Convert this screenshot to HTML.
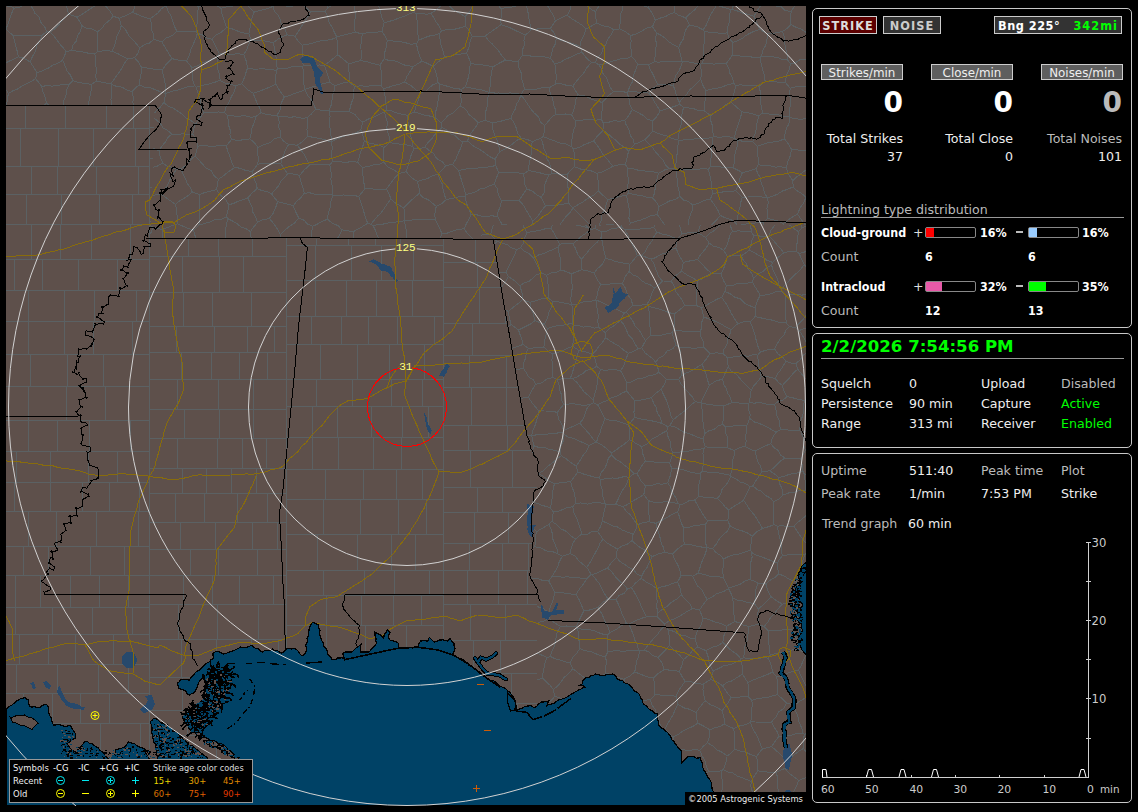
<!DOCTYPE html>
<html><head><meta charset="utf-8"><title>Lightning</title>
<style>
html,body{margin:0;padding:0;background:#000;}
body{width:1138px;height:812px;position:relative;overflow:hidden;font-family:"DejaVu Sans","Liberation Sans",sans-serif;font-size:12px;}
.panel{position:absolute;border:1px solid #c8c8c8;border-radius:5px;box-sizing:content-box}
.t{position:absolute;white-space:nowrap;line-height:15px;font-size:12.6px;margin-top:0px}
.r{text-align:right}
.b{font-family:"DejaVu Sans Condensed","DejaVu Sans",sans-serif;font-weight:bold}
.t.b{font-size:12.4px}
.btn{position:absolute;border:1px solid #ccc;text-align:center;white-space:nowrap;font-size:11.9px;line-height:16px}
.btn.b{font-size:12.6px;line-height:17px;letter-spacing:1.05px}
.big{position:absolute;font-weight:bold;font-size:28px;line-height:34px;font-family:"DejaVu Sans",sans-serif;margin-top:2px}
.hr{position:absolute;height:1px;background:#999}
.bar{position:absolute;width:49px;height:9px;border:1px solid #888;border-radius:2px;background:#000}
.bar i{display:block;height:9px}
.dash{position:absolute;width:7px;height:2px;background:#bbb}
.date{position:absolute;color:#0f0;font-weight:bold;font-size:16.6px;line-height:22px;white-space:nowrap;font-family:"DejaVu Sans",sans-serif}
#map{position:absolute;left:6px;top:6px}
#legend{position:absolute;left:9px;top:759px;width:242px;height:42px;background:#000;border:1px solid #999}
.lt{position:absolute;white-space:nowrap;font-size:9.4px;line-height:12px;font-family:"DejaVu Sans Condensed","DejaVu Sans",sans-serif}
#copy{position:absolute;left:685px;top:792px;width:121px;height:14px;background:#000;color:#eee;font-size:9.3px;line-height:14px;text-align:center;white-space:nowrap;font-family:"DejaVu Sans Condensed","DejaVu Sans",sans-serif}
</style></head><body>
<svg id="map" width="800" height="800" viewBox="6 6 800 800" shape-rendering="crispEdges">
<rect x="6" y="6" width="800" height="800" fill="#5e504b"/>
<path d="M731.1 329.6 L737.8 323.7 M731.1 329.6 L725.2 326.6 L720.8 323.8 L715.2 321.3 L710.2 319.4 L703.9 317.0 M737.8 323.7 L735.3 320.0 L731.7 314.1 L730.1 310.7 L727.4 305.7 L724.3 301.1 L721.7 297.3 M721.7 297.3 L716.4 299.5 L711.6 302.2 L706.0 305.4 L701.3 307.8 M703.9 317.0 L701.3 307.8 M806.0 251.2 L804.5 252.0 L799.2 253.6 M799.2 253.6 L801.9 259.8 L804.1 264.6 M804.1 264.6 L806.0 266.4 M703.9 317.0 L702.0 321.5 L701.9 327.1 L700.2 331.9 M701.3 307.8 L696.5 305.5 M696.5 305.5 L690.0 305.1 L684.8 305.6 M684.8 305.6 L678.7 310.6 L674.2 314.1 M674.2 314.1 L674.3 319.5 L674.4 325.9 L673.2 330.5 M673.2 330.5 L678.1 330.3 L683.4 331.3 L689.6 331.4 L695.3 331.7 L700.2 331.9 M697.7 259.5 L702.4 264.6 L706.7 269.1 L711.6 273.6 M697.7 259.5 L690.9 260.7 L683.3 262.4 M683.3 262.4 L681.7 271.2 M681.7 271.2 L687.3 275.1 L692.0 277.5 L697.5 280.7 M697.5 280.7 L702.2 278.9 L706.5 275.5 L711.6 273.6 M696.5 305.5 L696.5 299.5 L696.4 293.9 L697.3 287.3 L697.5 280.7 M684.8 305.6 L681.9 299.8 L679.1 295.9 L675.9 291.7 L674.0 285.9 L671.1 281.1 M671.1 281.1 L675.5 275.7 L681.7 271.2 M621.3 226.8 L621.8 225.0 M621.3 226.8 L624.8 230.0 M624.8 230.0 L630.9 229.2 L636.4 229.7 L641.6 228.7 L647.5 228.7 L653.8 227.5 M654.7 225.0 L653.8 227.5 M698.0 232.6 L699.4 227.6 L700.4 225.0 M698.0 232.6 L692.9 232.5 L686.7 233.0 L681.8 234.0 M679.6 225.0 L680.4 228.3 L681.8 234.0 M551.0 228.0 L544.6 229.0 L538.8 230.8 L532.7 231.2 L527.2 232.9 M551.0 228.0 L554.5 233.9 L557.4 239.2 L559.5 244.1 M559.5 244.1 L558.6 246.7 M527.2 232.9 L524.4 237.9 L523.3 243.3 L520.4 247.7 M520.4 247.7 L524.4 251.1 L529.4 253.7 L533.6 258.0 M558.6 246.7 L553.2 249.4 L548.9 251.1 L543.8 253.5 L538.4 255.0 L533.6 258.0 M605.5 258.5 L604.8 253.7 L603.2 248.5 L602.8 243.1 L601.1 237.5 M605.5 258.5 L602.3 264.2 L597.2 269.0 L594.3 273.1 M601.1 237.5 L597.1 242.3 L593.6 245.4 L589.4 249.7 L585.7 254.4 L581.4 259.1 M594.3 273.1 L587.7 271.0 L581.5 269.6 M581.5 269.6 L582.0 264.6 L581.4 259.1 M630.0 264.1 L633.3 260.2 L637.3 255.5 M630.0 264.1 L624.5 263.5 L620.4 262.3 L615.5 261.6 L610.7 259.5 L605.5 258.5 M621.3 226.8 L616.5 228.1 L611.0 228.9 L606.9 231.1 L601.4 231.8 M624.8 230.0 L628.2 235.5 L629.8 240.0 L632.7 245.6 L635.6 250.8 L637.3 255.5 M601.4 231.8 L601.1 237.5 M573.0 244.0 L575.6 248.6 L577.8 254.6 L581.4 259.1 M573.0 244.0 L577.3 240.1 L581.0 236.6 L587.0 232.5 L590.8 229.2 M601.4 231.8 L596.0 228.8 M596.0 228.8 L590.8 229.2 M596.0 228.8 L595.3 225.0 M575.8 225.0 L577.5 225.3 L582.7 226.4 L588.9 228.3 M552.6 225.0 L551.0 228.0 M559.5 244.1 L566.6 243.7 L573.0 244.0 M588.9 228.3 L590.8 229.2 M490.8 234.3 L492.2 227.7 L493.7 225.0 M490.8 234.3 L484.3 234.8 L480.7 235.1 M806.0 450.5 L805.3 450.4 M801.2 432.2 L806.0 431.3 M801.2 432.2 L803.1 437.5 L803.7 444.7 L805.3 450.4 M731.1 329.6 L729.7 334.7 L727.4 338.7 L726.9 344.9 L723.9 349.4 L723.2 353.7 M737.8 323.7 L743.4 322.0 L750.2 321.7 M757.7 355.1 L752.7 354.7 L748.0 356.3 L741.9 355.4 L737.2 356.8 L731.2 357.1 L726.9 357.0 M757.7 355.1 L760.4 351.9 M760.4 351.9 L758.0 346.6 L756.4 341.1 L755.3 336.4 L754.3 332.5 L752.3 326.8 L750.2 321.7 M723.2 353.7 L726.9 357.0 M806.0 399.4 L804.7 400.2 M801.2 432.2 L799.7 430.3 M799.7 430.3 L800.2 424.6 L800.9 420.3 L802.7 415.7 L803.8 410.8 L803.5 404.5 L804.7 400.2 M806.0 379.1 L805.4 378.3 L802.2 374.7 L797.7 369.3 M795.9 363.5 L797.7 369.3 M795.9 363.5 L800.2 359.7 L803.2 355.1 L806.0 353.4 M806.0 491.2 L805.1 490.2 M806.0 474.4 L804.6 474.7 M804.6 474.7 L805.0 479.9 L805.3 485.2 L805.1 490.2 M705.5 237.5 L709.1 233.7 L714.5 230.5 L718.4 226.4 L719.6 225.0 M705.5 237.5 L698.0 232.6 M806.0 226.1 L801.8 228.0 M801.4 225.0 L801.8 228.0 M799.2 253.6 L796.7 251.6 M796.7 251.6 L796.9 245.0 L797.4 238.5 L798.6 231.8 M801.8 228.0 L798.6 231.8 M799.0 330.6 L802.1 334.8 L804.6 339.2 L806.0 341.6 M799.0 330.6 L804.2 328.6 L806.0 328.3 M806.0 543.1 L803.6 540.4 L800.6 536.2 L797.4 531.7 L793.8 526.3 M806.0 515.6 L803.3 518.0 L797.6 522.5 L793.8 526.3 M782.4 555.6 L781.1 549.0 L781.0 543.7 L779.6 537.2 L778.3 531.9 L777.4 526.2 M782.4 555.6 L788.4 554.8 L794.5 554.7 L799.3 554.7 L804.9 554.4 M777.4 526.2 L782.5 525.4 L787.5 527.0 L793.8 526.3 M804.9 554.4 L806.0 553.6 M674.2 314.1 L669.4 312.7 L663.2 310.4 L659.4 309.1 L653.3 307.7 L648.6 306.1 M673.2 330.5 L672.0 332.9 M672.0 332.9 L665.8 334.0 L661.7 335.2 L655.5 335.4 L650.5 335.8 M650.5 335.8 L650.9 330.6 L649.6 324.8 L649.4 318.1 L649.1 311.5 L648.6 306.1 M654.5 288.1 L651.8 293.6 L650.0 299.2 L646.9 304.5 M654.5 288.1 L658.1 285.4 L662.3 281.0 M671.1 281.1 L662.3 281.0 M648.6 306.1 L646.9 304.5 M630.0 264.1 L629.0 271.5 M629.0 271.5 L625.0 277.0 L622.5 283.7 M594.3 273.1 L597.3 279.9 L600.9 284.9 M600.9 284.9 L606.2 284.4 L612.3 283.8 L617.6 283.2 L622.5 283.7 M629.0 271.5 L633.4 275.1 L637.7 276.6 L641.3 280.3 L645.6 283.3 L650.1 284.6 L654.5 288.1 M646.9 304.5 L640.3 305.2 L632.8 305.1 M622.5 283.7 L625.4 288.2 L627.4 294.4 L631.0 299.0 L632.8 305.1 M490.8 234.3 L496.9 241.5 M494.0 245.2 L496.9 241.5 M522.9 225.0 L524.0 227.5 L527.2 232.9 M520.4 247.7 L516.7 249.5 M496.9 241.5 L502.2 243.0 L507.6 244.8 L511.4 247.9 L516.7 249.5 M656.9 232.1 L662.7 234.1 L667.6 235.1 L673.0 237.3 L677.4 238.8 M656.9 232.1 L654.0 236.6 L651.5 241.7 L647.9 246.3 L645.3 251.7 L641.7 255.5 M651.0 259.1 L655.4 257.7 L660.5 254.5 L666.3 252.9 L670.5 249.8 L675.8 247.9 M651.0 259.1 L641.7 255.5 M675.8 247.9 L677.4 238.8 M653.8 227.5 L656.9 232.1 M681.8 234.0 L677.4 238.8 M637.3 255.5 L641.7 255.5 M662.3 281.0 L658.6 276.3 L656.4 270.8 L654.1 263.9 L651.0 259.1 M683.3 262.4 L680.2 257.3 L677.7 252.0 L675.8 247.9 M705.5 237.5 L709.2 243.1 M709.2 243.1 L705.8 248.6 L700.9 254.1 L697.7 259.5 M588.9 228.3 L585.3 225.0 L585.3 225.0 M760.1 295.1 L757.2 301.4 L755.2 308.1 M760.1 295.1 L757.4 290.5 L755.2 287.1 L752.3 281.9 M755.2 308.1 L750.3 305.9 L744.7 303.3 L740.8 299.1 L734.2 296.9 L729.6 293.4 L725.0 291.6 M752.3 281.9 L746.5 283.3 L741.9 283.7 L736.7 283.5 L732.4 285.7 L726.3 285.7 M725.0 291.6 L726.3 285.7 M721.7 297.3 L725.0 291.6 M750.2 321.7 L755.1 316.6 M755.1 316.6 L755.2 308.1 M711.6 273.6 L721.0 273.9 M721.0 273.9 L723.5 280.6 L726.3 285.7 M785.5 295.7 L785.9 301.0 L785.1 307.5 L785.1 312.0 L785.8 318.0 L786.3 323.0 M785.5 295.7 L790.6 294.5 L796.0 294.0 L801.7 295.2 L806.0 294.2 M806.0 314.9 L805.9 315.0 L802.7 319.9 L799.4 323.1 L795.4 327.5 M795.4 327.5 L789.4 326.6 M789.4 326.6 L786.3 323.0 M755.1 316.6 L761.1 317.9 L764.7 318.8 L770.3 319.6 L776.1 321.5 L781.5 322.8 L786.3 323.0 M781.5 291.2 L785.5 295.7 M781.5 291.2 L776.3 291.5 L771.0 293.8 L765.2 295.0 L760.1 295.1 M781.7 289.2 L784.7 285.3 L788.7 281.1 L792.5 276.9 L796.1 273.6 L801.2 268.7 L804.1 264.6 M781.7 289.2 L781.5 291.2 M799.0 330.6 L795.4 327.5 M774.7 348.9 L777.2 343.8 L780.0 339.1 L784.2 334.8 L785.7 330.6 L789.4 326.6 M774.7 348.9 L777.6 353.6 L782.7 357.2 L785.9 361.3 M785.9 361.3 L791.8 363.2 L795.9 363.5 M760.4 351.9 L767.7 349.8 L774.7 348.9 M769.7 470.9 L774.0 467.7 L777.6 464.1 L780.8 460.7 L785.1 458.1 M769.7 470.9 L774.3 473.8 L778.6 477.5 M778.6 477.5 L783.0 476.7 L789.1 474.4 L794.1 473.5 L798.0 472.9 L803.0 471.3 M785.1 458.1 L791.1 459.0 L796.2 458.9 L800.8 459.0 M800.8 459.0 L802.2 464.3 L803.0 471.3 M804.6 474.7 L803.0 471.3 M805.1 490.2 L799.6 490.6 L794.7 492.2 L788.6 493.0 L782.8 495.0 M782.8 495.0 L782.0 488.6 L779.2 483.0 L778.6 477.5 M805.3 450.4 L800.8 459.0 M709.2 243.1 L713.3 246.1 L719.0 247.4 L723.6 250.4 M730.1 225.0 L732.3 231.2 M732.3 231.2 L729.6 235.7 L728.5 241.0 L726.7 246.1 L723.6 250.4 M721.0 273.9 L723.7 268.5 L725.8 262.3 L727.5 256.4 M723.6 250.4 L727.5 256.4 M782.8 495.0 L779.2 498.8 L773.9 501.8 M761.8 471.4 L758.9 476.4 L755.9 480.8 L752.9 485.9 M761.8 471.4 L769.7 470.9 M752.9 485.9 L757.4 489.7 L761.6 491.4 L765.3 495.3 L770.6 498.2 L773.9 501.8 M777.4 526.2 L773.9 524.6 M773.9 501.8 L773.5 506.7 L773.1 512.9 L773.8 519.0 L773.9 524.6 M700.2 331.9 L701.0 336.8 L703.5 342.4 L703.8 347.2 M723.2 353.7 L716.8 352.9 L710.0 353.3 M703.8 347.2 L710.0 353.3 M662.2 423.5 L657.3 422.1 L652.0 420.9 L645.5 419.7 L641.0 419.1 L634.7 417.4 M662.2 423.5 L660.3 417.5 L657.3 412.8 L656.2 407.6 L653.4 402.6 L651.6 397.5 M634.7 417.4 L633.9 412.5 L634.5 407.2 L634.8 400.9 M651.6 397.5 L646.7 398.8 L640.6 400.1 L634.8 400.9 M669.8 425.6 L667.9 426.8 M669.8 425.6 L673.3 419.8 M667.9 426.8 L662.2 423.5 M673.3 419.8 L670.6 415.6 L669.6 409.7 L667.8 404.6 L666.0 399.4 L663.1 393.7 L661.4 389.2 M661.4 389.2 L656.1 393.1 L651.6 397.5 M516.7 249.5 L515.2 253.6 L512.5 259.4 L510.8 262.8 L508.1 267.6 L506.0 272.5 M498.4 272.2 L500.3 272.0 L506.0 272.5 M669.5 463.0 L671.6 457.3 L672.7 452.9 M669.5 463.0 L663.7 462.8 L657.3 462.8 L652.3 461.7 L645.5 460.9 M672.7 452.9 L670.7 447.0 L670.3 441.8 L668.0 436.6 L666.7 431.0 M666.7 431.0 L661.4 433.5 L656.3 437.0 L651.3 439.5 L647.1 444.2 L641.5 446.6 M645.5 460.9 L642.9 454.2 L641.5 446.6 M704.2 448.3 L699.3 449.5 L694.2 449.6 L688.1 451.2 L683.6 451.3 L677.9 452.4 L672.7 452.9 M704.2 448.3 L703.0 453.3 L703.4 459.9 L703.2 464.6 L702.2 471.1 M671.9 468.5 L678.1 468.6 L682.9 469.5 L688.4 471.6 L695.1 473.0 L700.4 473.2 M671.9 468.5 L669.5 463.0 M702.2 471.1 L700.4 473.2 M705.1 446.6 L703.0 439.0 M705.1 446.6 L704.2 448.3 M703.0 439.0 L699.0 437.8 L693.0 435.2 L688.2 433.5 L683.6 432.1 L679.9 429.9 L675.4 427.1 L669.8 425.6 M667.9 426.8 L666.7 431.0 M628.6 424.6 L634.7 417.4 M628.6 424.6 L629.8 432.2 L629.6 439.6 M629.6 439.6 L636.2 443.5 L641.5 446.6 M701.0 402.9 L701.7 407.2 L703.0 413.3 L702.3 418.2 L703.3 424.1 L703.8 427.6 L704.7 433.6 M701.0 402.9 L707.5 404.3 L711.5 404.7 L717.0 405.8 L723.2 406.0 M704.7 433.6 L709.1 430.7 L713.9 429.5 L718.5 425.8 L722.8 424.2 M722.8 424.2 L723.2 417.9 L723.8 412.8 L723.2 406.0 M782.4 555.6 L777.1 563.0 M804.9 554.4 L803.0 560.1 L802.0 566.0 M801.9 566.2 L800.4 570.0 L799.7 571.5 M798.0 576.0 L797.6 577.1 L796.1 581.7 M777.1 563.0 L777.7 568.0 L778.7 573.9 M796.1 581.7 L789.8 579.7 L784.6 576.3 L778.7 573.9 M547.8 705.1 L547.5 703.8 M537.0 704.5 L538.5 704.3 M562.0 699.0 L559.3 697.7 L554.7 696.3 M554.7 696.3 L551.3 700.4 L547.9 702.9 M732.3 231.2 L739.0 230.9 L744.2 231.4 L751.4 232.0 M751.4 232.0 L750.8 226.6 L751.0 225.0 M798.6 231.8 L794.9 229.3 L790.7 225.7 L789.6 225.0 M781.7 289.2 L778.8 284.6 L777.5 279.3 L775.7 275.2 L773.0 270.1 L771.6 265.0 M752.3 281.9 L753.5 278.1 M771.6 265.0 L767.2 267.6 L762.6 271.7 L758.0 274.3 L753.5 278.1 M727.5 256.4 L734.4 255.7 L741.6 255.7 M753.5 278.1 L751.5 273.1 L748.0 268.7 L746.5 263.8 L743.2 259.9 L741.6 255.7 M527.8 434.9 L531.6 435.7 M531.6 435.7 L532.8 440.5 L533.7 445.7 M532.0 452.9 L533.7 445.7 M672.0 332.9 L673.9 338.8 L675.9 344.9 M703.8 347.2 L697.1 348.0 L691.4 348.0 L686.0 347.5 L679.8 347.7 M675.9 344.9 L679.8 347.7 M702.1 364.2 L696.5 367.7 L691.7 370.9 L687.0 372.6 L681.3 375.8 M702.1 364.2 L704.4 370.1 L706.2 374.5 L707.4 379.6 L709.3 385.3 M709.3 385.3 L706.8 390.4 L704.0 396.3 L700.6 402.6 M678.6 379.4 L681.3 375.8 M678.6 379.4 L681.1 383.9 L684.7 388.4 L689.3 393.5 L692.4 397.1 L695.2 401.6 M700.6 402.6 L695.2 401.6 M710.0 353.3 L706.8 358.4 L702.1 364.2 M679.8 347.7 L680.2 352.9 L681.1 359.2 L681.4 363.8 L680.9 369.4 L681.3 375.8 M675.9 344.9 L672.7 348.8 L667.2 351.0 L663.8 355.5 L659.0 358.0 L655.7 362.0 M655.7 362.0 L657.7 366.9 L658.8 372.3 M658.8 372.3 L662.3 375.3 L666.3 379.4 M666.3 379.4 L672.2 379.3 L678.6 379.4 M673.3 419.8 L677.2 416.5 L682.1 412.8 L686.6 409.4 L690.0 405.9 L695.2 401.6 M661.4 389.2 L664.4 384.2 L666.3 379.4 M701.0 402.9 L700.6 402.6 M704.7 433.6 L703.0 439.0 M634.8 400.9 L630.3 395.2 L626.6 391.0 M658.8 372.3 L654.1 374.9 L648.6 375.8 L642.2 378.4 L638.1 378.5 L631.7 381.8 L627.0 382.9 M627.0 382.9 L626.6 391.0 M628.6 424.6 L622.3 422.9 L616.0 420.8 L610.6 420.8 L604.9 418.5 M626.6 391.0 L622.2 393.1 L616.7 396.2 L611.5 397.6 L607.7 400.3 L602.8 402.0 L597.6 404.7 M604.9 418.5 L602.4 413.8 L599.9 408.9 L597.6 404.7 M620.2 320.3 L623.6 324.4 L626.2 329.5 L628.4 334.7 L632.8 339.4 L634.9 343.6 L638.0 348.6 M620.2 320.3 L624.4 312.8 M624.4 312.8 L626.3 311.7 M626.3 311.7 L629.1 316.0 L633.2 321.7 L635.4 326.5 L639.3 330.2 L642.8 336.3 L645.5 340.8 M645.5 340.8 L641.7 347.9 M641.7 347.9 L638.0 348.6 M599.0 327.6 L597.6 321.7 L598.5 316.4 L597.4 311.1 L596.5 304.6 L595.8 300.0 M599.0 327.6 L605.4 332.8 M595.8 300.0 L601.2 302.0 L605.6 304.4 L609.8 306.1 L614.0 308.2 L618.9 310.6 L624.4 312.8 M605.4 332.8 L610.0 328.2 L615.4 324.7 L620.2 320.3 M600.9 284.9 L598.3 289.0 L597.6 294.4 L595.7 299.8 M632.8 305.1 L626.3 311.7 M650.5 335.8 L645.5 340.8 M655.7 362.0 L651.2 357.4 L645.5 353.4 L641.7 347.9 M539.0 473.6 L538.1 473.5 M539.0 473.6 L543.8 476.7 L548.6 480.8 L554.5 483.6 M554.5 483.6 L553.1 489.2 L552.4 496.0 L551.6 502.5 L550.2 507.8 M550.2 507.8 L545.2 506.2 L540.1 504.6 L534.9 502.5 L532.4 501.9 M561.3 455.7 L560.2 452.0 M561.3 455.7 L557.3 458.8 L552.4 462.9 L547.7 466.5 L544.0 470.1 L539.0 473.6 M560.2 452.0 L554.2 450.1 L549.4 449.7 L544.5 447.5 L539.5 447.7 L533.7 445.7 M538.8 410.9 L534.6 406.0 L531.7 402.5 L528.5 397.1 M538.8 410.9 L538.2 415.2 L536.6 420.8 L534.9 425.8 L532.6 430.6 L531.6 435.7 M520.7 398.5 L522.3 398.1 L528.5 397.1 M671.9 468.5 L670.2 475.9 L667.8 482.7 M645.5 460.9 L642.5 464.7 L640.1 468.9 L637.0 473.5 M637.0 473.5 L640.6 480.3 L645.4 485.8 M667.8 482.7 L661.8 484.3 L656.8 483.6 L651.2 485.6 L645.4 485.8 M750.3 486.6 L747.7 492.0 L745.8 495.7 L743.6 500.2 M750.3 486.6 L744.9 483.3 L740.6 482.2 L735.8 478.9 L730.9 476.3 M730.9 476.3 L728.3 481.4 L725.9 485.2 L722.2 488.8 L720.7 494.3 L717.3 498.5 M743.6 500.2 L738.6 503.7 L734.1 506.2 L728.6 510.1 M728.6 510.1 L724.9 506.7 L721.8 502.6 L717.3 498.5 M752.9 485.9 L750.3 486.6 M773.9 524.6 L768.7 526.7 L762.5 528.4 M762.5 528.4 L759.9 524.1 L757.0 518.8 L753.8 514.3 L750.1 510.1 L746.7 504.8 L743.6 500.2 M730.3 475.3 L730.9 476.3 M730.3 475.3 L724.5 474.1 L719.4 473.0 L713.6 472.2 L707.3 472.1 L702.2 471.1 M698.5 496.3 L699.0 489.9 L698.8 485.2 L700.2 479.3 L700.4 473.2 M698.5 496.3 L704.5 497.2 L710.8 497.6 L717.3 498.5 M762.5 528.4 L757.0 531.7 L752.2 536.2 M752.2 536.2 L747.5 532.9 L741.2 530.5 L736.5 529.3 L730.2 525.9 M728.6 510.1 L729.0 514.9 L727.7 520.6 M727.7 520.6 L730.2 525.9 M758.1 583.0 L765.8 583.9 M758.1 583.0 L750.0 579.4 M777.1 563.0 L772.1 561.1 L767.6 559.2 L761.7 556.9 L756.6 555.2 L751.7 552.6 M778.7 573.9 L775.1 577.3 L769.6 580.5 L765.8 583.9 M750.0 579.4 L750.9 574.8 L750.7 569.0 L750.4 563.9 L752.1 557.2 L751.7 552.6 M752.2 536.2 L751.1 543.1 L750.4 550.1 M750.4 550.1 L751.7 552.6 M705.1 446.6 L710.4 447.6 L715.7 447.9 L722.2 447.2 L727.9 447.9 M722.8 424.2 L725.4 426.8 M725.4 426.8 L725.2 432.0 L727.3 436.9 L727.2 443.4 L727.9 447.9 M730.3 475.3 L731.9 471.0 L732.4 466.0 L732.0 461.3 L734.1 456.0 L734.2 450.5 M727.9 447.9 L734.2 450.5 M723.2 406.0 L731.6 402.9 M709.3 385.3 L715.4 381.3 L722.7 379.0 M731.6 402.9 L730.5 397.6 L727.3 392.6 L726.5 388.9 L723.7 384.3 L722.7 379.0 M726.9 357.0 L728.3 366.7 M722.7 379.0 L725.0 373.6 L728.3 366.7 M657.8 612.8 L656.8 607.3 L657.1 600.7 L656.3 594.2 L656.9 588.7 M657.8 612.8 L663.3 608.6 L667.6 606.0 L671.5 602.2 L676.7 599.1 L681.3 594.6 M656.9 588.7 L661.4 586.7 L667.3 585.7 L671.9 583.6 L677.6 582.0 M681.3 594.6 L680.0 587.8 L677.6 582.0 M679.3 671.5 L673.5 670.2 L669.3 670.1 L664.3 669.5 M679.3 671.5 L682.2 664.8 L683.4 659.7 M683.4 659.7 L679.9 655.4 L675.9 652.0 L673.1 648.9 L669.5 645.2 M664.3 669.5 L661.9 662.9 L658.0 657.2 M669.5 645.2 L665.9 649.6 L662.0 653.7 L658.0 657.2 M657.8 612.8 L657.0 616.4 M657.0 616.4 L660.4 619.7 L664.6 624.0 M681.3 594.6 L684.3 598.4 L689.5 603.3 L692.3 608.5 M692.3 608.5 L687.6 611.2 L682.6 614.4 L678.0 617.0 L674.2 619.0 L669.4 620.7 L664.6 624.0 M644.2 650.3 L649.1 651.8 L652.5 655.7 L658.0 657.2 M644.2 650.3 L647.7 645.4 L650.7 642.0 L654.2 637.8 L658.0 633.8 L661.3 629.0 L665.0 625.8 M669.5 645.2 L669.2 638.0 L668.7 630.4 M668.7 630.4 L665.0 625.8 M657.0 616.4 L651.7 617.0 L646.6 616.7 M638.4 650.0 L637.5 644.9 L634.8 640.0 L633.5 635.2 L630.9 628.7 L629.1 624.3 M638.4 650.0 L639.5 651.0 M644.2 650.3 L639.5 651.0 M646.6 616.7 L640.6 618.6 L634.2 621.2 L629.1 624.3 M665.0 625.8 L664.6 624.0 M548.7 580.9 L551.3 585.8 L554.8 592.2 M548.7 580.9 L552.1 576.4 M552.1 576.4 L556.3 576.3 L562.4 577.3 L567.9 576.7 L571.6 577.8 L577.4 577.4 L581.4 578.2 L587.3 578.4 M587.3 578.4 L583.6 583.6 L579.5 589.0 L576.1 594.2 M576.1 594.2 L570.9 594.0 L564.8 593.2 L560.7 592.1 L554.8 592.2 M548.7 580.9 L544.0 580.9 L537.8 578.7 L534.0 578.4 L531.0 577.9 M537.0 605.9 L538.6 607.1 L544.5 609.4 L548.9 613.2 M554.8 592.2 L553.7 597.7 L552.1 602.5 L549.7 608.5 L548.9 613.2 M537.0 623.6 L539.3 622.1 L544.8 620.8 L549.2 618.2 M549.2 618.2 L548.9 613.2 M532.3 548.3 L534.6 546.6 M534.6 546.6 L535.9 541.0 L535.1 537.4 L536.7 531.6 M532.7 528.2 L536.7 531.6 M562.3 556.3 L559.2 561.9 L557.6 567.1 L555.1 571.3 L552.1 576.4 M562.3 556.3 L557.8 553.7 M557.8 553.7 L551.2 551.1 L546.5 551.0 L541.0 548.1 L534.6 546.6 M557.8 553.7 L557.0 549.3 L555.1 544.5 L552.9 539.2 L552.5 534.1 L551.1 529.5 L549.0 524.2 M549.0 524.2 L542.4 528.2 L536.7 531.6 M549.0 524.2 L551.9 521.3 M551.9 521.3 L553.4 511.9 M553.4 511.9 L550.2 507.8 M798.5 670.0 L793.9 671.0 L787.5 673.2 L783.1 676.0 L776.7 676.9 M798.5 670.0 L800.6 675.0 L803.5 680.7 L806.0 685.7 M776.7 676.9 L777.5 682.5 L777.3 688.9 L777.5 694.7 M777.5 694.7 L782.5 698.9 L786.5 703.2 M786.5 703.2 L794.5 705.2 M794.5 705.2 L800.2 700.8 L806.0 697.6 M805.3 654.0 L798.6 648.9 M806.0 655.4 L803.2 660.3 L801.4 665.2 L798.5 670.0 M770.1 655.2 L776.5 653.3 L782.2 652.4 L787.0 652.3 L792.6 649.7 L798.6 648.9 M770.1 655.2 L768.4 658.2 M768.4 658.2 L771.3 665.5 L772.6 672.0 M772.6 672.0 L776.7 676.9 M771.4 722.1 L767.0 722.6 L761.5 722.1 L755.3 722.0 L750.9 721.6 M771.4 722.1 L775.8 717.2 L778.3 712.1 L783.5 708.6 L786.5 703.2 M751.8 700.5 L756.6 698.7 L762.5 698.0 L766.9 697.7 L771.8 696.1 L777.5 694.7 M751.8 700.5 L752.4 705.0 L751.5 710.3 L751.4 715.6 L750.9 721.6 M754.1 603.3 L758.3 609.0 M754.1 603.3 L755.4 598.4 L755.2 592.9 L756.2 588.5 L758.1 583.0 M765.8 583.9 L768.0 590.9 L771.0 596.7 M758.3 609.0 L762.8 605.2 L767.3 601.0 L771.0 596.7 M751.8 700.5 L748.3 697.0 M772.6 672.0 L767.0 674.8 L762.0 676.5 L757.6 678.2 L753.6 679.9 L747.9 682.6 M748.3 697.0 L748.7 690.5 L747.9 682.6 M733.7 728.5 L734.5 734.5 L734.7 738.1 L734.1 743.3 L734.7 749.2 M733.7 728.5 L728.5 726.2 L724.0 724.1 M734.7 749.2 L730.8 753.4 L727.2 756.1 M707.6 742.7 L713.3 746.4 L717.4 750.1 L721.5 751.9 L727.2 756.1 M707.6 742.7 L709.5 736.4 L710.0 730.0 M724.0 724.1 L720.0 726.4 L714.8 727.8 L710.0 730.0 M678.0 704.6 L684.4 708.0 L690.1 709.4 L696.0 712.5 M678.0 704.6 L675.2 709.3 L673.3 714.3 L670.2 719.4 L666.7 725.4 L664.8 729.6 M664.8 729.6 L669.1 733.6 L672.8 736.8 M672.8 736.8 L677.5 734.9 L682.8 731.2 L687.1 729.0 L693.2 726.2 L697.9 723.2 M697.9 723.2 L696.3 717.7 L696.0 712.5 M710.6 679.5 L716.6 681.8 L722.6 685.8 M710.6 679.5 L703.3 684.1 M703.3 684.1 L703.0 689.7 L703.8 695.5 L705.1 700.7 M705.1 700.7 L710.3 704.6 L716.2 707.1 L722.3 710.6 M722.6 685.8 L726.6 692.1 L731.1 697.6 M731.1 697.6 L728.3 702.6 L724.9 707.0 L722.3 710.6 M740.8 659.8 L734.8 662.6 L730.4 664.6 L723.8 665.7 L718.5 668.6 L713.3 670.9 M740.8 659.8 L742.5 666.6 L742.6 674.3 M713.3 670.9 L710.6 679.5 M742.6 674.3 L737.9 677.0 L731.9 680.9 L727.1 682.2 L722.6 685.8 M676.1 696.4 L678.5 690.5 L682.3 685.4 L685.1 681.3 M676.1 696.4 L678.0 704.6 M685.1 681.3 L691.6 681.7 L696.9 683.8 L703.3 684.1 M696.0 712.5 L699.9 707.1 L705.1 700.7 M724.0 724.1 L724.0 717.9 L722.3 710.6 M710.0 730.0 L703.6 726.0 L697.9 723.2 M748.3 697.0 L743.2 696.4 L736.6 697.6 L731.1 697.6 M747.9 682.6 L742.6 674.3 M750.3 722.4 L750.9 721.6 M750.3 722.4 L745.4 724.6 L739.2 726.1 L733.7 728.5 M554.7 696.3 L553.3 689.6 M537.0 679.8 L538.2 679.6 L542.6 677.9 M553.3 689.6 L550.5 685.7 L546.7 682.1 L542.6 677.9 M753.9 235.9 L759.5 236.0 L763.2 236.7 L769.0 236.1 M753.9 235.9 L751.7 240.8 L750.8 245.6 L749.2 250.3 M749.2 250.3 L753.4 252.2 L758.5 255.2 L763.9 257.8 L767.0 260.4 L772.4 262.3 M769.0 236.1 L773.0 240.1 L777.2 244.9 L780.1 248.2 L783.8 252.8 M783.8 252.8 L777.4 258.0 L772.4 262.3 M751.4 232.0 L753.9 235.9 M775.0 225.0 L770.9 230.4 L769.0 236.1 M741.6 255.7 L749.2 250.3 M771.6 265.0 L772.4 262.3 M796.7 251.6 L790.2 251.4 L783.8 252.8 M629.6 439.6 L624.9 443.7 L620.0 446.9 L616.1 450.0 L611.4 452.9 M604.9 418.5 L603.1 423.9 L601.5 427.4 L600.2 432.9 L598.1 436.9 L596.5 442.1 M611.4 452.9 L606.6 448.7 L602.0 445.0 L596.5 442.1 M656.9 588.7 L652.2 585.3 L646.8 582.5 L641.4 578.4 M646.6 616.7 L643.9 612.0 L641.7 607.6 L639.9 602.9 L637.2 597.5 L634.1 591.7 L631.4 587.5 M631.4 587.5 L636.2 582.4 L641.4 578.4 M652.2 556.6 L647.7 553.3 L643.9 549.4 L639.8 547.3 L636.2 544.4 L632.0 540.6 M652.2 556.6 L649.7 561.4 L647.1 567.4 L644.1 571.4 L641.5 576.5 M632.0 540.6 L627.8 543.9 L622.1 546.0 L617.2 549.1 M617.2 549.1 L616.4 557.5 M641.5 576.5 L636.7 573.7 L633.8 570.0 L629.5 567.8 L624.3 564.3 L620.0 561.5 L616.4 557.5 M605.6 337.6 L610.8 341.5 L613.9 343.3 L619.1 346.2 L624.1 350.4 L628.5 353.2 M605.6 337.6 L602.4 342.4 L599.0 346.1 L596.0 350.5 L592.2 354.1 M592.2 354.1 L595.3 359.3 L596.8 366.2 M628.5 353.2 L626.0 358.6 L623.8 365.5 L620.6 370.8 M620.6 370.8 L616.0 369.7 L609.8 369.6 L606.3 370.5 L600.4 369.5 M596.8 366.2 L600.4 369.5 M605.4 332.8 L605.6 337.6 M638.0 348.6 L633.8 351.3 L628.5 353.2 M570.4 378.1 L572.3 373.1 L573.8 367.8 L575.9 361.4 L576.8 356.2 L579.0 350.6 M570.4 378.1 L572.7 378.7 M579.0 350.6 L585.6 351.9 L592.2 354.1 M572.7 378.7 L576.9 376.9 L583.1 373.4 L586.3 370.4 L592.3 368.9 L596.8 366.2 M627.0 382.9 L624.3 377.3 L620.6 370.8 M597.6 404.7 L593.5 402.8 M593.5 402.8 L593.0 400.1 M593.0 400.1 L594.4 395.3 L596.1 390.0 L597.0 384.7 L597.4 379.3 L598.4 375.4 L600.4 369.5 M572.7 378.7 L577.3 382.9 L581.4 388.1 L584.0 391.9 L588.7 395.8 L593.0 400.1 M557.4 379.8 L563.2 378.5 L570.4 378.1 M557.4 379.8 L559.1 385.2 L559.2 389.5 L561.2 394.0 L561.6 399.8 L563.8 404.3 M593.5 402.8 L589.7 404.7 M589.7 404.7 L584.6 405.3 L578.7 404.8 L574.1 403.9 L568.8 404.0 L563.8 404.3 M538.8 410.9 L544.5 411.0 L551.8 411.1 L557.4 412.5 M553.1 377.4 L557.4 379.8 M553.1 377.4 L546.8 379.0 L542.0 382.8 L535.6 384.4 M535.6 384.4 L531.7 390.5 L528.5 397.1 M557.4 412.5 L560.5 408.1 L563.8 404.3 M558.6 246.7 L559.0 253.3 L560.4 258.8 L560.1 264.6 L561.0 270.0 M581.5 269.6 L575.5 272.4 L571.1 273.7 M571.1 273.7 L565.5 271.3 L561.0 270.0 M506.0 272.5 L508.3 276.5 M508.3 276.5 L505.8 281.1 L503.0 285.3 L501.1 289.0 M643.8 494.7 L648.7 500.8 M643.8 494.7 L637.8 498.3 L633.4 500.6 L627.6 504.5 L622.9 506.6 M622.9 506.6 L625.9 510.7 L630.6 515.2 L633.8 519.5 L637.1 525.0 M637.1 525.0 L643.1 522.5 L649.1 521.7 M649.1 521.7 L649.3 516.4 L648.4 510.7 L648.2 506.9 L648.7 500.8 M667.8 482.7 L670.4 487.0 L672.3 492.4 L675.7 497.6 L678.1 503.3 M645.4 485.8 L643.8 494.7 M648.7 500.8 L653.7 502.2 L660.6 502.3 L665.5 501.6 L672.4 502.8 L678.1 503.3 M755.2 451.2 L750.8 449.6 L745.0 446.3 M755.2 451.2 L759.5 448.6 L764.7 446.3 L770.8 443.6 M745.0 446.3 L746.2 440.9 L745.5 436.0 L746.6 431.5 L746.8 425.7 M770.8 443.6 L772.6 437.4 L776.1 432.2 M776.1 432.2 L770.6 429.0 L766.0 426.5 L759.9 423.7 L754.7 422.1 L749.8 418.5 M749.8 418.5 L746.8 425.7 M761.8 471.4 L760.6 466.3 L757.6 461.4 L756.3 456.8 L755.2 451.2 M734.2 450.5 L740.1 447.5 L745.0 446.3 M785.1 458.1 L780.7 455.1 L778.0 450.3 L773.8 447.5 L770.8 443.6 M725.4 426.8 L731.0 426.2 L735.5 425.7 L741.8 425.3 L746.8 425.7 M799.7 430.3 L793.3 430.4 L787.7 430.0 L781.0 429.3 M781.0 429.3 L776.1 432.2 M731.6 402.9 L736.4 402.7 L742.7 403.4 L748.5 403.3 M748.5 403.3 L748.2 408.5 L750.2 414.3 L749.8 418.5 M751.2 390.0 L750.2 396.1 L749.4 402.4 M751.2 390.0 L754.0 385.6 L758.2 381.0 L761.1 376.9 M749.4 402.4 L754.1 403.2 L759.9 402.4 L765.2 403.9 L770.0 404.7 L774.5 404.7 M761.1 376.9 L768.6 377.0 L775.2 378.4 M775.2 378.4 L778.1 382.0 L782.4 385.5 M774.5 404.7 L778.2 401.2 L783.1 399.9 L787.2 396.7 M787.2 396.7 L784.3 391.9 L782.4 385.5 M728.3 366.7 L731.5 371.4 L736.4 374.1 L739.8 378.4 L743.4 382.7 L747.8 386.6 L751.2 390.0 M748.5 403.3 L749.4 402.4 M757.7 355.1 L758.2 361.2 L758.6 365.7 L760.4 371.4 L761.1 376.9 M781.0 429.3 L779.0 424.8 L779.0 419.7 L776.5 415.1 L776.2 410.3 L774.5 404.7 M785.9 361.3 L783.3 365.6 L780.5 370.2 L777.6 373.5 L775.2 378.4 M797.7 369.3 L793.8 372.6 L789.5 377.9 L785.4 382.0 L782.4 385.5 M804.7 400.2 L799.2 399.8 L793.4 398.0 L787.2 396.7 M762.4 806.0 L762.6 803.7 M777.6 806.0 L776.4 804.0 M776.4 804.0 L769.3 804.1 L762.6 803.7 M738.1 804.1 L742.9 801.3 L747.0 798.7 L752.4 797.2 M738.1 804.1 L737.6 806.0 M762.6 803.7 L757.7 800.5 L752.4 797.2 M730.2 525.9 L727.3 531.1 L722.7 535.4 L718.9 539.5 L716.9 543.4 L712.7 548.4 M750.4 550.1 L744.7 552.0 L739.4 553.9 L733.6 554.7 L728.1 556.7 L723.6 559.0 M723.6 559.0 L720.0 555.0 L716.0 552.6 L712.7 548.4 M597.6 531.4 L603.1 539.2 M597.6 531.4 L591.8 531.6 L587.8 534.0 L581.8 534.0 M603.1 539.2 L600.0 543.3 L597.7 548.7 L594.6 554.1 L592.4 558.4 L589.9 562.6 L586.8 567.4 M581.8 534.0 L575.5 539.0 M575.5 539.0 L573.0 543.1 L571.1 548.7 L570.1 553.6 M570.1 553.6 L575.1 556.1 L578.6 560.6 L582.6 564.1 L586.8 567.4 M632.0 540.6 L633.2 534.3 M617.2 549.1 L611.8 545.8 L606.9 542.9 L603.1 539.2 M602.4 521.0 L607.1 523.2 L612.5 525.8 L617.9 527.1 L622.3 530.0 L628.1 532.3 L633.2 534.3 M602.4 521.0 L600.5 526.8 L597.6 531.4 M572.7 506.7 L566.3 507.9 L559.5 510.9 L553.4 511.9 M572.7 506.7 L573.8 512.8 L576.4 517.5 L578.2 522.9 L580.2 528.3 L581.8 534.0 M551.9 521.3 L556.2 524.3 L561.0 528.9 L566.0 531.2 L571.1 536.0 L575.5 539.0 M562.3 556.3 L570.1 553.6 M587.3 578.4 L591.2 574.4 M591.2 574.4 L586.8 567.4 M537.0 653.3 L540.9 654.7 L547.0 657.6 M547.0 657.6 L545.0 662.9 L544.1 667.8 L543.0 673.4 L542.6 677.9 M638.4 650.0 L633.9 650.1 L628.9 650.4 L624.0 651.6 L617.6 650.7 L613.4 650.9 L607.8 651.9 M626.4 623.6 L629.1 624.3 M626.4 623.6 L621.0 626.0 L615.4 629.9 L609.8 632.5 M607.8 651.9 L607.0 645.9 L607.4 641.0 L607.9 634.7 M609.8 632.5 L607.9 634.7 M576.1 594.2 L579.0 599.4 L581.4 604.7 L583.7 611.1 M549.2 618.2 L554.0 622.6 L560.4 626.3 M583.7 611.1 L581.3 616.0 L578.4 621.7 L576.4 626.8 M560.4 626.3 L566.5 626.0 L570.4 626.8 L576.4 626.8 M547.0 657.6 L550.3 656.4 M560.4 626.3 L557.9 630.8 L556.2 635.6 L555.8 640.8 L554.4 646.0 L551.7 651.8 L550.3 656.4 M609.8 632.5 L607.9 626.8 L605.1 621.8 L603.2 616.8 L601.2 612.7 L598.0 607.3 M607.9 634.7 L602.4 634.0 L596.9 632.1 L593.4 630.3 L587.8 629.7 L582.1 629.4 L577.2 627.7 M598.0 607.3 L591.2 609.7 L583.7 611.1 M576.4 626.8 L577.2 627.7 M605.4 656.6 L600.7 655.8 L594.9 653.3 L590.4 651.2 L584.2 650.8 L579.9 648.4 M605.4 656.6 L606.5 661.7 L605.4 668.1 L606.0 673.1 M602.7 675.4 L606.0 673.1 M585.4 678.3 L582.2 676.0 L576.9 671.9 L572.7 668.7 M579.9 648.4 L576.9 652.9 L572.7 657.6 L570.1 663.0 M572.7 668.7 L570.1 663.0 M607.8 651.9 L605.4 656.6 M577.2 627.7 L578.5 632.8 L578.7 638.9 L579.4 642.6 L579.9 648.4 M583.4 687.7 L584.2 686.5 M553.3 689.6 L557.8 685.9 L561.2 681.8 L564.1 677.3 L568.7 673.7 L572.7 668.7 M550.3 656.4 L554.5 658.5 L560.2 660.0 L564.5 661.7 L570.1 663.0 M642.1 700.3 L645.0 700.2 L650.3 699.7 M625.0 683.0 L623.9 679.3 M653.2 678.1 L646.9 676.8 L640.5 674.2 L634.7 671.9 M653.2 678.1 L654.6 683.0 L654.4 689.1 L655.0 694.9 M634.7 671.9 L629.2 676.5 L623.9 679.3 M655.0 694.9 L650.3 699.7 M662.5 728.4 L660.2 724.9 L658.8 718.6 L657.3 715.4 L657.3 715.3 M656.6 713.5 L655.3 709.6 L651.6 704.6 L650.3 699.7 M606.0 673.1 L609.5 674.2 M616.3 676.8 L618.0 677.5 L623.9 679.3 M639.5 651.0 L638.4 657.1 L636.7 661.1 L635.7 667.3 L634.7 671.9 M664.3 669.5 L658.0 673.6 L653.2 678.1 M676.1 696.4 L670.7 695.3 L665.1 695.9 L660.4 695.0 L655.0 694.9 M685.1 681.3 L682.1 676.6 L679.3 671.5 M663.9 729.4 L664.8 729.6 M796.1 581.7 L798.6 585.4 M793.4 603.6 L794.6 609.5 L796.8 613.5 L799.0 619.5 M793.4 603.6 L788.3 603.3 L782.4 604.1 M782.4 604.1 L778.4 608.4 L774.7 613.1 L770.8 617.2 L767.9 622.0 L764.1 626.6 M799.0 619.5 L795.3 624.7 L793.1 629.5 M793.1 629.5 L788.3 629.9 L782.8 629.9 L777.6 630.7 L772.8 630.5 L767.8 630.3 M767.8 630.3 L764.1 626.6 M800.0 619.6 L799.0 619.5 M798.0 594.5 L796.2 597.1 L793.4 603.6 M771.0 596.7 L777.1 601.2 L782.4 604.1 M758.2 624.4 L758.7 618.7 L757.8 614.5 L758.3 609.0 M758.2 624.4 L764.1 626.6 M798.6 648.9 L796.8 643.7 L796.5 640.1 L795.1 634.8 L793.1 629.5 M770.1 655.2 L769.7 649.7 L769.0 644.9 L768.9 639.7 L769.0 635.1 L767.8 630.3 M754.1 603.3 L748.7 602.8 L743.7 601.1 L737.2 600.2 L732.7 598.1 M732.7 598.1 L733.2 603.1 L733.7 610.7 L734.1 615.8 L734.9 621.5 M758.2 624.4 L749.2 626.4 M749.2 626.4 L744.3 625.6 L740.2 623.1 L734.9 621.5 M768.4 658.2 L762.8 657.6 L757.9 658.9 L752.9 658.6 L748.8 658.3 L743.1 657.9 M749.2 626.4 L748.1 632.2 L747.9 637.2 L746.5 642.8 L744.3 647.2 L744.6 652.6 L743.1 657.9 M740.8 659.8 L741.1 659.1 M743.1 657.9 L741.1 659.1 M697.8 646.9 L695.1 639.1 M697.8 646.9 L706.1 650.7 M706.1 650.7 L711.7 647.5 L717.8 645.7 L722.8 642.5 M695.1 639.1 L696.4 633.5 L699.0 628.5 L701.6 624.0 L703.1 618.2 M703.1 618.2 L709.5 619.6 L714.3 621.9 L721.2 623.5 L726.5 626.2 M726.5 626.2 L726.0 630.9 L723.5 636.8 L722.8 642.5 M683.4 659.7 L689.0 655.1 L692.4 650.6 L697.8 646.9 M668.7 630.4 L674.3 631.3 L678.6 634.7 L684.8 635.5 L690.3 638.0 L695.1 639.1 M713.3 670.9 L710.7 666.4 L708.9 661.5 L708.0 656.5 L706.1 650.7 M741.1 659.1 L737.4 654.7 L731.2 650.3 L727.6 647.2 L722.8 642.5 M692.3 608.5 L699.5 610.0 M699.5 610.0 L703.1 618.2 M734.9 621.5 L726.5 626.2 M738.1 804.1 L733.9 801.3 L727.3 799.6 L723.0 797.4 M723.4 769.5 L721.0 770.9 M723.4 769.5 L728.1 772.0 L732.5 772.8 L737.6 776.3 L742.5 777.7 L746.0 779.3 L751.1 781.3 M751.1 781.3 L750.9 786.7 L752.6 792.5 L752.4 797.2 M721.0 770.9 L721.2 775.9 L722.6 781.9 L722.3 787.1 L721.8 792.6 L723.0 797.4 M723.0 797.4 L716.9 798.1 L714.8 798.9 M637.0 473.5 L633.9 473.6 M611.4 452.9 L611.5 454.8 M633.9 473.6 L629.4 469.1 L625.8 466.3 L620.7 462.1 L615.4 459.0 L611.5 454.8 M589.1 445.4 L596.0 442.1 M589.1 445.4 L583.3 442.8 L579.7 441.2 L573.8 438.3 L568.6 437.3 L564.1 434.5 M596.0 442.1 L592.4 438.1 L590.3 435.1 L585.9 430.1 L582.3 426.2 L579.8 423.0 M579.8 423.0 L573.7 426.1 L569.2 428.0 L563.6 430.5 M564.1 434.5 L563.3 432.1 M563.3 432.1 L563.6 430.5 M561.3 455.7 L566.3 458.9 L570.3 462.3 L576.1 466.1 M560.2 452.0 L560.8 446.1 L563.2 441.0 L564.1 434.5 M576.1 466.1 L579.7 461.1 L582.6 456.0 L586.6 451.3 L589.1 445.4 M596.5 442.1 L596.0 442.1 M589.7 404.7 L586.6 409.1 L585.2 413.5 L583.2 419.0 L579.8 423.0 M557.4 412.5 L558.7 419.2 L561.5 423.6 L563.6 430.5 M531.6 435.7 L537.2 434.7 L542.8 434.3 L548.1 434.0 L552.8 433.8 L558.8 432.8 L563.3 432.1 M592.1 574.6 L596.5 573.3 L601.9 570.4 L607.5 568.2 M592.1 574.6 L595.3 578.6 L599.3 583.6 L602.2 589.6 L605.0 594.6 L607.9 598.9 M607.5 568.2 L611.7 571.6 L615.3 576.6 L619.6 581.1 L624.3 585.2 L627.5 588.9 M627.5 588.9 L624.1 593.4 L619.2 595.2 L616.0 599.6 M607.9 598.9 L616.0 599.6 M591.2 574.4 L592.1 574.6 M616.4 557.5 L611.6 562.3 L607.5 568.2 M598.0 607.3 L602.9 602.2 L607.9 598.9 M631.4 587.5 L627.5 588.9 M641.5 576.5 L641.4 578.4 M626.4 623.6 L624.4 618.4 L621.8 613.8 L620.4 609.3 L618.3 603.9 L616.0 599.6 M508.3 276.5 L514.3 280.6 L519.8 285.5 M504.5 309.7 L508.7 311.5 M508.7 311.5 L513.7 306.7 L517.8 303.9 L522.5 299.5 M519.8 285.5 L522.0 292.8 L522.5 299.5 M533.6 258.0 L535.9 263.0 L538.6 267.8 L541.8 273.2 M519.8 285.5 L524.5 282.8 L529.3 281.3 L532.4 278.4 L536.5 274.8 L541.8 273.2 M561.0 270.0 L556.9 272.1 L551.2 272.8 L546.8 275.3 M541.8 273.2 L546.8 275.3 M535.6 384.4 L533.1 379.6 L528.8 377.1 L526.3 372.5 L523.2 368.2 M523.2 368.2 L516.8 369.7 L515.2 369.7 M553.1 377.4 L552.5 372.4 L552.5 366.2 L551.9 360.2 L552.6 354.0 M579.0 350.6 L572.9 346.3 M552.6 354.0 L557.2 352.6 L562.8 350.7 L567.7 348.1 L572.9 346.3 M528.2 348.3 L526.5 352.5 L525.2 359.0 L523.6 363.5 L523.2 368.2 M528.2 348.3 L533.1 348.0 L538.1 347.4 L543.9 347.0 M552.6 354.0 L548.1 351.4 L543.9 347.0 M599.0 327.6 L594.5 328.1 L588.4 326.1 L583.7 327.1 L579.4 325.8 L573.7 325.6 M572.9 346.3 L573.1 340.8 L573.8 335.3 L573.0 330.9 L573.7 325.6 M652.2 556.6 L657.4 554.2 L664.4 552.4 M637.1 525.0 L635.7 530.1 L633.2 534.3 M649.1 521.7 L655.8 523.3 M655.8 523.3 L656.9 528.0 L658.5 532.5 L660.4 538.7 L661.3 543.6 L663.6 547.4 L664.4 552.4 M677.6 582.0 L681.0 575.7 M681.0 575.7 L679.7 569.5 L677.5 564.2 L674.3 559.2 L672.6 553.8 M672.6 553.8 L664.4 552.4 M750.3 722.4 L752.1 727.4 L755.9 733.9 L757.9 738.0 L760.3 743.9 L762.3 749.0 M734.7 749.2 L740.0 751.1 L745.8 752.2 L750.3 754.4 L756.6 756.4 M762.3 749.0 L756.6 756.4 M723.4 769.5 L726.1 762.0 L727.2 756.1 M751.1 781.3 L754.8 775.4 L757.5 770.9 M756.6 756.4 L757.9 763.9 L757.5 770.9 M707.1 599.6 L704.3 594.4 L701.9 589.7 L697.6 586.0 L694.7 580.3 L692.6 576.1 M707.1 599.6 L712.5 596.8 L717.0 593.5 L723.5 591.6 L728.5 588.6 M723.4 577.8 L718.2 576.6 L713.1 576.8 L708.3 575.9 L704.0 574.4 L698.1 573.2 M723.4 577.8 L726.4 583.5 L728.6 588.1 M692.6 576.1 L698.1 573.2 M728.5 588.6 L728.6 588.1 M681.0 575.7 L686.6 575.3 L692.6 576.1 M699.5 610.0 L703.2 604.4 L707.1 599.6 M732.7 598.1 L730.8 592.9 L728.5 588.6 M723.6 559.0 L723.1 565.6 L722.8 572.1 L723.4 577.8 M707.1 547.8 L712.7 548.4 M707.1 547.8 L705.5 553.3 L703.6 557.8 L701.1 563.6 L699.7 568.6 L698.1 573.2 M750.0 579.4 L744.9 581.0 L739.9 584.4 L733.4 586.7 L728.6 588.1 M798.5 780.5 L796.6 786.1 L793.4 792.4 M798.5 780.5 L794.7 777.3 L788.9 773.1 L785.0 768.3 M785.0 768.3 L776.3 772.2 M776.3 772.2 L777.5 777.7 L777.1 784.2 L777.9 788.6 L779.4 794.2 L779.6 800.7 M779.6 800.7 L783.6 798.2 L789.5 795.9 L793.4 792.4 M806.0 801.3 L801.7 798.1 L797.0 794.8 L793.4 792.4 M806.0 777.5 L798.5 780.5 M776.4 804.0 L779.6 800.7 M757.5 770.9 L764.3 771.3 L769.7 772.7 L776.3 772.2 M705.9 773.4 L708.5 771.5 M708.5 771.5 L706.1 765.7 L705.0 760.8 L702.3 756.4 L699.7 750.2 M699.7 750.2 L694.2 749.6 L689.0 750.5 L682.9 749.7 L680.5 749.7 M721.0 770.9 L714.2 771.9 L708.5 771.5 M707.6 742.7 L704.0 745.6 L699.7 750.2 M672.8 736.8 L674.7 742.8 M622.9 506.6 L615.6 504.3 M633.9 473.6 L629.4 477.1 M629.4 477.1 L627.5 481.6 L625.4 486.2 L622.7 489.9 L619.7 495.8 L617.9 499.8 L615.6 504.3 M602.4 521.0 L603.1 516.4 L604.5 510.0 L606.2 504.7 M606.2 504.7 L615.6 504.3 M523.0 344.4 L518.7 346.1 L512.6 348.2 L511.4 348.5 M523.0 344.4 L522.0 339.7 L520.2 335.0 L518.5 330.0 M518.5 330.0 L511.1 324.3 M511.1 324.3 L507.7 327.4 M528.2 348.3 L523.0 344.4 M508.7 311.5 L509.1 317.3 L511.1 324.3 M543.9 347.0 L544.8 340.0 L546.1 335.0 L547.2 328.5 M573.7 325.6 L572.1 323.0 M572.1 323.0 L567.1 324.4 L562.2 325.4 L557.7 325.6 L552.8 326.6 L547.2 328.5 M595.7 299.8 L589.9 301.6 L584.0 301.5 L577.7 304.0 L571.9 304.9 M572.1 323.0 L572.7 317.3 L572.5 310.6 L571.9 304.9 M571.1 273.7 L571.4 278.9 L572.1 284.3 L572.1 289.1 L571.2 293.9 L570.8 300.1 L571.4 304.4 M571.9 304.9 L571.4 304.4 M707.1 547.8 L706.4 547.4 M672.6 553.8 L676.3 550.0 L680.4 546.9 L684.1 544.1 M706.4 547.4 L700.1 546.9 L695.1 545.8 L689.3 544.2 L684.1 544.1 M786.2 759.8 L780.8 754.7 L776.4 750.8 L771.6 746.6 M786.2 759.8 L790.6 757.4 L795.0 754.1 L798.7 751.3 L803.6 748.4 M803.6 748.4 L803.6 741.6 L804.2 734.3 M778.8 736.6 L775.3 740.9 L771.6 746.6 M778.8 736.6 L784.9 735.9 L789.9 735.6 L796.1 733.7 L802.8 733.1 M802.8 733.1 L804.2 734.3 M762.3 749.0 L771.6 746.6 M785.0 768.3 L786.2 759.8 M806.0 752.0 L803.6 748.4 M806.0 733.9 L804.2 734.3 M771.4 722.1 L774.5 727.6 L777.2 731.9 L778.8 736.6 M794.5 705.2 L795.7 711.0 L797.9 716.4 L798.8 721.6 L801.7 727.9 L802.8 733.1 M599.3 477.9 L600.3 479.6 M599.3 477.9 L593.8 477.0 L588.9 475.5 L583.2 473.9 L577.7 471.8 M600.3 479.6 L600.7 485.2 L603.0 491.8 L602.9 496.6 L604.9 503.4 M604.9 503.4 L598.5 502.8 L593.9 502.6 L587.9 504.1 L581.0 503.0 L575.9 503.1 M575.9 503.1 L575.1 497.4 L573.9 491.5 L571.6 486.5 L570.8 481.3 M570.8 481.3 L575.1 475.9 L577.7 471.8 M611.5 454.8 L608.3 458.5 L607.0 463.3 L604.9 468.2 L601.3 472.5 L599.3 477.9 M629.4 477.1 L623.3 476.8 L616.9 478.4 L612.4 477.9 L606.1 478.7 L600.3 479.6 M576.1 466.1 L577.7 471.8 M606.2 504.7 L604.9 503.4 M572.7 506.7 L575.9 503.1 M554.5 483.6 L559.5 482.9 L565.1 482.4 L570.8 481.3 M548.2 297.9 L541.9 298.6 L535.3 300.9 L530.0 302.4 M548.2 297.9 L553.0 301.5 M553.0 301.5 L551.4 306.8 L549.1 312.0 L547.2 318.8 L544.3 324.3 M530.0 302.4 L530.8 308.6 L533.3 313.9 L535.0 320.6 M535.0 320.6 L544.3 324.3 M522.5 299.5 L530.0 302.4 M546.8 275.3 L547.7 281.0 L548.4 286.7 L548.6 292.2 L548.2 297.9 M571.4 304.4 L565.0 303.2 L558.3 301.9 L553.0 301.5 M547.2 328.5 L544.3 324.3 M518.5 330.0 L523.8 327.4 L530.1 324.2 L535.0 320.6 M677.7 511.8 L679.7 517.5 L680.8 521.8 L683.6 527.8 M677.7 511.8 L679.9 505.1 M683.6 527.8 L689.0 527.3 L693.8 525.7 L700.2 525.0 L705.3 524.7 M679.9 505.1 L684.6 503.4 L688.9 500.8 L694.7 500.0 M694.7 500.0 L697.3 504.8 L700.5 510.3 L704.1 516.1 L707.5 520.8 M707.5 520.8 L705.3 524.7 M655.8 523.3 L662.0 520.3 L667.4 517.3 L672.9 514.1 L677.7 511.8 M684.1 544.1 L683.9 539.6 L683.6 533.6 L683.6 527.8 M678.1 503.3 L679.9 505.1 M706.4 547.4 L705.7 542.2 L705.9 536.9 L705.5 530.8 L705.3 524.7 M698.5 496.3 L694.7 500.0 M727.7 520.6 L722.9 520.9 L717.8 520.6 L711.9 520.3 L707.5 520.8" fill="none" stroke="#5b6163" stroke-width="1" />
<path d="M354.4 6.0 L355.1 11.2 L355.1 16.2 L354.9 21.4 L354.2 27.2 L355.2 32.3 M325.1 11.3 L327.7 16.3 L329.0 22.3 L332.3 27.5 L334.1 31.7 L336.8 37.1 M325.1 11.3 L327.5 8.0 M355.2 32.3 L348.4 34.0 L343.0 35.2 L336.8 37.1 M327.5 8.0 L331.2 6.0 M794.5 6.0 L791.2 11.8 M791.2 11.8 L785.0 10.3 L780.9 6.6 L776.4 6.0 M754.0 16.3 L757.3 10.6 L760.4 6.0 L760.4 6.0 M754.0 16.3 L747.9 14.1 L742.8 13.2 L737.2 10.9 L731.7 9.4 M733.2 6.0 L731.7 9.4 M791.0 24.6 L790.4 17.7 L791.2 11.8 M791.0 24.6 L795.6 27.1 L801.2 29.2 L806.0 32.4 M674.2 6.0 L674.2 6.4 L674.4 12.7 M674.4 12.7 L679.4 15.6 L685.6 17.7 M698.0 6.0 L694.7 9.7 L689.6 14.0 L685.6 17.7 M406.7 238.7 L406.4 237.2 L406.3 231.4 L405.6 226.2 L404.3 220.9 M404.3 220.9 L399.1 221.4 L393.4 222.7 L389.2 222.7 L382.7 224.2 L378.8 224.4 L373.1 225.7 M378.9 238.7 L376.7 234.4 L375.7 231.0 L373.1 225.7 M791.0 24.6 L787.3 28.4 L782.6 31.3 M787.8 60.1 L787.3 55.1 L785.4 47.8 L784.8 43.0 L784.0 36.4 L782.6 31.3 M787.8 60.1 L790.5 63.9 M790.5 63.9 L795.5 62.8 L799.6 59.9 L804.9 59.5 L806.0 58.9 M326.9 6.0 L327.5 8.0 M336.7 37.4 L332.6 39.0 L327.4 40.2 L322.1 40.6 L317.0 41.6 L311.8 43.3 L306.7 44.5 L302.0 45.2 M325.1 11.3 L317.2 11.5 L310.6 11.8 M302.0 45.2 L298.2 41.4 L295.0 36.1 M295.0 36.1 L298.2 32.0 L301.2 26.9 L304.4 22.0 L307.8 16.9 L310.6 11.8 M310.6 11.8 L304.5 6.0 M293.3 6.0 L289.5 6.4 L286.0 6.0 M384.2 22.7 L381.7 17.0 L380.0 10.3 L378.7 6.0 M384.2 22.7 L388.7 21.6 L395.1 19.6 L399.4 17.7 L405.3 15.9 L410.3 13.4 L414.6 12.5 M413.5 6.0 L413.6 7.5 L414.6 12.5 M500.9 8.8 L506.8 7.3 L510.6 7.4 L516.2 6.0 M500.9 8.8 L498.8 6.0 M91.4 84.4 L91.2 89.6 L90.0 96.5 L88.6 102.3 L88.0 105.0 M91.4 84.4 L85.1 83.5 L78.4 82.5 L73.0 80.5 M73.0 80.5 L68.8 84.6 M63.9 105.0 L63.9 100.2 L65.9 96.0 L66.9 89.5 L68.8 84.6 M759.8 29.4 L767.9 34.0 M759.8 29.4 L755.2 30.8 L750.2 33.1 L745.8 35.6 L742.2 38.5 L737.7 40.9 L732.7 42.5 M767.9 34.0 L766.9 39.3 L765.6 45.7 L762.9 50.0 L761.6 55.9 M731.9 55.8 L732.6 49.5 L732.7 42.5 M731.9 55.8 L737.5 55.6 L743.9 56.5 L749.2 56.4 L754.8 57.9 L760.1 57.5 M760.1 57.5 L761.6 55.9 M754.0 16.3 L756.9 22.9 L759.8 29.4 M782.6 31.3 L775.0 33.1 L767.9 34.0 M787.8 60.1 L781.9 59.6 L777.8 57.6 L772.9 56.9 L766.4 56.8 L761.6 55.9 M765.1 81.7 L771.0 81.5 L774.5 81.5 L779.8 82.7 L785.3 82.4 M765.1 81.7 L764.7 75.9 L762.5 69.3 L761.0 62.8 L760.1 57.5 M785.3 82.4 L786.4 75.4 L789.0 69.7 L790.5 63.9 M731.1 9.7 L727.1 8.2 L721.3 6.7 L719.4 6.0 M731.1 9.7 L729.4 14.6 L729.5 21.3 L727.4 27.9 L727.3 32.9 M716.2 6.0 L713.6 9.9 L710.6 14.8 L708.5 19.6 L706.3 25.0 L703.1 29.9 M727.3 32.9 L721.5 33.4 L715.9 32.8 L710.3 32.4 L704.6 31.5 M704.6 31.5 L703.1 29.9 M731.7 9.4 L731.1 9.7 M732.7 42.5 L729.1 38.2 L727.3 32.9 M685.6 17.7 L689.4 24.9 M689.4 24.9 L696.7 26.5 L703.1 29.9 M731.9 55.8 L726.2 63.6 M726.2 63.6 L720.5 63.2 L714.2 64.2 L709.2 63.0 L702.6 63.2 M702.6 63.2 L703.8 57.9 L703.6 53.3 L703.5 48.0 L704.4 41.8 L704.2 37.5 L704.6 31.5 M390.9 199.1 L387.2 204.0 L384.6 207.9 L381.5 212.3 L377.2 216.5 L373.7 220.8 L370.9 224.2 M390.9 199.1 L389.3 194.4 L386.5 188.9 M386.5 188.9 L381.0 189.6 L376.4 189.8 L370.8 188.3 L364.8 189.0 M367.6 223.2 L370.9 224.2 M367.6 223.2 L365.4 216.9 L363.9 212.2 L362.8 207.8 L360.6 201.6 L358.7 196.4 M358.7 196.4 L364.8 189.0 M284.3 97.0 L281.2 103.0 L280.2 109.6 L277.1 115.2 M284.3 97.0 L281.0 92.4 L278.1 88.1 L275.8 84.3 M277.1 115.2 L272.4 115.2 L265.9 114.3 L260.8 112.7 M275.8 84.3 L270.1 87.0 L264.3 89.3 L258.0 91.7 L253.0 93.2 M260.8 112.7 L259.6 107.7 L256.9 102.7 L255.4 98.9 L253.0 93.2 M247.5 68.0 L245.6 73.8 L244.3 77.8 L241.8 83.6 M247.5 68.0 L253.6 69.2 L258.7 69.0 L264.7 68.9 L271.0 69.9 L276.4 70.1 M275.8 84.3 L275.8 76.4 L276.4 70.1 M253.0 93.2 L246.9 89.1 L241.8 83.6 M288.6 144.6 L283.7 141.2 L280.3 137.1 M288.6 144.6 L285.8 149.4 L284.0 153.7 L281.9 159.5 L280.7 163.7 M280.3 137.1 L274.2 138.8 L270.1 142.6 L264.1 144.6 L258.1 147.5 M258.1 147.5 L257.5 153.6 L258.6 159.1 L257.5 164.3 M280.7 163.7 L274.2 163.9 L268.8 163.6 L263.2 163.3 L257.5 164.3 M311.5 238.5 L311.7 237.0 L311.6 232.2 L312.7 226.3 M280.2 238.4 L280.6 234.7 M312.7 226.3 L307.7 224.1 L304.0 220.2 L298.8 218.0 M280.6 234.7 L285.3 229.7 L288.8 226.9 L294.6 223.0 L298.8 218.0 M150.1 18.9 L151.7 24.4 L151.7 29.9 L153.6 34.9 L153.9 39.3 M150.1 18.9 L145.0 17.4 L139.0 15.1 L132.7 12.3 M153.9 39.3 L149.4 43.1 L144.6 44.4 L139.7 48.2 M132.7 12.3 L126.8 15.3 L119.2 18.2 M119.2 18.2 L121.2 25.6 M139.7 48.2 L136.8 44.2 L132.8 39.8 L128.5 35.2 L125.4 29.4 L121.2 25.6 M113.3 16.3 L119.2 18.2 M113.3 16.3 L110.0 19.9 L104.5 24.5 L102.0 28.3 L97.5 31.9 M97.5 31.9 L97.7 38.5 L97.2 44.1 L97.6 51.4 M97.6 51.4 L105.1 50.7 L112.1 51.1 M112.1 51.1 L114.4 46.1 L115.6 41.5 L116.7 36.5 L119.6 31.2 L121.2 25.6 M139.7 48.2 L138.0 53.1 L134.6 57.8 M112.1 51.1 L116.8 53.2 L122.3 56.0 L127.6 59.0 M127.6 59.0 L134.6 57.8 M96.6 80.9 L104.5 82.8 L110.9 83.7 M96.6 80.9 L95.7 75.8 L96.7 70.8 L95.5 63.8 L95.5 60.1 L94.9 53.9 M94.9 53.9 L97.6 51.4 M127.6 59.0 L123.8 64.1 L121.4 69.0 L118.2 73.6 L114.6 78.6 L110.9 83.7 M96.6 80.9 L91.4 84.4 M111.7 105.0 L111.0 99.9 L111.2 94.6 L111.5 90.2 L111.5 84.3 M110.9 83.7 L111.5 84.3 M805.6 225.0 L804.9 224.2 L800.9 218.9 L797.6 214.3 M797.6 214.3 L793.1 216.5 L787.5 220.4 L783.4 223.6 M783.4 223.6 L784.2 225.0 M353.1 231.8 L353.1 237.3 L353.3 238.6 M353.1 231.8 L346.9 230.5 L342.0 229.9 M342.0 229.9 L340.1 233.7 L337.5 238.5 M373.1 225.7 L370.9 224.2 M367.6 223.2 L362.0 226.9 L358.7 228.5 L353.1 231.8 M358.7 196.4 L352.7 195.3 L348.6 196.0 L343.5 194.9 L337.4 195.7 L332.7 195.2 M332.7 195.2 L330.8 201.9 L330.2 206.9 L328.3 213.5 L327.5 219.0 M327.5 219.0 L332.1 223.2 L338.0 225.6 L342.0 229.9 M327.5 219.0 L321.7 221.8 L316.9 224.3 L312.7 226.3 M273.2 42.7 L277.8 39.3 L282.1 36.7 L286.9 34.9 M273.2 42.7 L267.6 41.6 L261.8 40.4 L256.3 40.5 L250.8 39.6 M286.9 34.9 L285.4 29.6 L281.4 25.5 L280.6 19.9 L278.4 15.5 L274.5 11.8 L272.9 6.5 M250.8 39.6 L248.9 33.7 M248.9 33.7 L249.9 28.7 L250.8 23.6 L252.0 18.0 L254.2 12.0 M254.2 12.0 L260.8 10.3 L266.3 8.9 L272.9 6.5 M277.4 69.1 L276.4 63.7 L276.6 59.4 L275.5 54.0 L274.3 47.7 L273.2 42.7 M277.4 69.1 L276.4 70.1 M243.8 54.4 L246.2 61.0 L247.5 68.0 M243.8 54.4 L246.7 50.1 L248.5 45.0 L250.8 39.6 M295.0 36.1 L286.9 34.9 M273.3 6.0 L272.9 6.5 M233.1 6.0 L232.8 6.1 L227.1 6.8 L220.9 8.2 M247.7 6.0 L248.8 7.1 L254.2 12.0 M226.6 27.5 L231.6 28.6 L237.0 30.8 L242.9 32.9 L248.9 33.7 M226.6 27.5 L224.8 22.7 L223.5 18.2 L221.5 12.7 L220.9 8.2 M162.3 70.0 L163.3 75.5 L164.8 80.9 L165.6 88.4 L165.8 93.6 M162.3 70.0 L156.6 69.8 L152.1 68.8 L145.5 67.8 L141.0 66.9 M141.0 66.9 L141.0 73.8 L140.0 78.8 L139.5 85.0 M139.5 85.0 L144.9 87.5 L149.8 87.7 L155.2 89.6 L160.8 92.0 L165.7 93.7 M134.6 57.8 L138.4 62.0 L141.0 66.9 M131.8 91.6 L135.8 87.6 L139.5 85.0 M131.8 91.6 L127.5 90.4 L122.2 87.1 L116.5 86.4 L111.5 84.3 M416.4 43.9 L417.8 49.9 L419.6 56.0 L422.2 61.1 M416.4 43.9 L418.7 40.0 M418.7 40.0 L423.9 38.2 L428.4 36.2 L433.9 35.2 L439.2 33.8 M422.2 61.1 L428.4 63.9 L433.1 66.5 M433.1 66.5 L439.0 61.4 L444.6 57.1 M444.6 57.1 L442.9 50.5 L441.0 44.7 L440.2 40.4 L439.2 33.8 M440.5 6.0 L440.0 6.5 L435.1 10.5 L431.2 13.3 M449.4 6.0 L452.1 8.8 L456.7 11.6 L460.6 13.7 L465.0 16.6 M431.2 13.3 L433.9 18.1 L436.0 21.8 L439.4 26.2 L441.4 31.1 M441.4 31.1 L446.6 29.6 L453.1 29.6 L459.5 28.0 L465.4 26.4 M465.0 16.6 L465.4 26.4 M414.6 12.5 L416.0 13.6 M416.0 13.6 L420.4 13.4 L426.8 14.3 L431.2 13.3 M472.9 6.0 L472.2 7.2 L468.8 12.9 L465.0 16.6 M418.7 40.0 L417.9 34.7 L417.5 28.7 L417.3 23.8 L416.9 18.5 L416.0 13.6 M439.2 33.8 L441.4 31.1 M444.6 57.1 L450.3 56.5 L455.8 54.2 L461.3 54.0 L466.6 52.8 M466.6 52.8 L469.2 46.9 L470.1 41.2 L472.3 36.3 M472.3 36.3 L469.2 30.6 L465.4 26.4 M501.1 24.6 L500.7 19.5 L501.8 13.8 L500.9 8.8 M501.1 24.6 L496.6 28.0 L491.2 31.7 L485.1 36.0 M485.1 36.0 L479.4 36.5 L472.3 36.3 M603.0 130.4 L597.7 135.6 L593.6 141.0 M603.0 130.4 L607.4 133.2 L611.9 137.4 L615.4 140.0 L619.7 144.1 L625.2 148.0 L628.6 151.0 M593.6 141.0 L597.3 145.3 L600.4 150.1 L602.5 154.1 L605.9 157.7 L609.4 162.0 L613.0 166.2 M628.6 151.0 L627.1 157.3 L625.4 164.8 M625.4 164.8 L618.4 164.9 L613.0 166.2 M634.4 144.4 L628.6 151.0 M634.4 144.4 L633.0 139.3 L630.2 135.5 L629.5 130.8 L626.1 124.7 L624.8 120.6 M624.8 120.6 L619.7 121.2 L614.0 120.8 L609.2 122.1 L603.1 122.6 M603.1 122.6 L603.0 130.4 M573.3 148.9 L579.2 147.4 L583.6 145.0 L588.8 142.9 L593.6 141.0 M573.3 148.9 L574.5 153.9 L574.0 161.1 L574.3 166.6 M596.9 173.4 L591.5 171.0 L585.8 169.8 L579.7 168.9 L574.3 166.6 M596.9 173.4 L602.9 171.7 L607.8 169.1 L613.0 166.2 M601.3 119.2 L603.1 122.6 M601.3 119.2 L596.1 120.2 L591.0 119.3 L586.1 119.5 L581.4 120.2 L575.4 120.9 M573.3 148.9 L571.3 146.4 M571.3 146.4 L571.7 141.6 L572.3 136.4 L573.5 130.6 L575.3 126.2 L575.4 120.9 M578.2 94.9 L575.7 90.9 L572.9 86.1 M578.2 94.9 L575.7 100.0 L574.9 105.6 L573.8 110.0 L571.7 115.1 M572.9 86.1 L566.8 85.4 L561.9 83.9 L555.9 83.8 M549.6 87.6 L550.2 93.7 L552.8 98.8 L553.3 104.1 L555.2 109.1 L555.7 114.4 M549.6 87.6 L555.9 83.8 M555.7 114.4 L560.8 114.3 L565.5 114.0 L571.7 115.1 M602.1 102.4 L596.9 101.1 L589.8 98.6 L584.5 95.9 L578.2 94.9 M602.1 102.4 L602.6 107.2 L601.5 114.1 L601.3 119.2 M575.4 120.9 L571.7 115.1 M35.7 78.7 L41.7 86.4 M35.7 78.7 L31.6 81.3 L27.3 83.3 L21.6 86.2 L17.3 89.1 L12.9 90.7 L8.5 93.4 M41.7 86.4 L43.1 91.9 L45.1 97.3 L46.5 103.4 M46.5 103.4 L43.8 105.0 M8.5 93.4 L7.4 98.4 L6.7 105.0 M36.8 72.6 L35.7 78.7 M36.8 72.6 L42.3 70.8 L47.8 68.4 L53.0 65.0 L57.5 63.4 L62.6 60.4 M62.6 60.4 L64.7 64.8 L67.1 71.2 L70.1 74.7 L73.0 80.5 M68.8 84.6 L63.1 84.4 L57.1 85.6 L52.5 86.1 L46.7 85.7 L41.7 86.4 M30.0 61.9 L24.3 58.5 L18.3 56.8 M30.0 61.9 L33.2 66.4 L36.8 72.6 M6.0 89.7 L8.5 93.4 M6.0 62.7 L13.2 59.3 L18.3 56.8 M49.0 105.0 L46.5 103.4 M198.8 225.0 L193.4 230.3 M198.8 225.0 L199.7 220.7 L199.8 215.6 L199.4 210.6 L199.3 205.1 L199.4 199.4 L199.2 194.6 M193.4 230.3 L187.5 228.2 L182.9 226.2 L177.6 223.9 M199.2 194.6 L192.2 192.0 M192.2 192.0 L188.4 195.4 L184.4 198.2 L179.5 200.9 L175.4 204.3 M175.4 204.3 L176.6 210.3 L177.2 216.9 L177.6 223.9 M726.2 63.6 L728.9 68.3 L729.8 73.0 L732.7 78.6 L734.2 83.5 M734.2 83.5 L728.2 84.5 L723.2 86.6 L717.4 88.3 L710.8 89.2 L705.7 90.7 M705.7 90.7 L702.7 84.9 L700.7 79.5 M702.6 63.2 L700.4 64.1 M700.4 64.1 L701.0 68.6 L701.3 73.9 L700.7 79.5 M634.4 144.4 L640.1 142.0 L645.0 139.4 M624.8 120.6 L629.3 114.7 L632.1 109.6 M645.0 139.4 L649.2 135.3 L652.9 130.8 M652.9 130.8 L652.8 121.0 M652.8 121.0 L647.2 119.0 L642.9 115.3 L637.4 112.2 L632.1 109.6 M591.2 225.0 L589.6 224.6 M589.6 224.6 L586.1 221.0 L581.4 216.5 L577.7 213.0 L573.1 208.0 M573.1 208.0 L570.3 212.2 L565.9 216.6 L562.6 221.0 L559.8 225.0 M568.8 203.5 L568.3 197.0 L569.0 191.6 L567.5 185.4 L568.1 179.6 L567.5 173.9 M568.8 203.5 L563.5 204.1 L557.9 205.1 L551.0 205.1 L545.4 205.9 M541.3 197.5 L545.4 205.9 M541.3 197.5 L544.1 192.6 L544.3 185.4 L546.5 180.3 L549.1 174.4 M567.5 173.9 L561.8 174.6 L557.2 173.8 L552.4 173.7 M552.4 173.7 L549.1 174.4 M596.9 173.4 L597.9 178.9 L598.4 185.2 L598.4 190.9 M574.3 166.6 L567.5 173.9 M598.4 190.9 L594.8 194.4 L589.6 197.2 L586.0 199.6 L581.9 202.6 L578.0 204.7 L573.0 207.8 M573.0 207.8 L568.8 203.5 M532.8 221.0 L537.8 216.2 L542.0 210.2 L545.4 205.9 M532.8 221.0 L531.8 225.0 M532.8 221.0 L529.6 215.8 L526.3 210.3 L523.4 205.2 L519.1 200.3 M519.1 200.3 L522.5 195.2 L526.7 188.9 M526.7 188.9 L532.3 191.1 L536.0 194.2 L541.3 197.5 M528.8 170.5 L534.5 171.8 L539.1 172.6 L544.1 174.1 L549.1 174.4 M528.8 170.5 L523.9 173.9 M523.9 173.9 L524.1 179.4 L525.0 184.7 L526.7 188.9 M598.4 190.9 L603.6 195.9 L607.8 199.4 M607.8 199.4 L606.0 205.1 L604.8 209.9 L601.8 214.3 L601.3 220.3 L599.3 225.0 M462.8 142.1 L460.6 148.3 L458.3 153.1 L456.1 158.7 L452.6 164.4 M462.8 142.1 L458.6 139.3 L455.1 135.6 L450.4 133.6 L446.4 129.8 L441.9 127.3 M452.6 164.4 L445.7 165.6 M445.7 165.6 L442.3 161.8 L436.6 158.5 L433.6 153.5 L428.7 150.1 L424.9 146.9 M441.9 127.3 L439.1 130.6 L434.7 134.7 L431.7 138.9 L427.8 142.8 L424.9 146.9 M390.9 199.1 L394.7 202.4 L400.2 205.9 L403.8 208.0 M403.8 208.0 L404.8 214.6 L404.4 220.7 M458.5 170.4 L459.8 174.8 L461.5 179.9 L463.1 185.3 L464.2 189.1 L466.0 194.8 M458.5 170.4 L463.5 169.6 L468.7 168.4 L473.8 168.7 L480.5 167.5 L485.2 167.3 L490.5 166.7 L495.6 165.5 M466.0 194.8 L470.6 193.3 L474.8 192.1 L480.0 189.1 L484.4 188.1 L489.0 186.1 L494.3 184.2 M494.3 184.2 L496.6 177.6 L498.6 172.0 M495.6 165.5 L498.6 172.0 M467.5 140.8 L471.5 144.7 L476.4 147.7 L481.3 150.5 L485.8 153.7 L490.5 157.0 L495.0 159.2 M467.5 140.8 L462.8 142.1 M495.0 159.2 L495.6 165.5 M452.6 164.4 L458.5 170.4 M501.2 200.4 L498.3 194.9 L497.4 188.9 L494.3 184.2 M501.2 200.4 L506.8 200.3 L514.1 200.7 L519.1 200.3 M523.9 173.9 L519.1 173.0 L513.6 172.3 L508.2 172.1 L503.8 172.4 L498.6 172.0 M277.4 69.1 L282.7 68.4 L287.4 68.1 L291.9 66.7 L298.0 66.8 L302.5 66.6 M284.3 97.0 L290.1 95.4 L294.0 93.5 L300.8 91.6 L305.1 89.5 M305.1 89.4 L303.8 84.1 L303.8 77.4 L303.9 72.8 L302.5 66.6 M302.0 45.2 L302.4 49.5 L302.0 56.2 L302.2 59.7 L303.3 65.4 M303.3 65.4 L302.5 66.6 M420.1 93.1 L425.4 91.3 L428.9 88.2 L432.8 84.9 L438.1 82.6 M420.1 93.1 L418.5 99.9 L416.1 105.9 L414.4 112.1 M435.7 118.1 L430.5 116.2 L424.4 115.1 L419.3 113.5 L414.4 112.1 M435.7 118.1 L435.7 111.6 L437.2 106.3 L438.2 100.3 L439.0 95.5 L439.3 90.0 L439.9 83.9 M439.9 83.9 L438.1 82.6 M422.2 61.1 L418.1 63.4 L413.1 66.7 M433.1 66.5 L435.4 71.0 L437.0 76.9 L438.1 82.6 M413.1 66.7 L410.5 70.9 L407.2 75.9 L404.8 81.9 M404.8 81.9 L410.5 85.3 L415.1 89.1 L420.1 93.1 M255.7 116.7 L250.7 117.3 L244.1 115.3 L238.6 116.6 L232.8 115.8 L227.0 115.0 M255.7 116.7 L254.8 121.4 L252.2 127.4 L251.2 132.9 L249.8 138.9 M227.0 115.0 L228.2 119.8 L228.4 124.6 L230.3 130.3 L229.9 135.1 L231.6 139.6 M249.8 138.9 L243.1 139.9 L237.3 140.3 L231.6 139.6 M277.1 115.2 L278.0 116.4 M278.0 116.4 L279.1 121.6 L278.9 127.4 L280.5 131.6 L280.3 137.1 M258.1 147.5 L254.4 142.7 L249.8 138.9 M260.8 112.7 L255.7 116.7 M203.9 112.7 L209.5 112.9 L213.7 112.1 L218.6 112.0 L224.5 112.5 M203.9 112.7 L201.5 107.4 L200.8 102.4 L199.6 97.5 L197.8 92.4 L196.3 87.2 M224.5 112.5 L226.1 106.6 L229.0 102.2 L231.5 96.5 L234.0 92.2 L236.0 86.0 M196.3 87.2 L202.3 85.4 L207.4 84.4 L213.8 82.6 L220.1 80.4 M236.0 86.0 L230.4 84.2 L225.1 83.1 L220.1 80.4 M241.8 83.6 L236.0 86.0 M227.0 115.0 L224.5 112.5 M226.3 145.7 L231.6 139.6 M226.3 145.7 L227.6 150.8 L230.1 156.9 L231.7 162.7 L234.3 167.7 M257.5 164.3 L252.4 171.4 M234.3 167.7 L239.8 168.1 L246.2 170.7 L252.4 171.4 M329.7 165.0 L330.9 170.3 L331.3 174.8 L330.9 179.1 L331.9 184.7 L332.9 189.1 L332.6 195.0 M329.7 165.0 L324.4 164.9 L319.8 164.5 L314.8 164.2 L309.5 165.0 M332.6 195.0 L327.7 194.1 L321.6 194.4 L314.9 194.3 L309.8 192.8 L304.2 193.2 M304.2 193.2 L302.9 187.2 L300.7 181.4 L299.6 175.4 M309.5 165.0 L304.0 170.2 L299.6 175.4 M293.3 205.8 L295.4 211.3 L298.8 218.0 M293.3 205.8 L296.6 201.3 L300.8 197.9 L304.2 193.2 M288.6 144.6 L297.3 145.2 M297.3 145.2 L300.9 149.8 L304.0 154.3 L307.0 160.3 L309.5 165.0 M280.7 163.7 L284.4 168.9 L287.5 173.9 M287.5 173.9 L293.0 174.0 L299.6 175.4 M287.5 173.9 L284.6 177.4 L280.9 181.0 L278.5 185.8 L274.5 190.7 L271.5 193.9 M252.4 171.4 L253.7 177.6 L256.2 183.5 L257.2 188.5 M271.5 193.9 L267.2 191.6 L261.5 190.5 L257.2 188.5 M293.3 205.8 L288.9 204.5 L283.0 202.9 L277.6 201.7 M271.5 193.9 L277.6 201.7 M280.6 234.7 L277.4 229.2 L273.9 223.8 L269.3 218.5 M277.6 201.7 L275.7 207.4 L272.9 213.8 L269.3 218.5 M194.6 85.9 L196.3 87.2 M194.6 85.9 L188.4 86.6 L183.6 88.2 L177.4 90.1 L171.1 91.4 L165.8 93.6 M165.7 93.7 L163.9 102.5 M203.9 112.7 L199.6 118.6 L195.4 124.2 M163.9 102.5 L168.4 106.3 L173.0 108.1 L177.8 111.1 L182.4 114.5 L185.9 117.8 L191.0 120.6 L195.4 124.2 M131.8 91.6 L133.3 97.0 L132.9 102.2 L133.2 105.0 M163.9 102.5 L159.5 108.0 L155.7 111.3 L154.7 112.9 M704.3 110.9 L710.8 115.6 M704.3 110.9 L704.5 105.5 L705.1 100.7 L705.4 95.6 L705.7 90.7 M734.2 83.5 L735.5 85.4 M710.8 115.6 L716.1 111.6 L720.7 108.8 L725.8 104.9 L730.8 102.1 M735.5 85.4 L734.7 91.0 L733.0 96.4 L730.8 102.1 M765.1 81.7 L759.0 86.2 M735.5 85.4 L740.6 84.8 L747.6 86.0 L753.5 85.1 L759.0 86.2 M710.8 115.6 L710.8 120.8 L712.7 126.7 L712.4 130.9 L713.8 136.3 M713.8 136.3 L718.1 137.3 L724.2 136.8 L729.7 136.9 L733.9 138.3 M733.9 138.3 L735.5 133.0 L736.8 128.4 L739.1 122.1 L740.5 117.7 L741.9 111.9 M730.8 102.1 L736.2 106.7 L741.9 111.9 M737.8 140.0 L743.0 141.4 L747.2 141.6 L752.9 142.0 M737.8 140.0 L733.9 138.3 M741.9 111.9 L746.9 112.4 L753.8 114.2 L758.9 115.8 M752.9 142.0 L753.7 136.5 L755.9 131.8 L756.3 126.0 L757.6 120.2 L758.9 115.8 M759.0 86.2 L760.2 91.2 L760.4 96.8 L760.2 102.6 L761.7 107.1 L762.3 113.2 M762.3 113.2 L758.9 115.8 M791.6 149.5 L790.3 155.8 L788.1 161.0 L786.2 167.5 M791.6 149.5 L797.9 150.0 L803.3 150.5 L806.0 150.1 M806.0 170.0 L804.6 171.0 L800.3 174.3 L796.0 177.5 L792.9 180.8 M792.9 180.8 L788.7 174.5 L786.2 167.5 M758.4 164.5 L758.1 158.4 L757.7 153.1 L757.2 146.3 M758.4 164.5 L763.3 165.9 L769.3 165.7 L775.4 167.1 L780.8 166.8 L786.2 167.5 M757.2 146.3 L762.2 144.7 L768.5 142.6 L774.1 141.8 L778.7 141.1 L784.5 138.9 M784.5 138.9 L788.0 143.4 L791.6 149.5 M806.0 118.9 L800.7 119.1 L794.8 118.9 L789.6 117.4 M790.2 88.2 L795.8 86.8 L803.4 86.5 L806.0 86.5 M790.2 88.2 L789.6 93.5 L790.4 99.8 L790.2 105.7 L789.2 112.0 L789.2 116.9 M789.2 116.9 L789.6 117.4 M784.5 138.9 L785.1 133.3 L786.9 127.4 L789.0 123.6 L789.6 117.4 M785.3 82.4 L790.2 88.2 M762.3 113.2 L767.7 113.8 L772.5 114.8 L777.8 114.8 L784.6 116.5 L789.2 116.9 M752.9 142.0 L757.2 146.3 M793.1 186.9 L797.2 190.9 L801.0 193.0 L806.0 197.2 M793.1 186.9 L792.9 180.8 M806.0 197.2 L803.6 203.0 L800.0 207.8 L797.6 214.3 M220.9 8.2 L217.0 6.0 M150.1 18.9 L154.3 15.8 L157.9 13.0 L161.2 8.9 L165.5 6.0 M134.4 6.0 L134.5 7.7 L132.7 12.3 M243.8 54.4 L236.9 53.7 L231.6 54.5 L226.1 54.5 L219.3 53.4 M220.1 80.4 L219.8 74.9 L217.8 69.3 L217.6 63.3 L216.9 57.2 M219.3 53.4 L216.9 57.2 M226.6 27.5 L221.1 32.3 L216.0 35.1 L211.8 39.2 M219.3 53.4 L217.1 49.0 L214.3 43.2 L211.8 39.2 M194.6 85.9 L192.8 80.6 L192.6 73.8 L191.7 67.5 M216.9 57.2 L211.8 59.3 L206.6 61.6 L202.6 62.6 L197.0 66.1 L191.7 67.5 M485.1 36.0 L488.5 40.4 L492.2 43.9 L495.6 47.4 L498.8 51.2 L502.4 56.4 L505.5 60.0 M505.5 60.0 L499.9 62.8 L492.9 67.0 M466.6 52.8 L468.6 57.3 L470.6 62.8 M470.6 62.8 L475.5 64.5 L481.7 64.8 L488.0 65.8 L492.9 67.0 M518.0 61.6 L518.8 67.4 L521.1 72.7 L521.6 79.1 L523.4 83.9 L524.4 89.3 M518.0 61.6 L511.8 61.0 L505.5 60.0 M524.4 89.3 L521.0 94.2 M521.0 94.2 L515.2 93.7 L509.8 92.8 L504.4 93.9 L499.0 93.0 L495.3 93.1 L489.2 92.4 M492.9 67.0 L491.5 71.3 L490.9 76.7 L490.7 82.4 L490.0 87.3 L489.2 92.4 M113.3 16.3 L110.1 11.4 L105.9 6.2 M97.5 31.9 L91.9 29.0 L86.8 28.5 L82.1 25.7 M94.9 53.9 L89.7 53.5 L83.4 52.1 L77.1 51.1 L71.6 50.4 M82.1 25.7 L80.3 31.2 L77.4 36.2 L76.6 40.6 L72.8 45.5 L71.6 50.4 M105.9 6.2 L105.0 6.0 M95.0 6.0 L92.7 7.2 L87.7 10.6 L82.5 14.0 L77.0 17.2 M82.1 25.7 L77.0 17.2 M62.6 60.4 L66.1 51.8 M66.1 51.8 L71.6 50.4 M18.3 56.8 L17.2 51.0 L15.4 45.5 L14.8 41.4 L13.0 35.5 M13.0 35.5 L6.0 29.0 M30.0 61.9 L32.7 56.1 L35.2 51.8 L36.9 45.5 L40.1 39.8 L42.2 35.0 M13.0 35.5 L18.7 35.7 L24.8 35.9 L31.1 35.5 L35.7 35.1 L42.2 35.0 M704.3 110.9 L698.5 110.5 L693.5 108.6 L689.3 108.0 L683.5 107.4 M683.5 107.4 L682.3 112.8 L681.1 117.5 L681.1 124.5 L679.8 129.0 L678.7 134.8 L677.9 140.0 M713.8 136.3 L713.0 137.3 M677.9 140.0 L678.6 140.9 M713.0 137.3 L706.4 138.6 L701.3 138.2 L696.6 138.6 L689.2 139.6 L685.1 139.6 L678.6 140.9 M683.5 107.4 L679.5 104.1 M677.9 140.0 L673.2 138.9 L667.2 136.2 L663.7 135.1 L657.3 133.2 L652.9 130.8 M652.8 121.0 L656.7 116.8 L660.1 111.0 M660.1 111.0 L664.9 109.3 L669.7 107.7 L674.6 106.5 L679.5 104.1 M700.7 79.5 L696.3 84.0 L693.1 87.0 L689.4 90.1 L686.7 94.2 L682.8 98.1 L679.3 102.2 M679.5 104.1 L679.3 102.2 M643.8 6.0 L648.0 7.2 M648.4 6.0 L648.0 7.2 M674.4 12.7 L669.9 14.0 L665.6 16.5 L659.9 18.2 L655.3 20.2 M655.3 20.2 L652.5 13.4 L648.0 7.2 M506.5 225.0 L501.9 224.1 M501.9 224.1 L501.4 225.0 M501.2 200.4 L500.9 204.9 L498.0 211.9 L497.5 216.4 M497.5 216.4 L501.9 224.1 M497.5 216.4 L491.4 215.8 L487.6 216.6 L481.8 216.1 L475.5 214.5 L470.9 215.0 M466.0 194.8 L465.0 196.7 M465.0 196.7 L466.4 202.9 L469.0 209.3 L470.9 215.0 M472.9 238.9 L471.4 237.2 L467.2 233.4 L464.2 228.9 M470.9 215.0 L468.2 220.3 L465.9 224.8 L464.2 228.9 M439.7 238.8 L441.9 233.7 M464.2 228.9 L458.7 229.2 L452.7 231.2 L446.6 233.3 L441.9 233.7 M404.4 220.7 L410.0 220.3 L414.7 219.5 L419.0 219.9 L424.3 219.2 L429.8 219.1 L435.1 219.7 M441.9 233.7 L439.7 228.2 L437.4 223.6 L435.1 219.7 M627.8 168.0 L627.7 174.8 L628.7 181.0 L627.4 186.5 L628.4 192.8 M627.8 168.0 L625.4 164.8 M607.8 199.4 L614.0 198.3 L619.7 196.2 L626.7 195.5 M628.4 192.8 L626.7 195.5 M767.7 197.9 L768.2 203.1 L766.9 208.1 L767.8 213.7 L767.8 218.3 M767.7 197.9 L767.0 197.3 M767.0 197.3 L760.3 196.9 L754.7 196.8 L747.6 197.0 L742.3 197.4 M763.9 222.0 L767.8 218.3 M763.9 222.0 L759.1 222.3 L753.1 223.4 L748.6 223.6 L743.3 224.5 L740.9 225.0 M742.3 197.4 L740.7 202.5 L740.1 206.9 L738.4 212.2 L737.4 218.6 L735.7 223.2 M737.1 225.0 L735.7 223.2 M793.1 186.9 L787.7 189.3 L782.5 191.0 L777.2 194.3 L773.4 196.0 L767.7 197.9 M783.4 223.6 L778.2 221.2 L773.6 219.9 L767.8 218.3 M758.4 164.5 L756.0 168.6 M756.0 168.6 L757.4 172.7 L760.2 177.6 L761.3 183.7 L763.0 186.8 L764.4 192.6 L767.0 197.3 M763.8 225.0 L763.9 222.0 M711.3 225.0 L711.5 224.9 L716.4 220.3 L720.3 215.4 M720.3 215.4 L725.0 217.7 L731.3 219.8 L735.7 223.2 M737.8 140.0 L737.2 146.1 L735.7 150.9 L734.6 156.3 L734.2 162.9 L733.0 167.8 M756.0 168.6 L748.4 171.3 L742.4 172.7 M733.0 167.8 L738.4 170.4 L742.4 172.7 M713.0 137.3 L712.2 143.7 L711.3 148.6 L712.0 154.1 L710.3 161.5 L710.3 166.6 M733.0 167.8 L727.5 167.4 L721.4 167.2 L716.2 166.0 L710.3 166.6 M742.3 197.4 L735.8 190.8 M742.4 172.7 L739.9 178.1 L738.6 184.3 L735.8 190.8 M404.8 81.9 L399.5 84.3 L393.8 85.5 L389.6 87.0 L383.7 88.8 M383.7 88.8 L384.7 94.2 L385.6 99.3 L386.0 104.3 L386.3 110.0 M414.4 112.1 L407.2 115.3 M407.2 115.3 L401.9 114.3 L396.1 112.7 L390.8 110.7 L386.3 110.0 M438.3 173.8 L439.8 179.8 L442.3 183.9 L443.2 190.0 L444.4 195.1 L446.3 199.5 M438.3 173.8 L432.2 176.0 L427.5 178.5 L422.7 179.8 L417.5 181.5 M417.5 181.5 L419.0 187.5 L419.3 193.5 M419.3 193.5 L422.9 197.4 L428.2 199.7 L431.5 202.3 L436.2 206.4 M446.3 199.5 L442.1 203.3 L436.2 206.4 M445.7 165.6 L442.5 169.7 L438.3 173.8 M465.0 196.7 L458.6 196.8 L451.9 198.5 L446.3 199.5 M403.8 208.0 L407.5 203.8 L410.7 200.9 L415.7 196.4 L419.3 193.5 M435.1 219.7 L434.9 214.0 L436.2 206.4 M305.1 89.4 L309.6 87.8 L315.3 86.1 L319.5 84.8 L324.6 83.1 L330.3 82.6 M303.3 65.4 L308.0 65.5 L313.8 65.3 L319.3 65.0 L324.4 65.2 M330.3 82.6 L328.0 76.3 L326.0 70.4 L324.4 65.2 M336.7 37.4 L337.4 42.3 L337.0 49.3 L337.8 54.7 M337.8 54.7 L333.4 58.3 L329.1 62.0 L324.4 65.2 M383.7 88.8 L381.5 86.1 M362.8 122.2 L359.2 119.6 L354.8 114.4 L349.7 111.7 M362.8 122.2 L367.6 119.3 L373.2 117.6 L380.0 114.0 L384.6 111.8 M384.6 111.8 L386.3 110.0 M381.5 86.1 L375.9 85.4 L370.7 85.9 L364.6 86.3 L360.7 85.7 L354.7 86.6 M349.7 111.7 L350.1 107.5 L351.6 102.5 L353.6 97.5 L353.0 91.8 L354.7 86.6 M330.3 82.6 L334.9 85.8 M337.8 54.7 L343.4 59.4 L348.9 63.9 M348.9 63.9 L348.8 70.7 L349.7 75.9 L349.0 81.9 M334.9 85.8 L341.8 83.2 L349.0 81.9 M357.6 162.2 L352.1 161.4 L344.9 162.6 L339.0 161.2 L332.6 161.5 M357.6 162.2 L359.0 157.8 L360.6 152.1 L362.8 146.3 L364.4 141.1 M364.4 141.1 L362.8 135.3 L360.8 129.9 M360.8 129.9 L356.3 132.7 L350.3 134.8 L345.6 135.8 L340.8 137.5 L335.3 139.6 L331.0 142.2 M332.6 161.5 L331.3 154.6 L332.4 148.0 L331.0 142.2 M364.8 189.0 L363.9 182.8 L363.5 179.0 L362.5 172.1 L362.5 167.5 M362.5 167.5 L357.6 162.2 M329.7 165.0 L332.6 161.5 M315.7 108.9 L322.1 110.5 L328.8 110.4 M315.7 108.9 L311.6 113.8 L307.1 117.8 M307.1 117.8 L308.0 123.8 L306.9 129.2 L307.8 136.1 M328.8 110.4 L329.3 110.8 M329.3 110.8 L330.1 116.8 L329.4 120.6 L329.5 125.7 L330.8 132.2 L331.1 137.8 L331.0 142.1 M307.8 136.1 L314.4 137.7 L318.6 138.2 L325.5 139.8 L331.0 142.1 M305.1 89.5 L307.5 95.1 L310.6 98.9 L313.3 103.7 L315.7 108.9 M334.9 85.8 L334.3 90.4 L332.5 95.7 L332.0 100.3 L330.9 106.1 L328.8 110.4 M278.0 116.4 L283.1 116.4 L290.0 117.2 L295.4 116.8 L301.9 118.3 L307.1 117.8 M297.3 145.2 L303.3 140.9 L307.8 136.1 M349.7 111.7 L345.1 111.7 L339.5 111.5 L333.6 111.6 L329.3 110.8 M354.7 86.6 L349.0 81.9 M362.8 122.2 L360.8 129.9 M247.8 197.9 L249.6 201.9 L252.4 208.2 L252.7 211.9 L255.5 216.9 L257.4 222.2 M247.8 197.9 L244.0 199.5 L238.8 201.0 L234.2 203.1 L229.0 204.9 M229.0 204.9 L227.6 211.7 L226.5 216.7 M250.3 231.7 L246.5 228.9 L241.1 227.0 L237.1 223.8 L232.1 220.7 L227.8 218.7 M250.3 231.7 L253.2 227.7 L257.4 222.2 M226.5 216.7 L227.8 218.7 M257.2 188.5 L251.9 193.2 L247.8 197.9 M269.3 218.5 L262.9 219.7 L257.4 222.2 M234.3 167.7 L228.5 171.7 L223.5 175.8 L218.3 179.3 M218.3 179.3 L217.4 185.1 L216.5 189.6 M216.5 189.6 L219.8 194.3 L225.5 199.5 L229.0 204.9 M198.8 225.0 L204.3 223.6 L210.6 221.7 L214.8 219.8 L221.3 219.2 L226.5 216.7 M199.2 194.6 L204.7 192.6 L211.1 190.9 L216.5 189.6 M251.2 238.3 L251.2 237.9 L250.3 231.7 M225.4 238.2 L225.8 233.3 L225.6 228.6 L226.6 224.4 L227.8 218.7 M195.2 238.1 L195.1 235.8 L193.4 230.3 M150.1 234.1 L150.8 233.1 L153.0 227.2 M163.1 238.0 L162.5 235.5 L162.0 229.6 M153.0 227.2 L162.0 229.6 M150.5 225.5 L153.0 227.2 M177.6 223.9 L172.7 225.5 L166.8 227.7 L162.0 229.6 M175.4 204.3 L171.0 201.2 L166.7 198.2 L162.4 194.9 M162.4 194.9 L155.2 194.9 L151.6 195.7 M197.8 146.2 L196.2 139.7 L192.9 134.1 M197.8 146.2 L195.2 155.8 M192.9 134.1 L187.9 134.2 L182.1 133.8 L176.9 134.7 L171.7 134.1 M195.2 155.8 L191.1 159.3 L186.0 165.2 L181.0 168.8 M171.7 134.1 L167.8 137.7 L165.5 141.8 L161.2 147.2 L158.9 150.7 M181.0 168.8 L176.6 169.2 M176.6 169.2 L171.9 167.4 L166.6 165.8 L162.9 163.1 M158.9 150.7 L160.3 157.2 L162.9 163.1 M226.3 145.7 L219.8 145.2 L214.6 146.4 L208.6 146.1 L202.7 145.5 L197.8 146.2 M195.4 124.2 L193.8 128.4 L192.9 134.1 M218.3 179.3 L213.7 175.4 L211.3 170.8 L206.3 168.2 L202.4 164.0 L198.3 159.3 L195.2 155.8 M154.5 118.5 L156.3 119.9 L160.0 122.9 L163.2 128.1 L167.3 130.1 L171.7 134.1 M192.2 192.0 L190.0 187.0 L187.3 183.6 L185.3 178.2 L182.6 173.2 L181.0 168.8 M153.4 148.2 L158.9 150.7 M162.4 194.9 L164.7 190.0 L168.1 183.8 L170.1 179.4 L173.2 174.2 L176.6 169.2 M152.6 167.5 L157.2 166.2 L162.9 163.1 M196.1 31.0 L189.7 31.7 L182.8 31.8 L176.9 31.4 M196.1 31.0 L197.4 33.4 M197.4 33.4 L195.6 38.9 L193.4 43.8 L190.7 50.1 L189.4 55.1 L186.5 60.8 M176.9 31.4 L171.8 35.8 L166.1 38.1 L161.8 42.0 M161.8 42.0 L164.9 47.0 L168.8 53.6 L171.8 58.6 M171.8 58.6 L179.6 60.5 L186.5 60.8 M198.9 6.6 L197.3 13.5 L197.8 18.8 L196.8 25.5 L196.1 31.0 M198.8 6.6 L197.1 6.0 M166.2 6.0 L168.4 11.6 L170.8 15.7 L172.6 21.2 L174.8 27.0 L176.9 31.4 M200.7 6.0 L198.9 6.6 M211.8 39.2 L206.9 38.0 L202.3 34.8 L197.4 33.4 M191.7 67.5 L186.5 60.8 M153.9 39.3 L161.8 42.0 M162.3 70.0 L166.3 64.1 L171.8 58.6 M524.4 89.3 L529.2 89.0 L534.4 89.5 L539.2 88.7 L544.2 87.1 L549.6 87.6 M555.7 114.4 L551.3 117.4 L547.8 121.9 L544.6 125.7 M521.0 94.2 L521.0 95.1 M521.0 95.1 L524.7 99.8 L527.2 103.6 L530.7 108.7 L533.7 112.5 L538.5 116.8 L540.5 122.0 L544.6 125.7 M528.8 170.5 L529.0 165.2 L530.1 159.5 L531.5 152.4 L531.0 146.5 L532.5 141.5 M552.4 173.7 L550.4 168.2 L549.9 163.5 L547.0 158.7 L545.9 152.7 L543.7 148.1 L542.6 142.3 L540.7 138.2 M532.5 141.5 L540.7 138.2 M571.3 146.4 L565.8 144.0 L560.1 143.1 L554.2 140.8 L549.3 139.1 L543.1 136.5 M544.6 125.7 L544.5 131.6 L543.1 136.5 M540.7 138.2 L543.1 136.5 M488.9 92.5 L483.5 90.3 L477.7 89.4 L472.0 88.3 L465.5 86.8 M488.9 92.5 L487.7 98.9 L487.7 104.1 L486.1 110.0 L485.3 114.5 L485.2 120.3 M478.4 122.7 L485.2 120.3 M478.4 122.7 L474.7 119.3 L469.3 114.8 L465.9 109.6 L460.7 105.8 M460.7 105.8 L461.3 101.0 L460.8 95.1 L461.6 89.2 M461.6 89.2 L465.5 86.8 M470.6 62.8 L469.5 68.7 L468.9 75.2 L467.2 81.7 L465.5 86.8 M467.5 140.8 L469.7 135.4 L472.1 131.6 L474.9 128.1 L478.4 122.7 M440.9 122.7 L441.9 127.3 M440.9 122.7 L445.0 119.3 L448.0 115.3 L452.6 113.3 L456.7 109.3 L460.7 105.8 M440.9 122.7 L435.7 118.1 M439.9 83.9 L445.8 85.8 L450.5 87.3 L456.1 88.7 L461.6 89.2 M66.5 6.0 L66.8 6.9 L68.5 14.0 M68.5 14.0 L65.1 18.2 L61.9 20.4 L58.5 25.1 L54.4 29.1 L50.5 32.2 M31.0 6.0 L32.8 8.6 L35.0 13.4 L38.8 16.7 L41.1 22.8 L44.8 27.2 L47.0 31.7 M50.5 32.2 L47.0 31.7 M77.0 17.2 L68.5 14.0 M66.1 51.8 L63.4 47.8 L60.1 44.4 L57.2 40.5 L53.3 35.2 L50.5 32.2 M6.0 29.0 L8.5 23.0 L9.7 19.0 L12.0 12.6 L13.9 8.2 M42.2 35.0 L47.0 31.7 M13.9 8.2 L19.8 7.2 L21.8 6.0 M11.6 6.5 L11.4 6.0 M11.6 6.5 L7.0 6.0 M13.9 8.2 L11.6 6.5 M656.6 33.1 L655.5 38.7 L656.5 44.2 L655.5 49.7 L655.2 56.0 L654.0 61.9 M656.6 33.1 L661.8 35.7 L664.8 38.0 L669.3 42.0 L673.8 45.0 L678.7 47.5 M654.0 61.9 L659.5 62.1 L664.6 61.4 L671.5 61.1 L676.6 61.9 L682.3 61.9 M678.7 47.5 L680.6 55.4 L682.3 61.9 M689.4 24.9 L686.4 28.7 L684.4 33.3 L683.5 38.9 L680.7 43.1 L678.7 47.5 M655.3 20.2 L652.5 26.7 M652.5 26.7 L656.6 33.1 M700.4 64.1 L694.0 63.0 L688.9 62.0 L682.3 61.9 M673.2 85.5 L675.3 90.8 L676.5 96.2 L679.3 102.2 M673.2 85.5 L674.3 80.5 L676.0 75.2 L678.8 71.1 L680.6 67.3 L682.3 61.9 M673.2 85.5 L667.3 84.4 L662.5 84.1 L657.8 84.4 M654.0 61.9 L648.5 64.7 M648.5 64.7 L650.2 69.2 L653.5 75.3 L655.3 79.9 L657.8 84.4 M660.1 111.0 L656.9 105.8 L654.3 101.6 L651.9 97.3 L649.0 93.2 M657.8 84.4 L653.4 88.1 L649.0 93.2 M550.5 28.4 L554.0 32.9 L556.5 38.1 M550.5 28.4 L544.0 28.9 L538.2 28.9 L531.1 30.0 M556.5 38.1 L555.3 43.9 L552.8 48.8 L551.6 53.1 L550.6 58.3 M550.6 58.3 L545.0 57.0 L539.8 56.3 L533.1 56.7 L528.0 55.3 L522.3 55.5 M522.3 55.5 L522.4 50.0 L524.2 45.5 L524.0 40.4 L525.2 35.3 M525.2 35.3 L531.1 30.0 M526.7 6.0 L527.2 9.2 L528.4 14.1 L529.1 19.5 L530.1 24.6 L531.1 30.0 M547.8 6.0 L550.2 10.5 L553.6 15.8 L555.3 21.1 M555.3 21.1 L550.5 28.4 M518.0 61.6 L522.3 55.5 M555.9 83.8 L556.1 76.7 L555.9 70.8 L554.8 64.0 M554.8 64.0 L550.6 58.3 M501.1 24.6 L505.5 26.2 L510.6 28.0 L516.4 31.0 L520.6 32.6 L525.2 35.3 M664.7 225.0 L664.3 224.4 L660.9 219.6 L657.4 214.6 M657.4 214.6 L651.4 215.5 L647.0 217.5 L641.2 219.9 L635.6 221.5 L630.4 223.2 M629.3 225.0 L630.4 223.2 M599.3 225.0 L601.1 225.0 M605.8 225.0 L610.9 224.8 L613.6 225.0 M626.7 195.5 L627.5 200.8 L628.8 206.4 L629.4 211.9 L628.9 218.2 L630.4 223.2 M688.0 225.0 L688.3 223.6 L689.2 218.0 L692.1 210.5 L692.8 205.0 M720.3 215.4 L717.7 209.8 L713.7 203.9 L710.3 199.0 M710.3 199.0 L704.4 200.4 L698.9 203.1 L692.8 205.0 M735.8 190.8 L729.3 191.8 L723.9 191.8 L719.2 192.5 L712.9 193.5 M710.3 199.0 L712.9 193.5 M710.3 166.6 L708.4 169.2 M712.9 193.5 L711.5 188.2 L711.0 180.9 L710.0 175.8 L708.4 169.2 M414.1 148.4 L412.4 146.4 M414.1 148.4 L411.4 154.2 L409.6 160.3 L408.2 165.4 L406.3 171.8 M412.4 146.4 L406.0 144.7 L401.2 144.3 L395.2 143.5 L389.8 142.6 M406.3 171.8 L398.7 173.4 M398.7 173.4 L394.2 170.0 L388.1 167.0 L383.9 162.4 M383.9 162.4 L383.1 155.2 L383.8 147.6 M383.8 147.6 L389.8 142.6 M424.9 146.9 L420.3 148.5 L414.1 148.4 M407.2 115.3 L407.8 120.6 L408.6 125.0 L410.2 130.0 L411.0 136.8 L412.1 141.0 L412.4 146.4 M417.5 181.5 L411.1 177.4 L406.3 171.8 M384.6 111.8 L385.4 116.2 L387.2 122.0 L386.9 128.0 L387.7 131.8 L389.6 137.6 L389.8 142.6 M386.5 188.9 L389.7 184.6 L393.9 178.9 L398.7 173.4 M362.5 167.5 L368.4 166.5 L372.8 165.0 L379.4 164.2 L383.9 162.4 M364.4 141.1 L369.2 143.1 L374.7 144.1 L379.6 145.3 L383.8 147.6 M384.2 58.6 L380.0 65.2 M384.2 58.6 L384.6 52.9 L386.6 46.1 L387.2 40.7 M380.0 65.2 L374.1 63.8 L366.7 61.6 L360.7 60.7 M360.7 60.7 L361.5 55.8 L361.0 49.4 L360.8 44.8 L361.9 40.0 L362.1 33.8 M387.2 40.7 L385.1 36.4 L381.9 31.1 M381.9 31.1 L375.0 32.6 L368.9 32.5 L362.1 33.8 M413.1 66.7 L408.4 65.6 L403.1 64.8 L398.0 62.0 L394.6 60.7 L388.4 60.4 L384.2 58.6 M381.5 86.1 L382.0 80.1 L381.4 75.2 L381.2 70.7 L380.0 65.2 M416.4 43.9 L410.7 44.1 L404.2 42.4 L399.6 41.5 L393.1 41.0 L387.2 40.7 M348.9 63.9 L354.9 62.0 L360.7 60.7 M355.2 32.3 L362.1 33.8 M384.2 22.7 L381.9 31.1 M198.8 6.6 L198.8 6.0 M492.1 122.7 L497.5 122.0 L504.7 120.2 L511.0 118.4 M492.1 122.7 L492.7 128.9 L494.4 134.5 L496.9 139.9 L498.7 145.8 L499.8 151.4 M511.0 118.4 L514.4 123.3 L516.1 127.8 L518.1 134.0 L521.3 138.2 M499.8 151.4 L504.8 149.2 L509.3 146.6 L513.6 143.0 L517.0 140.3 L521.3 138.2 M521.0 95.1 L518.7 100.6 L516.3 104.4 L515.5 108.8 L512.5 113.5 L511.0 118.4 M485.2 120.3 L492.1 122.7 M495.0 159.2 L499.8 151.4 M532.5 141.5 L527.4 139.6 L521.3 138.2 M587.1 6.0 L587.5 6.2 L591.8 9.9 L595.7 11.5 M599.0 6.0 L595.7 11.5 M555.3 21.1 L561.4 17.6 L567.3 15.2 M567.3 15.2 L570.0 10.0 L571.0 6.0 M648.5 64.7 L642.8 64.4 L637.7 64.4 M649.0 93.2 L643.3 92.3 L638.2 92.2 L633.0 91.2 L628.1 91.5 M637.7 64.4 L635.8 69.8 L633.1 75.9 L632.7 81.2 L629.5 86.8 L628.1 91.5 M602.1 102.4 L605.4 99.0 L609.1 95.0 L613.4 91.8 M632.1 109.6 L629.9 104.7 L629.1 98.9 L627.0 92.4 M613.4 91.8 L620.0 91.3 L627.0 92.4 M627.0 92.4 L628.1 91.5 M567.3 15.2 L572.0 18.9 L577.2 22.0 L581.7 24.9 L585.8 29.1 M595.7 11.5 L595.5 16.9 L596.8 23.0 M585.8 29.1 L591.8 25.9 L596.8 23.0 M556.5 38.1 L561.7 40.8 L569.1 42.4 L574.3 44.2 L579.9 46.3 M585.8 29.1 L584.1 35.1 L581.0 41.2 L579.9 46.3 M554.8 64.0 L560.1 62.3 L566.2 59.0 L571.0 56.9 L577.2 53.9 L582.1 52.4 M582.1 52.4 L579.9 46.3 M572.9 86.1 L575.9 81.9 L579.6 77.5 L584.1 72.5 L586.7 67.9 L591.3 62.4 M582.1 52.4 L586.4 57.9 L591.3 62.4 M674.8 168.3 L676.0 169.3 M674.8 168.3 L669.5 168.7 M676.0 169.3 L676.9 174.5 L677.1 180.5 L677.7 185.8 L679.1 191.0 L680.0 196.5 M669.5 168.7 L664.5 170.0 L658.6 173.2 M658.6 173.2 L657.2 178.1 L655.9 183.4 L655.1 188.6 L654.7 192.7 L652.7 198.0 M680.0 196.5 L675.2 199.4 L668.8 201.2 L663.4 204.5 L658.9 206.7 M652.7 198.0 L656.4 202.2 L658.9 206.7 M678.6 140.9 L678.0 145.5 L677.4 151.1 L676.6 158.2 L676.1 163.0 L674.8 168.3 M708.4 169.2 L703.3 168.6 L698.2 169.2 L692.8 169.8 L687.1 169.1 L681.3 170.1 L676.0 169.3 M645.0 139.4 L647.7 142.9 L652.7 147.9 L656.0 152.4 L659.8 156.7 L663.1 160.2 L665.5 165.2 L669.5 168.7 M692.8 205.0 L688.1 201.5 L683.8 200.1 L680.0 196.5 M627.8 168.0 L633.0 168.7 L638.8 170.4 L643.0 170.6 L648.0 171.6 L652.7 171.8 L658.6 173.2 M628.4 192.8 L634.2 194.7 L641.0 195.4 L646.5 197.2 L652.7 198.0 M657.4 214.6 L658.9 206.7 M619.6 28.9 L613.8 29.7 M619.6 28.9 L624.8 31.3 L630.7 35.5 M613.8 29.7 L611.5 34.2 L607.9 39.0 L606.0 44.2 L602.9 48.8 L601.4 53.9 L597.3 57.6 L595.4 62.8 M630.7 35.5 L631.1 41.3 L630.5 45.2 L631.3 51.8 L631.3 56.6 M631.3 56.6 L625.7 58.9 L620.6 58.9 L615.4 60.4 L609.4 62.1 L605.0 63.7 L599.0 64.9 M599.0 64.9 L595.4 62.8 M622.7 6.0 L622.7 9.1 L621.0 13.4 L620.4 19.1 L620.0 23.9 L619.6 28.9 M596.8 23.0 L602.1 25.7 L609.0 26.8 L613.8 29.7 M652.5 26.7 L646.7 28.2 L641.6 31.2 L636.2 34.0 L630.7 35.5 M591.3 62.4 L595.4 62.8 M637.7 64.4 L634.8 59.7 L631.3 56.6 M613.4 91.8 L610.6 88.0 L608.4 82.9 L606.4 77.5 L603.1 73.7 L601.5 68.6 L599.0 64.9" fill="none" stroke="#5b6163" stroke-width="1" />
<path d="M25.5 105.0 L25.5 128.8 M65.6 105.0 L65.6 128.8 M106.1 105.0 L106.1 128.8 M133.8 105.0 L133.8 128.8 M149.6 105.0 L149.6 127.3 M149.6 127.3 L149.6 128.8 M6.0 128.8 L20.8 128.8 M20.8 128.8 L25.5 128.8 M25.5 128.8 L58.6 128.8 M58.6 128.8 L65.6 128.8 M65.6 128.8 L93.9 128.8 M93.9 128.8 L106.1 128.8 M106.1 128.8 L133.8 128.8 M133.8 128.8 L135.3 128.8 M135.3 128.8 L149.6 128.8 M20.8 128.8 L20.8 166.5 M58.6 128.8 L58.6 166.5 M93.9 128.8 L93.9 166.5 M135.3 128.8 L135.3 166.5 M149.6 128.8 L149.6 158.4 M149.6 158.4 L149.6 166.5 M6.0 166.5 L20.8 166.5 M20.8 166.5 L31.1 166.5 M31.1 166.5 L57.0 166.5 M57.0 166.5 L58.6 166.5 M58.6 166.5 L93.9 166.5 M93.9 166.5 L96.5 166.5 M96.5 166.5 L135.3 166.5 M135.3 166.5 L138.2 166.5 M138.2 166.5 L149.6 166.5 M31.1 166.5 L31.1 194.9 M57.0 166.5 L57.0 194.9 M96.5 166.5 L96.5 194.9 M138.2 166.5 L138.2 194.9 M149.6 166.5 L149.6 187.5 M149.6 187.5 L149.6 194.9 M6.0 194.9 L26.2 194.9 M26.2 194.9 L31.1 194.9 M31.1 194.9 L57.0 194.9 M57.0 194.9 L61.5 194.9 M61.5 194.9 L96.5 194.9 M96.5 194.9 L99.0 194.9 M99.0 194.9 L132.2 194.9 M132.2 194.9 L138.2 194.9 M138.2 194.9 L149.6 194.9 M26.2 194.9 L26.2 224.5 M61.5 194.9 L61.5 224.5 M99.0 194.9 L99.0 224.5 M132.2 194.9 L132.2 224.5 M149.6 194.9 L149.6 221.0 M149.6 221.0 L149.6 224.5 M6.0 224.5 L26.2 224.5 M26.2 224.5 L31.0 224.5 M31.0 224.5 L60.3 224.5 M60.3 224.5 L61.5 224.5 M61.5 224.5 L91.6 224.5 M91.6 224.5 L99.0 224.5 M99.0 224.5 L130.1 224.5 M130.1 224.5 L132.2 224.5 M132.2 224.5 L149.6 224.5 M31.0 224.5 L31.0 259.9 M60.3 224.5 L60.3 259.9 M91.6 224.5 L91.6 259.9 M130.1 224.5 L130.1 259.9 M149.6 224.5 L149.6 256.1 M149.6 256.1 L149.6 259.9 M6.0 259.9 L14.7 259.9 M14.7 259.9 L31.0 259.9 M31.0 259.9 L42.2 259.9 M42.2 259.9 L60.3 259.9 M60.3 259.9 L78.5 259.9 M78.5 259.9 L91.6 259.9 M91.6 259.9 L117.4 259.9 M117.4 259.9 L130.1 259.9 M130.1 259.9 L149.6 259.9 M14.7 259.9 L14.7 290.0 M42.2 259.9 L42.2 290.0 M78.5 259.9 L78.5 290.0 M117.4 259.9 L117.4 290.0 M149.6 259.9 L149.6 290.0 M6.0 290.0 L14.7 290.0 M14.7 290.0 L28.3 290.0 M28.3 290.0 L42.2 290.0 M42.2 290.0 L64.6 290.0 M64.6 290.0 L78.5 290.0 M78.5 290.0 L94.6 290.0 M94.6 290.0 L117.4 290.0 M117.4 290.0 L136.6 290.0 M136.6 290.0 L149.6 290.0 M28.3 290.0 L28.3 321.6 M64.6 290.0 L64.6 321.6 M94.6 290.0 L94.6 321.6 M136.6 290.0 L136.6 321.6 M149.6 290.0 L149.6 292.7 M149.6 292.7 L149.6 321.6 M6.0 321.6 L28.3 321.6 M28.3 321.6 L28.8 321.6 M28.8 321.6 L64.0 321.6 M64.0 321.6 L64.6 321.6 M64.6 321.6 L93.8 321.6 M93.8 321.6 L94.6 321.6 M94.6 321.6 L132.8 321.6 M132.8 321.6 L136.6 321.6 M136.6 321.6 L149.6 321.6 M28.8 321.6 L28.8 354.0 M64.0 321.6 L64.0 354.0 M93.8 321.6 L93.8 354.0 M132.8 321.6 L132.8 354.0 M149.6 321.6 L149.6 326.5 M149.6 326.5 L149.6 352.1 M149.6 352.1 L149.6 354.0 M6.0 354.0 L28.8 354.0 M28.8 354.0 L30.3 354.0 M30.3 354.0 L64.0 354.0 M64.0 354.0 L67.4 354.0 M67.4 354.0 L93.8 354.0 M93.8 354.0 L103.9 354.0 M103.9 354.0 L132.8 354.0 M132.8 354.0 L149.6 354.0 M30.3 354.0 L30.3 386.6 M67.4 354.0 L67.4 386.6 M103.9 354.0 L103.9 386.6 M149.6 354.0 L149.6 379.0 M149.6 379.0 L149.6 386.6 M6.0 386.6 L28.1 386.6 M28.1 386.6 L30.3 386.6 M30.3 386.6 L66.5 386.6 M66.5 386.6 L67.4 386.6 M67.4 386.6 L103.9 386.6 M103.9 386.6 L105.9 386.6 M105.9 386.6 L149.6 386.6 M28.1 386.6 L28.1 420.5 M66.5 386.6 L66.5 420.5 M105.9 386.6 L105.9 420.5 M149.6 386.6 L149.6 409.1 M149.6 409.1 L149.6 420.5 M6.0 420.5 L28.1 420.5 M28.1 420.5 L57.3 420.5 M57.3 420.5 L66.5 420.5 M66.5 420.5 L89.7 420.5 M89.7 420.5 L105.9 420.5 M105.9 420.5 L130.6 420.5 M130.6 420.5 L149.6 420.5 M28.1 420.5 L28.1 451.3 M57.3 420.5 L57.3 451.3 M89.7 420.5 L89.7 451.3 M130.6 420.5 L130.6 451.3 M149.6 420.5 L149.6 438.0 M149.6 438.0 L149.6 451.3 M6.0 451.3 L16.2 451.3 M16.2 451.3 L28.1 451.3 M28.1 451.3 L50.6 451.3 M50.6 451.3 L57.3 451.3 M57.3 451.3 L88.7 451.3 M88.7 451.3 L89.7 451.3 M89.7 451.3 L117.8 451.3 M117.8 451.3 L130.6 451.3 M130.6 451.3 L149.6 451.3 M16.2 451.3 L16.2 482.1 M50.6 451.3 L50.6 482.1 M88.7 451.3 L88.7 482.1 M117.8 451.3 L117.8 482.1 M149.6 451.3 L149.6 468.5 M149.6 468.5 L149.6 482.1 M6.0 482.1 L14.9 482.1 M14.9 482.1 L16.2 482.1 M16.2 482.1 L50.2 482.1 M50.6 482.1 L82.3 482.1 M82.3 482.1 L88.7 482.1 M88.7 482.1 L109.9 482.1 M109.9 482.1 L117.8 482.1 M117.8 482.1 L139.4 482.1 M139.4 482.1 L149.6 482.1 M14.9 482.1 L14.9 511.0 M50.2 482.1 L50.2 511.0 M82.3 482.1 L82.3 511.0 M109.9 482.1 L109.9 511.0 M139.4 482.1 L139.4 511.0 M149.6 482.1 L149.6 493.6 M149.6 493.6 L149.6 511.0 M6.0 511.0 L14.9 511.0 M14.9 511.0 L28.0 511.0 M28.0 511.0 L50.2 511.0 M50.2 511.0 L56.3 511.0 M56.3 511.0 L82.3 511.0 M82.3 511.0 L96.7 511.0 M96.7 511.0 L109.9 511.0 M109.9 511.0 L138.4 511.0 M138.4 511.0 L139.4 511.0 M139.4 511.0 L149.6 511.0 M28.0 511.0 L28.0 546.0 M56.3 511.0 L56.3 546.0 M96.7 511.0 L96.7 546.0 M138.4 511.0 L138.4 546.0 M149.6 511.0 L149.6 522.1 M149.6 522.1 L149.6 546.0 M6.0 546.0 L23.2 546.0 M23.2 546.0 L28.0 546.0 M28.0 546.0 L48.6 546.0 M48.6 546.0 L56.3 546.0 M56.3 546.0 L90.3 546.0 M90.3 546.0 L96.7 546.0 M96.7 546.0 L124.3 546.0 M124.3 546.0 L138.4 546.0 M138.4 546.0 L149.6 546.0 M23.2 546.0 L23.2 575.9 M48.6 546.0 L48.6 575.9 M90.3 546.0 L90.3 575.9 M124.3 546.0 L124.3 575.9 M149.6 546.0 L149.6 549.0 M149.6 549.0 L149.6 575.7 M6.0 575.9 L15.0 575.9 M15.0 575.9 L23.2 575.9 M23.2 575.9 L40.8 575.9 M40.8 575.9 L48.6 575.9 M48.6 575.9 L70.5 575.9 M70.5 575.9 L90.3 575.9 M90.3 575.9 L99.3 575.9 M99.3 575.9 L124.3 575.9 M124.3 575.9 L128.6 575.9 M128.6 575.9 L149.6 575.9 M15.0 575.9 L15.0 607.6 M40.8 575.9 L40.8 607.6 M70.5 575.9 L70.5 607.6 M99.3 575.9 L99.3 607.6 M128.6 575.9 L128.6 607.6 M149.6 575.9 L149.6 604.1 M149.6 604.1 L149.6 607.6 M6.0 607.6 L15.0 607.6 M15.3 607.6 L40.8 607.6 M40.8 607.6 L52.6 607.6 M52.6 607.6 L70.5 607.6 M70.5 607.6 L92.7 607.6 M92.7 607.6 L99.3 607.6 M99.3 607.6 L128.6 607.6 M128.6 607.6 L132.6 607.6 M132.6 607.6 L149.6 607.6 M15.3 607.6 L15.3 634.5 M52.6 607.6 L52.6 634.5 M92.7 607.6 L92.7 634.5 M132.6 607.6 L132.6 634.5 M149.6 607.6 L149.6 634.5 M6.0 634.5 L15.3 634.5 M15.3 634.5 L19.5 634.5 M19.5 634.5 L48.3 634.5 M48.3 634.5 L52.6 634.5 M52.6 634.5 L75.3 634.5 M75.3 634.5 L92.7 634.5 M92.7 634.5 L113.1 634.5 M113.1 634.5 L132.6 634.5 M132.6 634.5 L149.6 634.5 M19.5 634.5 L19.5 664.8 M48.3 634.5 L48.3 664.8 M75.3 634.5 L75.3 664.8 M113.1 634.5 L113.1 664.8 M149.6 634.5 L149.6 639.7 M149.6 639.7 L149.6 664.8 M6.0 664.8 L16.8 664.8 M16.8 664.8 L19.5 664.8 M19.5 664.8 L48.3 664.8 M48.3 664.8 L57.5 664.8 M57.5 664.8 L75.3 664.8 M75.3 664.8 L98.4 664.8 M98.4 664.8 L113.1 664.8 M113.1 664.8 L128.1 664.8 M128.1 664.8 L149.6 664.8 M16.8 664.8 L16.8 693.1 M57.5 664.8 L57.5 693.1 M98.4 664.8 L98.4 693.1 M128.1 664.8 L128.1 693.1 M149.6 664.8 L149.6 677.6 M149.6 677.6 L149.6 693.1 M6.0 693.1 L16.8 693.1 M16.8 693.1 L23.6 693.1 M23.6 693.1 L52.7 693.1 M52.7 693.1 L57.5 693.1 M57.5 693.1 L80.9 693.1 M80.9 693.1 L98.4 693.1 M98.4 693.1 L109.1 693.1 M109.1 693.1 L128.1 693.1 M128.1 693.1 L149.6 693.1 M23.6 693.1 L23.6 697.9 M52.7 693.1 L52.7 723.3 M80.9 693.1 L80.9 723.8 M109.1 693.1 L109.1 723.8 M149.6 693.1 L149.6 710.0 M149.6 710.0 L149.6 723.8 M52.9 723.8 L59.0 723.8 M59.0 723.8 L80.9 723.8 M80.9 723.8 L100.4 723.8 M100.4 723.8 L109.1 723.8 M109.1 723.8 L140.5 723.8 M140.5 723.8 L149.6 723.8 M59.0 723.8 L59.0 724.5 M100.4 723.8 L100.4 750.7 M140.5 723.8 L140.5 747.7 M149.6 723.8 L149.6 735.3 M149.6 735.3 L149.6 757.2 M106.6 757.2 L113.4 757.2 M148.1 757.2 L149.6 757.2 M149.6 757.2 L149.6 759.8 M149.6 127.3 L154.2 127.3 M149.6 158.4 L153.0 158.4 M149.6 187.5 L151.9 187.5 M149.6 221.0 L150.6 221.0 M188.9 238.1 L188.9 256.1 M218.1 238.2 L218.1 256.1 M252.2 238.3 L252.2 256.1 M286.6 238.4 L286.6 245.3 M286.6 245.3 L286.6 256.1 M149.6 256.1 L182.9 256.1 M182.9 256.1 L188.9 256.1 M188.9 256.1 L218.1 256.1 M218.1 256.1 L219.4 256.1 M219.4 256.1 L243.6 256.1 M243.6 256.1 L252.2 256.1 M252.2 256.1 L286.6 256.1 M182.9 256.1 L182.9 292.7 M219.4 256.1 L219.4 292.7 M243.6 256.1 L243.6 292.7 M286.6 256.1 L286.6 280.4 M286.6 280.4 L286.6 292.7 M149.6 292.7 L182.9 292.7 M183.0 292.7 L212.9 292.7 M212.9 292.7 L219.4 292.7 M219.4 292.7 L243.6 292.7 M243.6 292.7 L251.5 292.7 M251.5 292.7 L286.6 292.7 M183.0 292.7 L183.0 326.5 M212.9 292.7 L212.9 326.5 M251.5 292.7 L251.5 326.5 M286.6 292.7 L286.6 316.9 M286.6 316.9 L286.6 326.5 M149.6 326.5 L176.7 326.5 M176.7 326.5 L183.0 326.5 M183.0 326.5 L212.9 326.5 M212.9 326.5 L214.2 326.5 M214.2 326.5 L247.6 326.5 M247.6 326.5 L251.5 326.5 M251.5 326.5 L274.8 326.5 M274.8 326.5 L286.6 326.5 M176.7 326.5 L176.7 352.1 M214.2 326.5 L214.2 352.1 M247.6 326.5 L247.6 352.1 M274.8 326.5 L274.8 352.1 M286.6 326.5 L286.6 344.0 M286.6 344.0 L286.6 352.1 M149.6 352.1 L176.7 352.1 M176.7 352.1 L181.6 352.1 M181.6 352.1 L211.1 352.1 M211.1 352.1 L214.2 352.1 M214.2 352.1 L239.4 352.1 M239.4 352.1 L247.6 352.1 M247.6 352.1 L267.2 352.1 M267.2 352.1 L274.8 352.1 M274.8 352.1 L286.6 352.1 M181.6 352.1 L181.6 379.0 M211.1 352.1 L211.1 379.0 M239.4 352.1 L239.4 379.0 M267.2 352.1 L267.2 379.0 M286.6 352.1 L286.6 379.0 M149.6 379.0 L177.6 379.0 M177.6 379.0 L181.6 379.0 M181.6 379.0 L211.1 379.0 M211.1 379.0 L218.5 379.0 M218.5 379.0 L239.4 379.0 M239.4 379.0 L253.6 379.0 M253.6 379.0 L267.2 379.0 M267.2 379.0 L286.6 379.0 M177.6 379.0 L177.6 409.1 M218.5 379.0 L218.5 409.1 M253.6 379.0 L253.6 409.1 M286.6 379.4 L286.6 406.3 M286.6 406.3 L286.6 409.1 M149.6 409.1 L177.6 409.1 M177.6 409.1 L184.9 409.1 M184.9 409.1 L218.5 409.1 M218.5 409.1 L219.0 409.1 M219.0 409.1 L253.6 409.1 M253.8 409.1 L286.6 409.1 M184.9 409.1 L184.9 438.0 M219.0 409.1 L219.0 438.0 M253.8 409.1 L253.8 438.0 M286.6 409.1 L286.6 437.5 M286.6 437.5 L286.6 438.0 M149.6 438.0 L177.6 438.0 M177.6 438.0 L184.9 438.0 M184.9 438.0 L217.6 438.0 M217.6 438.0 L219.0 438.0 M219.0 438.0 L242.2 438.0 M242.2 438.0 L253.8 438.0 M253.8 438.0 L266.8 438.0 M266.8 438.0 L286.6 438.0 M177.6 438.0 L177.6 468.5 M217.6 438.0 L217.6 468.5 M242.2 438.0 L242.2 468.5 M266.8 438.0 L266.8 468.5 M286.6 438.0 L286.6 468.5 M149.6 468.5 L177.6 468.5 M177.6 468.5 L182.0 468.5 M182.0 468.5 L206.5 468.5 M206.5 468.5 L217.6 468.5 M217.6 468.5 L231.7 468.5 M231.7 468.5 L242.2 468.5 M242.2 468.5 L256.2 468.5 M256.2 468.5 L266.8 468.5 M266.8 468.5 L286.6 468.5 M182.0 468.5 L182.0 493.6 M206.5 468.5 L206.5 493.6 M231.7 468.5 L231.7 493.6 M256.2 468.5 L256.2 493.6 M286.6 468.5 L286.6 469.5 M286.6 469.5 L286.6 493.6 M149.6 493.6 L175.9 493.6 M175.9 493.6 L182.0 493.6 M182.0 493.6 L204.2 493.6 M204.2 493.6 L206.5 493.6 M206.5 493.6 L231.7 493.6 M231.7 493.6 L237.5 493.6 M237.5 493.6 L256.2 493.6 M256.2 493.6 L267.6 493.6 M267.6 493.6 L286.6 493.6 M175.9 493.6 L175.9 522.1 M204.2 493.6 L204.2 522.1 M237.5 493.6 L237.5 522.1 M267.6 493.6 L267.6 522.1 M286.6 493.6 L286.6 499.1 M286.6 499.1 L286.6 522.1 M149.6 522.1 L175.9 522.1 M175.9 522.1 L180.0 522.1 M180.0 522.1 L204.2 522.1 M204.2 522.1 L215.0 522.1 M215.0 522.1 L237.5 522.1 M237.5 522.1 L252.8 522.1 M252.8 522.1 L267.6 522.1 M267.6 522.1 L277.0 522.1 M277.0 522.1 L286.6 522.1 M180.0 522.1 L180.0 549.0 M215.0 522.1 L215.0 549.0 M252.8 522.1 L252.8 549.0 M277.0 522.1 L277.0 549.0 M286.6 522.1 L286.6 534.9 M286.6 534.9 L286.6 549.0 M149.6 549.0 L180.0 549.0 M180.0 549.0 L190.4 549.0 M190.4 549.0 L215.0 549.0 M215.0 549.0 L218.0 549.0 M218.0 549.0 L252.8 549.0 M252.8 549.0 L257.1 549.0 M257.1 549.0 L277.0 549.0 M277.0 549.0 L286.6 549.0 M190.4 549.0 L190.4 575.7 M218.0 549.0 L218.0 575.7 M257.1 549.0 L257.1 575.7 M286.6 549.0 L286.6 570.7 M286.6 570.7 L286.6 575.7 M149.6 575.7 L183.5 575.7 M183.5 575.7 L190.4 575.7 M190.4 575.7 L212.2 575.7 M212.2 575.7 L218.0 575.7 M218.0 575.7 L239.9 575.7 M239.9 575.7 L257.1 575.7 M257.1 575.7 L273.4 575.7 M273.4 575.7 L286.6 575.7 M183.5 575.7 L183.5 604.1 M212.2 575.7 L212.2 604.1 M239.9 575.7 L239.9 604.1 M273.4 575.7 L273.4 604.1 M286.6 575.7 L286.6 595.8 M286.6 595.8 L286.6 604.1 M149.6 604.1 L178.7 604.1 M178.7 604.1 L183.5 604.1 M183.5 604.1 L212.2 604.1 M212.2 604.1 L217.1 604.1 M217.1 604.1 L239.9 604.1 M239.9 604.1 L258.5 604.1 M258.5 604.1 L273.4 604.1 M273.4 604.1 L286.6 604.1 M178.7 604.1 L178.7 639.7 M217.1 604.1 L217.1 639.7 M258.5 604.1 L258.5 639.7 M286.6 604.1 L286.6 625.6 M286.6 625.6 L286.6 639.7 M149.6 639.7 L178.7 639.7 M178.7 639.7 L181.0 639.7 M181.0 639.7 L216.0 639.7 M216.0 639.7 L217.1 639.7 M217.1 639.7 L251.6 639.7 M251.6 639.7 L258.5 639.7 M258.5 639.7 L278.0 639.7 M278.0 639.7 L286.6 639.7 M181.0 639.7 L181.0 677.6 M216.0 639.7 L216.0 651.5 M251.6 639.7 L251.6 645.9 M278.0 639.7 L278.0 650.8 M286.6 639.7 L286.6 649.1 M149.6 677.6 L181.0 677.6 M181.0 677.6 L182.5 677.6 M182.5 677.6 L190.9 677.6 M202.8 677.6 L204.5 677.6 M182.5 677.6 L182.5 679.8 M182.5 689.7 L182.5 710.0 M149.6 710.0 L182.5 710.0 M182.5 710.0 L187.4 710.0 M187.4 710.0 L190.6 710.0 M187.4 710.0 L187.4 713.1 M187.4 724.1 L187.4 735.3 M149.6 735.3 L152.9 735.3 M179.5 735.3 L187.4 735.3 M187.4 735.3 L199.1 735.3 M216.1 741.9 L216.1 763.1 M316.8 238.5 L316.8 245.3 M348.6 238.6 L348.6 245.3 M375.1 238.7 L375.1 245.3 M400.5 238.7 L400.5 245.3 M443.1 238.9 L443.1 245.3 M286.6 245.3 L315.3 245.3 M315.3 245.3 L316.8 245.3 M316.8 245.3 L348.6 245.3 M348.6 245.3 L351.5 245.3 M351.5 245.3 L375.1 245.3 M375.1 245.3 L381.9 245.3 M381.9 245.3 L400.5 245.3 M400.5 245.3 L413.9 245.3 M413.9 245.3 L443.1 245.3 M315.3 245.3 L315.3 280.4 M351.5 245.3 L351.5 280.4 M381.9 245.3 L381.9 280.4 M413.9 245.3 L413.9 280.4 M443.1 245.3 L443.1 262.1 M443.1 262.1 L443.1 280.4 M286.6 280.4 L315.3 280.4 M315.5 280.4 L346.3 280.4 M346.3 280.4 L351.5 280.4 M351.5 280.4 L376.7 280.4 M376.7 280.4 L381.9 280.4 M381.9 280.4 L412.9 280.4 M412.9 280.4 L413.9 280.4 M413.9 280.4 L443.1 280.4 M315.5 280.4 L315.5 316.9 M346.3 280.4 L346.3 316.9 M376.7 280.4 L376.7 316.9 M412.9 280.4 L412.9 316.9 M443.1 280.4 L443.1 287.4 M443.1 287.4 L443.1 316.9 M286.6 316.9 L311.2 316.9 M311.2 316.9 L315.5 316.9 M315.5 316.9 L341.8 316.9 M341.8 316.9 L346.3 316.9 M346.3 316.9 L368.6 316.9 M368.6 316.9 L376.7 316.9 M376.7 316.9 L397.6 316.9 M397.6 316.9 L412.9 316.9 M412.9 316.9 L434.0 316.9 M434.0 316.9 L443.1 316.9 M311.2 316.9 L311.2 344.0 M341.8 316.9 L341.8 344.0 M368.6 316.9 L368.6 344.0 M397.6 316.9 L397.6 344.0 M434.0 316.9 L434.0 344.0 M443.1 316.9 L443.1 323.3 M443.1 323.3 L443.1 344.0 M286.6 344.0 L311.2 344.0 M311.2 344.0 L320.6 344.0 M320.6 344.0 L341.8 344.0 M341.8 344.0 L357.1 344.0 M357.1 344.0 L368.6 344.0 M368.6 344.0 L389.8 344.0 M389.8 344.0 L397.6 344.0 M397.6 344.0 L424.5 344.0 M424.5 344.0 L434.0 344.0 M434.0 344.0 L443.1 344.0 M320.6 344.0 L320.6 379.4 M357.1 344.0 L357.1 379.4 M389.8 344.0 L389.8 379.4 M424.5 344.0 L424.5 379.4 M443.1 344.0 L443.1 355.4 M443.1 355.4 L443.1 379.4 M286.6 379.4 L316.3 379.4 M316.3 379.4 L320.6 379.4 M320.6 379.4 L352.9 379.4 M352.9 379.4 L357.1 379.4 M357.1 379.4 L389.8 379.4 M389.8 379.4 L391.9 379.4 M391.9 379.4 L422.9 379.4 M422.9 379.4 L424.5 379.4 M424.5 379.4 L443.1 379.4 M316.3 379.4 L316.3 406.3 M352.9 379.4 L352.9 406.3 M391.9 379.4 L391.9 406.3 M422.9 379.4 L422.9 406.3 M443.1 379.4 L443.1 387.6 M443.1 387.6 L443.1 406.3 M286.6 406.3 L312.4 406.3 M312.4 406.3 L316.3 406.3 M316.3 406.3 L337.1 406.3 M337.1 406.3 L352.9 406.3 M352.9 406.3 L371.5 406.3 M371.5 406.3 L391.9 406.3 M391.9 406.3 L402.6 406.3 M402.6 406.3 L422.9 406.3 M422.9 406.3 L428.3 406.3 M428.3 406.3 L443.1 406.3 M312.4 406.3 L312.4 437.5 M337.1 406.3 L337.1 437.5 M371.5 406.3 L371.5 437.5 M402.6 406.3 L402.6 437.5 M428.3 406.3 L428.3 437.5 M443.1 406.3 L443.1 425.1 M443.1 425.1 L443.1 437.5 M286.6 437.5 L312.4 437.5 M312.8 437.5 L337.1 437.5 M337.1 437.5 L338.3 437.5 M338.3 437.5 L371.5 437.5 M371.5 437.5 L373.6 437.5 M373.6 437.5 L401.7 437.5 M401.7 437.5 L402.6 437.5 M402.6 437.5 L428.3 437.5 M428.3 437.5 L443.1 437.5 M312.8 437.5 L312.8 469.5 M338.3 437.5 L338.3 469.5 M373.6 437.5 L373.6 469.5 M401.7 437.5 L401.7 469.5 M443.1 437.5 L443.1 450.9 M443.1 450.9 L443.1 469.5 M286.6 469.5 L312.8 469.5 M312.8 469.5 L325.1 469.5 M325.1 469.5 L338.3 469.5 M338.3 469.5 L363.2 469.5 M363.2 469.5 L373.6 469.5 M373.6 469.5 L396.5 469.5 M396.5 469.5 L401.7 469.5 M401.7 469.5 L422.8 469.5 M422.8 469.5 L443.1 469.5 M325.1 469.5 L325.1 499.1 M363.2 469.5 L363.2 499.1 M396.5 469.5 L396.5 499.1 M422.8 469.5 L422.8 499.1 M443.1 469.5 L443.1 487.5 M443.1 487.5 L443.1 499.1 M286.6 499.1 L323.0 499.1 M323.0 499.1 L325.1 499.1 M325.1 499.1 L360.6 499.1 M360.6 499.1 L363.2 499.1 M363.2 499.1 L396.5 499.1 M396.5 499.1 L398.5 499.1 M398.5 499.1 L422.8 499.1 M422.8 499.1 L426.6 499.1 M426.6 499.1 L443.1 499.1 M323.0 499.1 L323.0 534.9 M360.6 499.1 L360.6 534.9 M398.5 499.1 L398.5 534.9 M426.6 499.1 L426.6 534.9 M443.1 499.1 L443.1 512.8 M443.1 512.8 L443.1 534.9 M286.6 534.9 L317.4 534.9 M317.4 534.9 L323.0 534.9 M323.0 534.9 L357.5 534.9 M357.5 534.9 L360.6 534.9 M360.6 534.9 L391.3 534.9 M391.3 534.9 L398.5 534.9 M398.5 534.9 L415.3 534.9 M415.3 534.9 L426.6 534.9 M426.6 534.9 L443.1 534.9 M317.4 534.9 L317.4 570.7 M357.5 534.9 L357.5 570.7 M391.3 534.9 L391.3 570.7 M415.3 534.9 L415.3 570.7 M443.1 534.9 L443.1 543.7 M443.1 543.7 L443.1 570.1 M443.1 570.1 L443.1 570.7 M286.6 570.7 L317.4 570.7 M317.4 570.7 L323.5 570.7 M323.5 570.7 L357.5 570.7 M357.5 570.7 L364.4 570.7 M364.4 570.7 L391.3 570.7 M391.3 570.7 L394.9 570.7 M394.9 570.7 L415.3 570.7 M415.3 570.7 L429.2 570.7 M429.2 570.7 L443.1 570.7 M323.5 570.7 L323.5 595.8 M364.4 570.7 L364.4 595.8 M394.9 570.7 L394.9 595.8 M429.2 570.7 L429.2 595.8 M443.1 570.7 L443.1 595.8 M286.6 595.8 L323.5 595.8 M323.5 595.8 L326.0 595.8 M326.0 595.8 L361.5 595.8 M361.5 595.8 L364.4 595.8 M364.4 595.8 L393.9 595.8 M393.9 595.8 L394.9 595.8 M394.9 595.8 L421.2 595.8 M421.2 595.8 L429.2 595.8 M429.2 595.8 L443.1 595.8 M326.0 595.8 L326.0 625.6 M361.5 595.8 L361.5 625.6 M393.9 595.8 L393.9 625.6 M421.2 595.8 L421.2 625.6 M443.1 595.8 L443.1 604.5 M443.1 604.5 L443.1 625.6 M286.6 625.6 L310.5 625.6 M318.6 625.6 L326.0 625.6 M326.2 625.6 L361.5 625.6 M361.5 625.6 L365.4 625.6 M365.4 625.6 L393.9 625.6 M393.9 625.6 L406.6 625.6 M406.6 625.6 L421.2 625.6 M421.2 625.6 L443.1 625.6 M326.2 625.6 L326.2 649.0 M365.4 625.6 L365.4 652.0 M406.6 625.6 L406.6 648.3 M443.1 625.6 L443.1 639.8 M475.0 238.9 L475.0 262.1 M443.1 262.1 L475.0 262.1 M475.0 262.1 L477.8 262.1 M477.8 262.1 L496.7 262.1 M477.8 262.1 L477.8 287.4 M443.1 287.4 L477.8 287.4 M477.8 287.4 L479.3 287.4 M479.3 287.4 L500.8 287.4 M479.3 287.4 L479.3 323.3 M505.9 317.3 L505.9 323.3 M443.1 323.3 L472.7 323.3 M472.7 323.3 L479.3 323.3 M479.3 323.3 L505.9 323.3 M505.9 323.3 L507.0 323.3 M472.7 323.3 L472.7 355.4 M443.1 355.4 L469.5 355.4 M469.5 355.4 L472.7 355.4 M472.7 355.4 L506.0 355.4 M506.0 355.4 L512.6 355.4 M469.5 355.4 L469.5 387.6 M506.0 355.4 L506.0 387.6 M443.1 387.6 L469.5 387.6 M469.5 387.6 L471.9 387.6 M471.9 387.6 L506.0 387.6 M506.0 387.6 L506.5 387.6 M506.5 387.6 L518.5 387.6 M471.9 387.6 L471.9 425.1 M506.5 387.6 L506.5 425.1 M443.1 425.1 L468.6 425.1 M468.6 425.1 L471.9 425.1 M471.9 425.1 L506.5 425.1 M506.5 425.1 L507.8 425.1 M507.8 425.1 L525.9 425.1 M468.6 425.1 L468.6 450.9 M507.8 425.1 L507.8 450.9 M443.1 450.9 L468.6 450.9 M468.6 450.9 L470.9 450.9 M470.9 450.9 L507.8 450.9 M507.8 450.9 L512.2 450.9 M512.2 450.9 L531.4 450.9 M470.9 450.9 L470.9 487.5 M512.2 450.9 L512.2 487.5 M443.1 487.5 L470.9 487.5 M470.9 487.5 L477.7 487.5 M477.7 487.5 L502.7 487.5 M502.7 487.5 L512.2 487.5 M512.2 487.5 L537.4 487.5 M477.7 487.5 L477.7 512.8 M502.7 487.5 L502.7 512.8 M443.1 512.8 L474.7 512.8 M474.7 512.8 L477.7 512.8 M477.7 512.8 L502.7 512.8 M502.7 512.8 L508.8 512.8 M508.8 512.8 L532.3 512.8 M474.7 512.8 L474.7 543.7 M508.8 512.8 L508.8 543.7 M443.1 543.7 L469.3 543.7 M469.3 543.7 L474.7 543.7 M474.7 543.7 L502.8 543.7 M502.8 543.7 L508.8 543.7 M508.8 543.7 L528.4 543.7 M528.4 543.7 L532.7 543.7 M469.3 543.7 L469.3 570.1 M502.8 543.7 L502.8 570.1 M528.4 543.7 L528.4 570.1 M443.1 570.1 L467.1 570.1 M467.1 570.1 L469.3 570.1 M469.3 570.1 L498.8 570.1 M498.8 570.1 L502.8 570.1 M502.8 570.1 L527.4 570.1 M527.4 570.1 L528.4 570.1 M528.4 570.1 L530.4 570.1 M467.1 570.1 L467.1 604.5 M498.8 570.1 L498.8 604.5 M527.4 570.1 L527.4 604.5 M443.1 604.5 L467.1 604.5 M467.1 604.5 L470.4 604.5 M470.4 604.5 L498.8 604.5 M498.8 604.5 L505.2 604.5 M505.2 604.5 L527.4 604.5 M527.4 604.5 L537.0 604.5 M470.4 604.5 L470.4 640.3 M505.2 604.5 L505.2 640.3 M445.1 640.3 L448.4 640.3 M451.3 640.3 L470.4 640.3 M470.4 640.3 L473.3 640.3 M473.3 640.3 L500.3 640.3 M500.3 640.3 L505.2 640.3 M505.2 640.3 L537.0 640.3 M473.3 640.3 L473.3 667.2 M500.3 640.3 L500.3 673.0 M479.8 673.0 L500.3 673.0 M500.3 673.0 L511.5 673.0 M511.5 673.0 L537.0 673.0 M511.5 673.0 L511.5 694.6 M515.3 703.2 L517.9 703.2 M517.9 703.2 L537.0 703.2 M517.9 703.2 L517.9 709.3" fill="none" stroke="#5b6163" stroke-width="1" />
<polygon points="300,59 302.7,57.3 306,55.4 308.3,56.7 310.5,57.5 313.5,57.9 314.7,60.5 316,63.2 317.2,66.5 319.4,68.4 321.1,71.1 323.3,72.7 321.3,76 319.6,78.8 320,81.7 321.3,83.9 321.5,87.2 321.8,89.7 322.6,92 323.3,94.8 320.9,93.6 319.8,90.9 318,87.6 316,85 314.9,81.8 314.5,79.4 314.5,77.4 313.6,73.6 313.5,71.4 312.4,68.7 311.6,66.1 309.8,62.8 305.9,63.2 302.4,62.8" fill="#27496c"/>
<polygon points="368.6,261.4 371.3,260.3 373.5,259 376.8,260.7 378.9,262.1 382,263.9 385.1,264.5 387.2,265.7 390,266 391.9,268.9 392.5,270.8 394.1,273 395,276.1 396.4,279.1 398,281 396,282 394.3,279.6 392.7,277.6 390.8,276.3 389,273.7 388,272 384.9,271.2 382,271 380,269.2 378.5,267.3 376.8,265.1 374.7,263.9 372,262.7" fill="#27496c"/>
<polygon points="446.5,363.6 450,366 448.6,367.6 447.4,370.1 446.8,372.7 445.2,374.6 444,377 441.3,376 439,376 440,373.7 441.6,371 443.8,368.9 444.7,366.5" fill="#27496c"/>
<polygon points="613,286 613.7,289 614.8,291.3 615.6,293.4 617.3,291.6 618.4,289 620.5,287 622.2,290.3 623,293.4 625.4,293.5 628,294.7 626.1,296.3 624.3,298.9 621.7,300.8 619.6,303.2 618.6,305.7 616.8,308 614.7,309.2 612.4,310.4 610.5,312.1 608,313 606.4,310.1 604.5,308 606.8,306.2 609.9,305.1 611.9,303 612.2,298.9 613,296 613.6,293.4 613,290.9 613.1,288.6" fill="#27496c"/>
<polygon points="526.6,503 529.6,504.8 531.9,505.5 534,506.8 533,509.4 533.3,512.5 531.5,514.8 531.5,518 531.2,521.9 530,525 533.2,525.2 536.4,525 534.2,527.9 532.7,531.5 532.9,535 532.7,537.6 530.2,535.3 527.8,532.7 527.4,529.3 527.6,526.6 526.6,522.9 526.6,520.1 527.3,516.9 527.8,513 528,510.8 527,507.7 526.7,505.9" fill="#27496c"/>
<polygon points="424.3,413 426.8,417 426.9,420.2 428,424 430.3,427.6 431.7,430.5 430.5,434 428,431.7 427.1,428.7 425.6,425.6 425.8,422.8 425.2,420 425.3,418.2 424.4,416.1" fill="#27496c"/>
<polygon points="540.3,601.6 541.2,604.1 542.6,606 543.4,608.4 544,611.4 546.3,611.3 549.9,611.7 552.7,611.4 553.9,608.4 555.5,605.2 556.4,602.8 558.3,604 557,607 556.4,610 559.6,609.6 563.7,610 563.7,613.9 560.3,614.2 557.3,614.5 554.7,614.5 551.4,615 549.1,617.5 547.7,620 545.1,618.4 541.6,617.6 541.8,614.5 541.6,612 541,609 541.2,604.8" fill="#27496c"/>
<polygon points="59,685.3 60.7,688.5 61.7,691.6 62.8,694 64.1,696.7 65.5,698.9 67.7,701 70,702.5 73.3,702.9 76.5,704 78.8,705 81.5,706.5 85,707.5 83.7,710 80.4,709.4 76.6,709 73.9,708.7 71.5,708 67.6,706.1 65.3,705 64,702.3 61.8,700 60.3,697.6 58.5,694.6 57,691.5 57.7,688.8" fill="#27496c"/>
<polygon points="145.3,696.4 148.2,695.3 151.5,695 153.2,698.5 153.9,701 155,703.8 153.8,706.9 151.5,710 148.7,711.2 146.5,712 144,713.6 141.8,711.6 140,710 142.1,707 145.3,705 146.7,702.2 147.8,700" fill="#27496c"/>
<polygon points="43,682 47,681 48.6,683.4 51,686 50,689 46,688 44.4,684.6" fill="#27496c"/>
<polygon points="784,745 787.6,744.3 790,744 789.9,746.6 791.4,749.9 791.5,751.9 792,755 791.6,757.8 790.8,760.1 790.3,762.6 790,765.5 789.2,767.8 789,770 785,768 784.6,764.7 784.5,762.1 783.4,758.5 783,756 783.3,753.4 783.5,750.2 783.6,747.3" fill="#27496c"/>
<polygon points="30,683 34,682 34.5,684.4 36,688 33,689 31.8,685.9" fill="#27496c"/>
<polygon points="781,792 784.5,791.7 787,790.1 790,790 791.3,792.5 793,796 791.2,796.7 788.4,797.4 786,799 784.3,796.9 782.2,794.2" fill="#27496c"/>
<ellipse cx="129.3" cy="660" rx="7.5" ry="8.5" fill="#27496c"/>
<polyline points="181.7,6 187.1,11.8 191.6,17 193.9,21.9 196.1,27.3 197.7,32 199.7,37.6 201,44 201.2,49.4 200.8,54.2 200.7,59.2 201.3,63.6 201.1,68.6 201,74 200.7,80.1 200.8,85.4 200.2,91 198.4,96.4 196.5,101 192.6,105.6 189,111 188.5,116.9 187.5,122.4 186.7,128 184.7,132.9 183.8,138 181.7,143 178.9,147.4 176.6,152.9 174.3,157.6 171.7,162.9 167.8,167.5 164.8,171.8 162,177 159.7,181.7 156.6,186.3 154.3,191 152.2,195.4 149.7,200 145.3,202 145.6,208.6 146.5,214.6 150.7,217.2 155.3,219.9 160,223" fill="none" stroke="#886c0c" stroke-width="1"/>
<polyline points="240.8,6 236.3,10.9 232.9,15 228.5,19.7 228.7,26 228.4,32.2 227.7,38.2 228,44 227.1,49 226,54 225,59 220.6,61.7 216,63.7 211,66.5 206.2,68.3 201,70" fill="none" stroke="#886c0c" stroke-width="1"/>
<polyline points="240.8,6 244.6,11.4 248,17 251.2,21.2 254.7,25.3 258,29.5 260.4,34.6 261.6,39.5 264,44 264,51.7 268.4,55.5 272.9,59 279.9,59.9 287.6,60 293.5,56.7 300,54 306.2,55.6 312,56.6 316.3,59.5 321.2,62.2 325.6,64.8 330.3,67.5 334.6,70 339,73.5 342.6,76.4 346.4,79.7 350.5,82.2 355.1,85.1 359,88.7 363.5,93 368,96.7 372.6,100.2 376.8,104.4 381.4,108.4 386.2,112.3 391.5,116.8 396,120.7 400.3,125.7 404.8,130.5" fill="none" stroke="#886c0c" stroke-width="1"/>
<polyline points="174.9,222 181.2,218.1 187,214.6 193.7,212.5 200,209.7 204.9,206.8 210,203.5 215,200 219.2,194.4 223.6,189.6 229.4,187.2 235.5,183.7 240.8,181 246,179.5 252.2,177.6 257.3,175.8 263.1,174.1 268,172.4 273.2,171.6 278,170 282.6,168.8 287.9,167.1 292.1,166.4 297.5,165 303,163.7 308.2,163.2 313.8,162 318.4,160.8 323.8,159.3 329.1,159.1 334.6,157.6 339.1,156.1 344.2,153.8 349.3,152.5 354.4,150.7 359,149 363.6,148 369.2,147.5 373.7,146.2 379.1,144.9 383.9,144 389.3,142 394.1,139.2 400,136.4 404.8,134" fill="none" stroke="#886c0c" stroke-width="1"/>
<polyline points="472.6,6 472,12.6 471.1,18 471,24.6 469.5,30.2 468.4,35.3 466.7,41 465,46.8 459,51.5 452.9,55.4 447.5,56.9 441.5,58.7 435.6,60 432.9,64.9 430.6,70.2 428,76 425.4,81.8 423.4,86.3 420.8,92 418.5,96.5 415.6,101.8 413.4,106 410.9,111.2 408.5,115.8 407.6,123 406,130.5" fill="none" stroke="#886c0c" stroke-width="1"/>
<polyline points="395,99 399.6,100.1 404.9,102.2 409.9,102.8 415.4,104.3 420.1,106.2 425.2,107.5 430.7,108.4 432.8,113.3 434.4,118.4 436.8,123 436.3,128.4 436.6,132.7 436.8,138 435.1,142.7 432.4,147.8 430.7,152.7 424.5,156.6 418.4,161 412.3,162.2 407.1,163.8 401,165 396.3,164.2 391.2,162.4 385.8,161.2 381.4,160 377.3,156 373.4,152 369,147.8 366.9,140.6 365.4,134 367.4,128.7 369.8,123.5 371.6,118 374.9,113.5 378.2,110.3 381.4,106 385.7,104 390.1,100.8 395,99" fill="none" stroke="#886c0c" stroke-width="1"/>
<polyline points="406,134 411.8,133.1 416.6,132.8 422.6,132.6 428,131.8 433.8,132.5 440.3,132.3 446.2,132.6 452.2,132.7 457.8,133 462.4,134.8 467.2,136 472.3,137.9 477.4,140.3 482.4,141.6 487.1,139.8 492.6,137.9 497,136.7 502.1,136.6 506.7,136.7 512.4,136.7 517,136.7 523.2,140.8 529.4,145 533.4,148.2 538.4,150.4 543,153.7 547,156 551.6,158.9 556.9,158.9 562.6,157.6 568.8,157.6 573.9,159.2 578.3,159.9 583.6,161 589.9,160.2 596,158.9 600.6,157 606,154.6 610.6,152.2 615.6,150 623,147.8 628.4,148.1 634.1,149.1 640,150 645.5,147.9 649.7,146.6 655.1,144.4 660,142.9 665.2,139.7 669.6,135.9 674.7,133 679.6,130.5 684.7,128.2 690,125.6 694.9,123.1 699.2,120.8 704.2,117.7 709.5,115.4 714,113 718.8,110.1 723.4,107 728,104.2 731.7,101.4 736.3,98.4 741,96 745.6,92.9 749.7,91 754,88.1 759.2,84.8 763.4,82.5 769.4,80.9 774.1,79.9 779.8,77.7 785.6,76.4 791.1,74.8 795.9,73.8 801,72.8 806,71.4" fill="none" stroke="#886c0c" stroke-width="1"/>
<polyline points="404.8,134 404.6,139.8 403.7,145.4 403.1,151.5 402.4,157.6 401,162.7 400.3,167.6 398.7,172.4 398.6,178 397.7,183 397.5,189.2 396.5,194.8 396,200 397.3,207.4 398.5,214.6 398.6,221 397.5,227.3 397,233 397,239 396.7,244.1 395.7,248.9 395.4,254.1 394.7,258.9 394.8,264 395.6,270.3 395.3,276.5 395.7,282.2 396,288.5 397,294.3 397.4,300.7 398.3,306.9 399.7,313 400.3,319.2 400.7,324.9 401.5,330.5 401.3,336.3 402,342.7 402.6,348.9 404.1,355.9 404.6,362 405.1,367 405.2,371.9 405.4,376.9 405.9,382 405.1,388.4 404.6,394.8 406.4,399.9 408.4,404.5 410.1,409.3 412,414.5 414.5,420.3 417.1,425.7 419.2,431.1 421.9,436.7 424.3,442.1 426.6,447.3 429.7,453.6 431.7,458.8 433.7,462.9 436.2,467.3 439,472 437.4,476.9 435,483.1 433,488 431,493.3 429.1,497.5 426.1,502.7 424.3,508 420.9,513.2 418.6,518.3 415.6,522.8 412.5,527.5 409.6,532.7 406.2,536.7 402.4,542 398.8,546.2 395.9,550.4 392.3,554.9 388.3,558.9 383.9,562.4 379.3,566.5 375.7,570.2 371.4,574.5 366.4,577.5 361.7,581.2 356.7,584 351.3,587.4 346.4,590.6 342.1,593.1 337,596.7 331,597.6 325.2,598.5 319.7,600 314.6,603.7 309.9,606.5 308.1,610.9 306,616 305.1,621.1 305,626" fill="none" stroke="#886c0c" stroke-width="1"/>
<polyline points="406,134 410.6,138.4 414.4,143.5 418.4,147.8 421.9,151.7 426.1,156.4 429.5,160.3 433,165 435.9,170.6 440.1,175.9 443,182 446.8,186.1 450.7,190.9 454.2,195.9 457.8,200 466,204.8 469.4,209.3 472.1,213 475.5,217.4 478.5,222 481.7,227.5 485.9,233 491.8,234.9 497.2,237.1 503,239 508.7,237.1 514,235.6" fill="none" stroke="#886c0c" stroke-width="1"/>
<polyline points="588.5,6 588.4,11.1 587.4,16.4 587.3,22 589.3,26.9 591.1,31.9 593.4,37 598.6,41.5 604.5,46.8 604.1,53.9 604.5,61.6 602.6,66.2 601.4,72 599.6,76.4 600.9,81.9 602.4,87.5 604.5,93.6 600.9,98.1 598.1,101.5 594.3,105.2 591,109.6 593.3,116.3 596,123 599.9,127 603.7,130.9 608,135.5 611.3,142.7 614.4,149" fill="none" stroke="#886c0c" stroke-width="1"/>
<polyline points="593.4,160 589.6,164.9 584.9,170.3 581,174.9 578.1,179.3 574.1,182.8 570.8,187 568.3,191.7 564.3,195.4 561.4,200 556.7,204.9 552.4,209.7 547.9,213.9 543,216.7 538.1,220.8 532.7,224.5 527.7,227.2 522.9,229.8 518.9,232.8 514,235.6" fill="none" stroke="#886c0c" stroke-width="1"/>
<polyline points="660,143 663.8,147.2 667.9,150.6 672,155 673.5,161.1 674.8,167.5 679.6,170.4 684.6,172.4 685.1,178.3 685.9,184.7 692.5,187 699.4,189.6 705.1,189.2 711.4,188.6 716.7,188.4 718,194.1 720,200 727.6,204.8 732.3,208.6 737.8,212.4 742.4,215.9 746.2,219.2 750.4,223.8 754.7,227 757.4,233.9 759.6,240.5 761,245.3 762.3,251.3 763.7,255.8 764.6,261.4 766.3,266.4 768.2,271.6 770,276 772.8,279.7 777.1,283.6 780,287.6 782.8,292 786.8,296.2 790,300 794,304.3 798.3,309.1 801.6,313.7 806,318" fill="none" stroke="#886c0c" stroke-width="1"/>
<polyline points="716.7,188.4 722.5,187 728.7,185.7 734.6,184.8 741,183.5 745.8,182.7 751.1,181.5 756.2,179.5 761.3,178.2 765.9,176.8 770.8,176 776.8,174.9 782.3,174.6 787.2,173.2 793,172.4 799.1,174.1 806,176" fill="none" stroke="#886c0c" stroke-width="1"/>
<polyline points="503,239 500.7,243.8 498.1,248.7 495.8,254 493.8,259.3 492,264.3 489.4,268.5 487.7,273.9 485.9,278.7 483,282.6 480.5,287 477.1,291.2 474.6,295.6 471.6,299.7 468.7,303.8 466,308 463.1,312.4 459.9,317.9 457,321.8 454.5,327 451.4,331.6 446.9,335.1 442.4,339 438.3,341.8 433,345.1 428.6,349.3 424.3,352.6 421.2,357.3 418.2,362.4 414.5,367 411.4,371.8 408.9,376.9 405.9,382" fill="none" stroke="#886c0c" stroke-width="1"/>
<polyline points="521.6,238 525,242 528.9,245.6 532.7,249 534.2,254.8 536.4,259.6 538.4,265 540,271 540.5,276.6 542.1,282 543.1,287.6 543.8,293.4 546.8,298.4 550.9,303.3 553.9,308 557,313 561.5,317.7 565.3,323.2 569.7,328 572.4,333.2 574.6,337.5 577,342.7 579.7,347.1 582,352" fill="none" stroke="#886c0c" stroke-width="1"/>
<polyline points="405.9,381 408.6,376 411.8,370.7 414.5,366 420,365.7 426,365.4 432,365.3 437.1,364.8 443.1,364.1 449,363.6 454.8,363.3 461.1,363 466.8,363.1 472.1,362.9 478.5,362.4 484,361.8 488.8,360.2 494,359.3 499.5,358.1 504.8,357 510.5,356 515.7,355.3 522,353.9 526.9,353.8 532.7,352.6 538.3,352.3 544.4,351.3 551,350.9 557,350 562,351 567.3,352.6 571.9,354.6 577,356.2 582,357.5 586.9,357.4 592.4,356.7 596.8,356.3 601.5,355.2 607,355 611.9,356.6 616.7,358.3 622.2,359 626.5,361.1 631.6,362.4 636.6,362.9 642.3,363.9 646.9,364.6 652.5,364.6 657.9,366.1 663.1,366 668.5,367 674.1,368 679.2,368.2 684.9,368.3 690.4,369.1 695.5,369.5 701.4,369.9 706.6,370.7 712.2,371.2 717.8,372 723.7,372.5 730.2,372.7 735.9,372.6 742.4,373.5 748,372.1 753.4,370.8 759.6,369.8 764.9,366.5 770,362.4 775,359.5 780.4,357.7 785.1,355 790,352 795.7,350.2 800.6,348.4 806,346" fill="none" stroke="#886c0c" stroke-width="1"/>
<polyline points="401,365 396.4,369.8 393.2,373.9 390.4,378.6 388.4,383.9 386,389" fill="none" stroke="#886c0c" stroke-width="1"/>
<polyline points="582,350 584.9,345.5 588.4,341.2 591.1,337.3 594.6,333 599.9,330.7 604.8,328.1 608.8,325.8 614.1,322.7 619,320.5 624.3,317.5 629.1,315.8 634,312.6 638.5,310.2 643.9,308 649.2,304.6 653.6,301.8 658.5,298.6 663.9,295.2 668.5,292 673.4,290 678.4,287.3 683,285.6 688,283.6 692.9,282 698.4,279.7 702.7,277.9 708,276 713.2,272.6 717.7,269.8 722.7,266 725.6,261.5 727.6,256.5 732.4,254.8 737.1,252.2 742.1,249.7 747,247.9 752.9,244.2 759.6,240.5 765.2,237.9 770,235.6 774.7,233.7 780.8,232 785.3,229.4 790.4,228.3 795.3,225.9 800.8,223.9 806,222" fill="none" stroke="#886c0c" stroke-width="1"/>
<polyline points="740,254 741.5,259.3 742.4,263.9 747.6,267.6 752.2,270.7 757,273.7 763.9,277.8 770,281 774.2,283.6 779.1,286.2 783.6,288.4 788.4,290.4 792.2,292.8 797.4,295.3 802,297.4 806,300" fill="none" stroke="#886c0c" stroke-width="1"/>
<polyline points="583.5,294.7 580.7,299.4 578,303.8 575,308 574.1,312.7 573.9,317.8 573.6,323 572.5,328 574,333.3 575.5,338.3 577.4,342.7" fill="none" stroke="#886c0c" stroke-width="1"/>
<polyline points="582,341 590,344 593,351 590,359 582,362 574,359 571,351 574,344 582,341" fill="none" stroke="#886c0c" stroke-width="1"/>
<polyline points="582,360 586.2,364.4 590.1,367.7 594.6,372 597.3,376.1 600.8,380 603.3,384.5 605.4,390 607,394.4 609.4,399.7 613.1,403.8 615.9,407.7 619.6,411.8 622.9,416.1 626.7,420.6 630.2,427.3 634,433 632.8,438.4 631.7,443.2 631.2,448.8 630.3,453.9 630.4,460 629.7,466.4 629.1,472.6 629,478.5 629.8,484.1 630.3,490.8 630.5,495.7 630.8,501.6 631.6,508 633.9,512.5 635.8,518.1 637,522.9 639,527.8 641.2,533.6 643.8,540 645.1,544.7 646.7,549.4 648.8,555 650,559.7 651.7,564.8 652.5,571.3 654.2,576.7 654.9,581.9 656.5,586.9 657.9,591.4 659,596.5 660.8,601.1 662.3,606.5 665.6,612.2 668.5,617.9 672,623.7 675,628.8 679,634.1 682,638.5 685.8,641.8 689,645.8 693.5,650 697.2,653.6 700.2,657.2 704.3,660.7 706.9,666.4 709.9,672.3 713,678 716.2,683.4 719,687.8 720.8,692.9 722.5,697.2 724,702.6 727.5,707 730.1,712.6 733.5,717 736.4,722 739,727.7 741.6,734.4 743.7,740 744.5,745.9 745.9,751.2 747.1,756.3 747.6,761.7 749.1,767.4 750.1,773 752.2,778.8 753.2,784.4 754.8,790.5 755.9,796 756.4,801 757,806" fill="none" stroke="#886c0c" stroke-width="1"/>
<polyline points="580,362 575.1,364.1 570,367 565.4,371.5 560.4,375.5 556,380 553.7,385.9 551.7,391.4 550,397 546.7,401.1 543.9,405.6 541,410.2 537.6,414.5 533.5,419.8 529.7,423.7 525.3,429 521.9,433.2 518.6,437.8 515.3,442.5 511.2,446.7 508,451 503,453.5 498.3,456.2 493.6,458.2 488.4,460.7 483.4,463.7 477.5,465.6 472.5,468.5 467.2,470.2 461.3,472.4 456.2,472.6 450,472 444.8,471.7 439,472" fill="none" stroke="#886c0c" stroke-width="1"/>
<polyline points="626.7,420.6 631.8,424.5 636.8,428.1 641.4,431.7 644.5,435.8 648.1,440.9 651.3,445 656.5,447.7 661.6,450.1 665.7,451.8 671.2,453.7 675.9,456.8 680.8,458.8 686.1,460 691,461.6 695.6,462 700.4,463.5 705.7,464.6 710.4,466 715.4,467 720.7,467.9 726.6,468.9 731.7,468.9 737.5,469.8 742.4,471 746.9,471.7 752.7,473.3 756.9,474.9 761.9,475.5 767,477 772.1,479 776.8,479.7 782.3,481.4 786.6,482.9 791.7,484.7 796.6,487 801.3,490.1 806,493" fill="none" stroke="#886c0c" stroke-width="1"/>
<polyline points="806,530 804.6,535.2 802.9,540 802.5,546.2 802.5,551.9 801.9,558 801.6,564.6 799.2,569.1 796.7,574 794,579.4 791.3,584.3 788.8,589.4 786.8,594 786.6,598.9 786.2,604.2 785.9,609.1 785.6,614 786.6,620 787,626.4 787.7,632.6 788,638.5 787.1,643.9 785.6,648.4 787.6,652.8 789.4,658.2 790.8,662.9 793,668 795.4,673.3 798.2,678 800.1,682.5 802.9,687.8 804.6,693.1 806,697.6" fill="none" stroke="#886c0c" stroke-width="1"/>
<polyline points="784,647 790,650 791,656 787,661 781,661 778,655 780,649 784,647" fill="none" stroke="#886c0c" stroke-width="1"/>
<polyline points="300,631 305,626 312.3,622.5 318.6,623.8 324.6,625 329.7,626 334.9,626.5 339.1,627.3 344.3,628.7 349,630.4 353.7,632.4 359,633.6 363.6,635.7 369,638.5 375.2,637.7 381.3,637.3 385,633.6 388.7,630 394.5,626.9 400.5,623.9 405.9,621 411.4,620.3 416.8,619.9 422.4,619.3 428,618.8 433.5,617.5 439.2,617 445.3,616 450.6,618.1 455,619.3 460,621 466.1,618.6 471.6,617 477.3,615 482.6,615.3 488.4,616.1 493.4,616.7 498.7,617.5 504.6,617.6 511.2,616.2 517,615 523.1,617.8 529.3,621 534.5,622.5 538.7,624.1 544,626 549.3,628.5 555.3,630.5 561.3,632.4 566.6,633.9 571,636.1 575.6,638.3 581,639.8 586.9,639.5 591.7,639.5 597.3,638.9 603,638.5 608,639.2 612.5,640.3 617.4,640.8 623.1,641 627.8,642 633.8,642.2 640.2,643.8 645.9,644.2 652.4,644.7 658.1,646.3 662.6,647.2 668.8,649.2 673.5,650.1 679.7,652 684.6,653 689.3,655.2 694.6,656.9 699.4,659 704.3,660.7 710.3,660.5 715.7,661.4 721.4,661.3 727.8,661.6 732.7,661.4 738.8,662 743.5,660.7 748.9,660.3 754,658.6 758.5,658 765,656.7 772,656.1 778,654.5" fill="none" stroke="#886c0c" stroke-width="1"/>
<polyline points="300,631 298,633.5 292.9,636.1 287.4,637.6 282,640 276.8,641.4 271.3,642.1 266.1,643.3 260.5,644 254,643.2 247,642.7 240.8,642 235.2,643.5 228.8,645.2 222.8,646.7 217,648 211,650.3 205.1,652.7 199.4,655 192.5,655.9 185.6,656 178.8,653.5 171.8,651 166.4,647.9 160,645 157.6,648 152,646.6 146.3,645.2 141,643.6 135.6,642.3 130.5,641 125.1,641.3 119.5,641.5 114.7,640.6 109.1,641 103.4,641 97,641.9 90.9,643.7 85,644.7 79.2,644.1 72.5,643.6 66.5,643.4 60.9,644.7 55.2,646.7 49.3,648 44.7,649.1 39.5,651.1 34,652.8 29.2,654 24.6,655.8 18.6,657.2 12.2,658.8 6,660.7" fill="none" stroke="#886c0c" stroke-width="1"/>
<polyline points="85,644.7 88.1,650.2 90.8,655.3 93.6,660.7 98.3,664.1 103.8,667.3 108.4,670.5 114.9,671.7 120.9,672.5 127.2,673.5 133,674 139.6,677.8 145.3,681.6 150.4,682.5 154.6,683.8 160,685 164.4,680.9 168.4,676.9 172.4,673 178.2,667.8 183.5,663 186,656" fill="none" stroke="#886c0c" stroke-width="1"/>
<polyline points="256.5,474.8 254.8,479.3 252.9,483.9 250.2,489.2 248.6,493.6 246.7,498 244.5,502.6 242,507.2 239.2,510.9 236.8,515.5 235.7,521.6 234.3,527.8 230.4,532.4 226.9,536.6 223.7,540.8 220.1,545.8 217,550 216.4,555 215.9,559.7 216.1,564.8 215.1,569.6 215.2,574.9 214.6,580 212.3,585 210.1,590.1 207.6,595.1 205.3,600 203.2,604.9 201.2,610.8 199.4,615.8 196.7,621.6 194.2,627.1 191.5,633.5 188.5,640.1 185.6,647 184.6,656" fill="none" stroke="#886c0c" stroke-width="1"/>
<polyline points="6,460.8 11.1,461.6 16.5,461.3 21.6,462.2 26.5,462.7 31.4,463.7 37,463.7 42.5,465 47.8,465 53.2,465.9 57.9,467.5 63.4,468.3 68.1,468.9 73.9,469.9 79.2,470.6 84,472.4 88.3,474 93.8,474.5 98.5,476 104.7,475.3 110.4,474.8 116.8,474.1 123,473.6 129.4,474.5 135.4,474.9 141.5,475.2 147.8,476 153.9,477.2 159.7,477.4 166.7,478.9 172.4,479.8 178.3,479.2 183.3,478.3 189.1,476.9 194.2,475.4 200,474.8 206.9,475.7 214.6,475.6 220.2,475.3 224.9,475.5 230.6,475 235.5,474.3 240.5,474.7 246.2,473.9 251.6,474.3 256.5,473.6 261.8,472.8 266.8,471.6 271,469.6 276.4,468.7 281,467.4 285.7,463.7 289.4,458.7 294.1,455.1 298.4,451 301.9,446.1 306.1,442.7 309.8,437.6 313.8,433.2 318,429 322.4,425.1 326.2,420 329.5,415.5 334.1,411 337.8,407 342.2,403.9 347.6,401 354.1,400.3 360.5,399.5 367,398.5 371.7,396.1 376.6,393.1 382,389.9 388.6,387.1 394.8,383.7 400.7,382.5 405.9,381" fill="none" stroke="#886c0c" stroke-width="1"/>
<polyline points="163.8,230.6 164.8,236.4 165.6,242.3 166.7,247.6 167.5,253.2 168.7,259 169.2,264.5 170.2,270.8 171.4,277 172.4,282.9 173.6,288.5 173.8,294.2 172.7,301.1 172.9,306.8 172.4,313 173.3,318.1 173.6,323 174.6,328.3 175.6,332.8 176.2,337.7 177.3,342.7 178.4,349 180.7,355.9 182,362 182.3,368.1 182.7,372.8 182.5,378.7 183.4,384 183.5,390 181.6,394.7 179.8,399.7 177.8,404.3 174.9,408.6 172.7,412.6 169.7,417.9 167.5,421.9 165.8,426.7 164,432.2 163.1,436.7 161.3,441.6 160,446.6 158.9,451.4 157.5,456.3 155.9,461.6 155,466 153,470.8 149.7,475.6 147.8,481 145.1,486.6 142.6,492.5 140.1,497.7 137.9,503 137.1,507.9 135.2,513.1 133.9,517.5 132.7,523.3 131.6,527.9 130.5,532.7 130,537.9 130.3,543.2 129.7,548.9 129.3,554.1 129.2,559.8 129.3,564.6 129.6,571.1 129,577 129,582.6 129.3,589 128.4,594.3 127.2,599.2 126.3,603.7 125.6,609 125.9,615.1 126.8,622.1 126.8,628.7 127.9,633.5 129,638.9 130.5,643.4 132.5,649.5 134,655.8 133.7,662 133.2,668 133,674" fill="none" stroke="#886c0c" stroke-width="1"/>
<polyline points="6,256.5 11.4,256.7 16.5,256 21.6,255.9 26.3,255.7 32.1,255.5 37,255 42.7,253.8 47.3,252.5 53.5,251.4 58.6,249.8 64,249 69.3,247.3 74.8,245 80.6,243.4 86.2,241.7 91.5,240.5 96.3,238.7 101.2,236.9 105.4,235.7 110.8,234 116.3,231.8 122.1,231.1 127.5,229.4 132.4,227.5 138,225.7 143.4,224.7 149.4,224.2 154.5,223.4 160,223 167.4,222.9 174.9,222" fill="none" stroke="#886c0c" stroke-width="1"/>
<polyline points="164,222 172,221 176,226 174,232 166,233 162,228 164,222" fill="none" stroke="#886c0c" stroke-width="1"/>
<polyline points="6,616 9.6,622.7 12.3,628.7 12.1,634.7 12.7,641.1 12.3,648 13.1,654.2 14.8,660.7" fill="none" stroke="#886c0c" stroke-width="1"/>
<polyline points="6.4,105.6 155.4,105.6 157.4,108.4 161.4,114.4 160.4,122.4 156.4,129.4 150.4,134.4 145.4,140.4 138.4,149.9 187.4,149.9" fill="none" stroke="#000" stroke-width="1"/>
<polyline points="201.8,6.4 202.3,8.4 202.9,10.2 204,12.6 205.4,15.4 206.8,18.2 206.5,20.3 208.4,22.3 209.4,25 208.3,27.5 207,29.2 204.6,30.6 203.1,32.4 203.5,34.3 205.2,36 204.8,38.1 205.4,42 206.4,43.4 207.7,45.9 208.2,47.5 210.2,49.8 210.9,51.8 212.9,53.4 215.3,55.3 217.6,57.2 219.1,59.4 222.8,59.1 225.2,59.4" fill="none" stroke="#000" stroke-width="1"/>
<polyline points="305.4,6.4 305.9,9.3 306.8,10.3 308.4,12.2 309,15.2 307,15.9 305.2,17.7 303,19.3 300.4,20.1 298.4,20.5 296.6,21 293.9,21.2 291.2,21.2 290.2,21.7 288,23.4 285.4,23 283.1,23.8 281.1,26.2 280.8,28.2 278.7,29.8 278.2,32.4 279.9,34.4 280.2,37.1 281.4,38.6 281.7,41.5 283.1,43.4 283.1,46 281.8,47.3 280.2,50.5 280.4,52.1 278,53.9 274.4,54.4 272.2,53.4 270.9,51.1 268.3,51.1 265.9,49.4 263.3,47.3 262.4,47.6 259.7,45.7 258,44.1 256,43.4 252.8,41.6 251.5,41.8 248.5,41.3 246.2,39.8 243,40 240.6,39.8 238.8,39.8 236.1,40.7 235.7,42.9 233.6,44.6 231.4,46 230.8,47.1 228.2,50.3 228.3,52.3 226.4,53.4 225.8,55.7 225.2,59.4" fill="none" stroke="#000" stroke-width="1"/>
<polyline points="225.6,60.8 226,61.8 225.9,61.7 227,61.3 229.5,61 231.7,60.7 233.3,62.4 233.2,62.4 232.5,63.2 231.2,65.4 229.1,68 228,68 228.4,67.1 230.1,68.4 232.4,71.6 233.1,74.4 234,74.2 233.6,73.3 231.2,74.2 228,75.9 226,76.6 225.7,76 226.3,75.8 226,78.5 228.9,80.5 231.3,81.9 232,81.5 231.5,81 230.6,82.6 229.6,85.4 226.8,86 226.3,85.3 227,85.2 227.2,87.7 226.8,91.3 227.2,93.2 228.2,91.6 227,91.6 224.4,93.6 222.4,95.2 221.7,95.3 222,95.3 222.7,97 221.8,99.1 220.1,99.4 220,99.7 220.2,99.2 219.4,97.5 218,94.7 217.8,92.8 217.6,92.5 216.2,94.3 212.8,96.7 215.3,96.7 215.4,95.8 213.6,96.6 211.1,98.6 209.8,99.6 209.4,99.6 209.8,99.9 210.4,101.6 210.9,104.1 211.4,105.7 211.7,105.8 211.3,105.9 209,108 209.1,105.1 209.2,103.3 209.6,102.7 209.6,102.8 208.9,102.8 207.3,102 205.1,100.7 203,99.5 202.5,100.8 202.6,100.9 204.2,98.2 202.5,98.5 200,99.1 197.1,99.6 195.7,99.3 194.8,102.2 195.6,101.9 198,103 201,104.9 203.1,105.7 202.1,103.5 201.4,103.8 202,106.1 203.6,109 202.4,108.3 201.9,108.1 202.1,108.2 202,109.5 201.4,111.9 200.8,114.2 200.9,115.2 201,115.1 200.2,115 198.1,115.4 196.4,117.4 196.1,119 195.7,119.3 195.8,119.1 196.8,119.4 198.7,120.5 200.7,121.9 202.2,122.7 201.4,125.6 201.4,125.3 200,125 197.4,124.9 195.2,124.9 194.2,124.5 194,124.3 193.9,124.8 193,126.1 191.3,127.9 189.9,129.5 191.5,128.3 191.6,128.3 191.4,128.8 191.1,130.4 190.9,132.9 190.5,135.5 191.3,137.5 190.9,137.7 190.8,137.4 191.8,137.1 193.9,137.2 196.7,137.6 196.6,140.8 196.4,142.1 196.8,142.3 196.8,141.9 195.4,141.5 192.8,141.6 189.9,141.7 188,141.7 186.6,143 186.6,142.8 187,143.2 187.5,145 187.9,147.6 188.4,150 189.8,149.1 190.1,148.9 189.9,148.9 189.6,150 189.7,152.4 189.9,155.2 189.7,157.4 189.1,157.8 191.5,153.9 191.4,155 190.3,157.4 189,159.9 188.4,161.6 188.8,162 189,161.6 186.6,158.5 186.2,161.5 186.3,163.6 186.2,165 186,165.5 187.9,163.3 187.6,164 186.7,165.2 185.5,166.8 184.2,168.4 183.5,169.6 183.2,170.2 183.1,170.3 182.1,170.6 180.8,170 178.8,169.4 176,168.2 174.4,167.1 174.2,166.4 174.7,166.4 174.7,167.1 171.4,168.5 171.9,171.5 172.4,174.4 173.1,176.1 173.7,176.3 173.8,175.8 170,173.1 170.5,175.4 171.6,178.3 172.4,180.3 172.8,181.5 172.7,181.9 173,181.8 175.7,179.4 175.2,181.1 174.5,183.2 173.9,185.1 173.7,186.4 173.7,187 173.7,187 173.2,186.6 172,187.1 170.2,187.9 167.8,189 165.5,189.6 164.6,189.3 167.2,187.7 167.5,188.4 166.3,190.1 164.1,192.3 162.2,194.4 160.7,189.3 160.1,189.8 167.2,190.2 164.8,191 162.1,192.4 160.1,193.2 159.3,193.1 159.6,192.9 160,193.7 160,195.9 160,198.8 160.2,200.7 160.6,201.2 160.7,200.1 159.8,200.4 158.1,201.9 155.9,203.9 154.1,205.2 153.2,205.2 153.4,204.6 154.1,204.8 155,206.7 155.9,209.6 158,210.3 159.3,210.2 159.1,209.6 158.5,209.9 158.2,212.1 158.4,215.2 158.4,217.6 157.9,218.2 158,216.7 159.2,217.6 161,219.8 162.7,221.6 163.5,221.9 163.4,221.6 162.5,222.5 161.5,225 160.3,224.8 159.9,224.1 160.2,224.3 159,225.7 156.7,227.6 155.6,229 156,229.2 155.5,228.5 153.2,227.4 150.5,227.9 149.4,228 149.1,227.9 149.3,228 149.2,229 148.7,230.9 148,233.1 147.5,235 147.4,236 147.6,236.2 147.3,236.1 145.3,234.4 144.9,236.5 144.4,239.4 143.3,241.5 142.5,240.8 143.2,240.1 146.1,241.6 149.3,243.6 150.9,243.7 150.6,242.6 150.6,246 146.8,246.5 144.2,246.9 143.7,246.4 144.2,246.3 144.2,248.2 143.5,251.4 143.3,253.7 140.7,254.4 141.2,254.2 140.5,252.3 138.9,249.9 137.8,248.5 137.3,247.6 137.2,247.3 136.8,247.4 133.9,246.7 133.6,248.4 133.2,250.6 132.9,252.4 132.9,253.6 132.9,254 132.6,254.1 131.7,254.4 129.8,254.7 129.2,257 128.4,259.4 127.7,260.5 127.3,260.4 127.5,260.2 131.2,259.3 130.1,261.5 128.7,264.1 127.8,266.2 127.8,267.2 128.1,267.2 127.9,266.8 126.4,266.5 123.6,266 122.7,268.8 121.3,270.8 120.5,269.9 121.4,269.3 124.1,271.1 127.2,273.5 128.8,273.6 128.5,272.4 127.2,273.2 125.5,276.6 123.5,278.5 122.4,278.9 122.4,278.3 123.1,278.5 124.2,280.5 125.3,283.5 126.4,285.7 127.1,286 127.2,285.4 126.1,285.7 124.2,287.5 121.7,288.7 119.7,288.5 119.5,287.9 120.2,287.9 120.2,289.7 119.3,292.8 118.7,295.6 119,296.7 119.6,296.3 118.6,296.5 116.2,295.9 113.1,295.4 111.2,295.1 110.3,294.7 110.2,294.4 110.4,294.6 110.2,295.4 108.2,297 108.4,299.4 108.5,301.8 108.8,303.4 109.1,304.1 109.3,304 109,303.9 107.9,304.3 106.1,305.3 104,306.8 101.5,307.8 101.5,306.3 102.4,306.3 102.3,308.8 101.8,312.3 102.1,314 102.9,313.5 101.9,312.9 98.8,313.5 97.9,316.3 97,317.4 96.5,317 97,316.5 98.6,317.4 101,319.5 103.1,321.2 104.3,321.5 103.8,324.3 103.3,323.7 101,323.7 97.6,324.1 95.2,324.1 94.4,323.6 94.8,323.2 95.3,323.9 94.9,326.1 93.7,329.1 92.5,331.4 92.3,332.7 92.9,332.8 93,332.2 91.6,331.6 88.8,331.2 86,330.9 85.7,334.5 85.4,335.2 85.3,335 85.9,334.9 87.6,335.4 90,336.4 92.4,337.4 93.9,339.2 94.5,339.5 94.5,339.3 94.1,339.5 93.4,340.7 92.6,342.8 91.8,345.1 90.9,347 91.8,343.9 92.1,343.9 91.6,344.9 89.7,346.6 87.6,348.5 86.6,349.8 86.7,350.2 86.7,349.8 85.8,348.1 83.2,348.7 80.6,349.4 78.9,349.5 78.4,349.2 78.6,348.9 79,349.5 78.8,351.2 78.2,353.8 77.6,356.4 79.6,356.1 80.4,356.1 80.3,355.8 79.8,356 79.1,357.6 78.6,360.2 77.9,363 76,361.5 76,360.6 76.9,360.7 77,362.8 76.4,366.2 76.2,368.9 76.9,369.5 76.9,365.2 75.9,366.2 74.9,369.3 73.9,372.2 73,372.8 72.9,372.1 74.3,372.4 76.8,374.3 78.8,373.6 79.1,372.8 78.4,372.9 79.1,374.6 81,377 82.2,378.4 82.7,379.2 82.7,379.3 83.1,379.1 84.5,378.7 86.6,378.5 86.3,380.6 86.2,381.9 86.4,382.3 86.2,382.2 85.3,382.5 83.5,383.2 81.1,384.3 79.2,386.4 78.7,385.7 79.6,385.6 81.5,388 83.5,390.7 83.4,387.9 82.6,387.8 83,389.5 85,392.6 86.1,395.1 83.7,390.5 84.7,390.5 85.3,393.4 85.7,397.2 86.6,398.6 87.2,397.7 85.8,397.4 82.5,398.8 79.9,399.9 78.7,399.9 78.8,399.3 79.5,399.6 79.9,401.9 80,405.1 81.2,406.8 82.1,407.1 82.1,406.5 81.3,406.6 79.6,408.3 77.7,410.7 76.1,412.2 75.4,411.9 75.9,411.5 77.1,412.8 78.6,415.7 80.5,415.8 81.2,415.3 80.6,415 80.3,416.4 80.6,419.3 80.9,421.7 80.6,422.3 80.6,421.9 82.3,422.1 85.1,422.9 86.8,423.1 87.5,425.1 86.7,425 84.6,426.1 82,427.5 81,428 80.6,427.9 80.8,427.9 81.1,428.7 81.3,430.4 81.3,432.7 81.4,434.9 82.8,434.9 83.4,435 83.4,434.9 83,435.4 82.6,436.9 82.3,439.3 81.9,441.6 81.5,443.3 81.2,443.8 81.1,443.8 81.7,445 83.1,445.2 85.2,445.8 87.5,446.4 89.2,446.8 90,446.7 90.1,446.6 90,446.9 90.1,448 90.6,449.9 90.3,451.5 88.1,452.2 87.1,452.2 87,451.9 87.4,452.1 87.6,453.6 87.3,456.2 87,459 87,461 88,457.4 87.8,457.1 87.5,457.5 87.7,459 88.5,461.3 89.3,463.5 89.9,465.2 90,466 89.9,466.1 90.2,465.9 91.5,466 93.7,466.3 95.9,467.3 97.5,467.8 98.2,467.8 98.1,467.8 98,468.5 98.2,470.3 98.7,472.7 98.8,474.9 98.4,472.6 98.8,472.8 98.6,474.8 98,477.6 98.1,479 98.3,478.9 97.3,478.8 94.7,479.5 92.9,480.2 91.6,480.6 91,480.7 90.9,480.8 91.5,481.4 90.7,482.6 89.4,484.3 88.1,486 87.3,487.3 87,488 86.9,488.1 86.3,488 84.9,487.9 82.8,487.9 81.3,489.6 81.1,491.5 80.7,491.8 80.7,491.5 81.8,491.6 84,492.6 86.5,493.8 88,494.3 88.4,494 89.2,496.5 87.9,496.7 85.6,497.9 83.6,499 82.5,499.5 82.2,499.4 82.4,499.7 82.5,501.2 82.4,503.5 82.4,505.5 82.6,506.5 82.7,506.5 82.1,506.5 80.5,507.3 77.9,508.5 75.3,508.9 75.1,507.9 76.1,507.8 76.5,510.5 76.4,514.4 77.1,516.4 78,515.9 77.2,515.1 74.1,515.8 70.6,516.9 69.1,516.4 70.1,515.3 70.8,517 70.5,521 70.7,523.8 71.9,523.7 71.5,522.6 68.3,523 65,523.8 63.8,523.5 63.4,523.9 64.2,524.6 65.1,527.2 65.9,529.9 66.8,530.8 67,530.2 65.9,530.4 63.8,532.1 61.4,534 60.3,534.5 60,534.2 60.4,534.1 61.1,535.3 62,537.8 61,540.6 60.8,542.2 61.3,542.3 61,541.9 59.1,541.8 56.2,542.2 54.1,544.1 53.5,544.2 53.9,544 55.1,545.4 56.6,547.9 57.8,549.2 58,548.9 57.7,550.2 55.3,551.1 51.8,552.1 50.6,551.6 51.3,550.7 52.1,552.2 52.2,556 52.5,559.2 53.5,559.6 53.7,558.6 50.6,557.2 49.6,560.7 49,562.6 48.5,563 48.6,562.7 49.8,563.3 51.8,565 53.7,566.6 54.8,567 54.8,566.7 54.3,567.3 53.9,570.4 51.1,569.2 49.5,568.3 49.3,567.7 49.6,567.8 49.2,568.7 47.5,570.4 46.7,572.1 47.7,573.9 48.4,574.3 48.5,574 47.9,574.1 46.7,575.3 45,577.4 43.6,579.3 42.6,580.4 42,580.6 42,580.4 41.9,582.1 43.2,582.7 45.2,584 47.2,585.4 48.9,586.4 49.8,586.7 50,586.5 49.8,586.6 50.7,589.7 48.9,590.4 46.7,591.4 44.5,592.1 43.6,592 43.8,591.7 44.7,594.6" fill="none" stroke="#000" stroke-width="1"/>
<polyline points="209.7,105.1 311.4,105.1 313.9,89.1 325.2,92.8 364.4,92 421.2,91 458.2,92.8 490.4,94.7 529.8,94 571.7,96.4 613.4,97.7 635.7,97.2 690.4,96 739.2,96.4 787.2,95.2 806.4,98.2" fill="none" stroke="#000" stroke-width="1"/>
<polyline points="635.7,96.9 637.6,95.7 639.6,94.3 640.8,93.3 643.1,91.4 644.9,91 646.8,91 648.7,90.4 652.3,88.3 654.2,88.9 656.1,87.6 658.3,87.9 660.4,86.6 663.4,86.7 663.8,85.9 666.6,84.6 668.2,84 671.6,82.7 672.8,82.3 674.7,82.2 677.4,81.7 678.9,79.7 679,78.1 680.8,76.5 682.4,74.3 683.8,73.4 686.8,72.7 688.8,72.6 691.2,71.7 693.6,70.8 694.9,69.4 695.5,67.5 698.1,65 698.9,63.5 699.8,60.4 702.4,58.1 703.7,58 704.2,55.5 705.9,54.4 708.4,53.4 710.6,51.9 711.6,50 714.2,47.8 716,46.3 717.9,46.2 719.9,44.2 722,42.3 724.6,41.4 725.4,40.9 728.2,39.6 730.8,37.4 732.5,36.2 735.5,35.7 737.8,34.2 739.4,32.8 741.4,32.4 743.2,31.4 745.7,29.2 747.3,28 749.3,27.1 749.9,25.8 752.1,24.5 754,22.4 754.9,21.7 756.5,18.7 759.3,18.7 760.9,17.1 762.4,15.2" fill="none" stroke="#000" stroke-width="1"/>
<polyline points="749.1,6.4 750,7.3 753.4,8.6 754,11 756.4,11.4 758.7,12.3 761.2,13.2 762.4,15.2 763.8,17.2 765.2,19.1 766.2,21.6 766.3,23.8 767.6,25.6 769.1,28.8 769.5,29.6 771.2,32.4 773.7,34.6 774.7,35 778,37.5 779.8,37.8 782,39.3 783.4,41 785,40 788.2,41.2 791.1,40.7 793.4,39.9 795.9,39.8 798.8,38.9 800.9,37.6 802.9,37 805.1,35.9 806.4,34.9" fill="none" stroke="#000" stroke-width="1"/>
<polyline points="787.2,95.2 785.7,96.8 785.8,99.1 784.8,101.9 783.4,103.8 782.9,105.5 783.8,108.7 783,110.7 782,113.6 782.1,116.3 782.4,118.4 779.4,117.4 776.2,117.4 775.1,118.9 772.4,119.7 771.5,122.7 768.8,123.4 768.5,126 766.4,127.5 765.2,129.1 764.8,131.4 763.8,134.4 761.2,134.9 760.5,137.1 758.3,138.6 756.4,139.4 754.5,138.4 751.2,137.8 748.8,138.5 746.4,137.1 743.7,138.3 741.8,138.4 739.6,138.2 736.9,140 734.4,140.4 732.4,141.2 730.2,144.1 729.3,146.2 727.2,146.9 725.9,148.2 724.4,150.4 721.3,150.5 720.2,150.8 717.1,151.9 715.6,149.5 715.4,148 713.4,145.4 711.2,146.8 710.1,148.1 707.2,149.4 705.8,151.5 704.3,152.6 701.2,153.3 699.8,155.4 697.3,156 694.7,156.5 693.4,158 693.2,161.3 692,162.5 693.4,165.2 692.4,167.9 690.6,168.4 688.1,168.4 685.2,168.2 682.4,169.1 679.4,168.9 678.1,170.5 675.3,170.1 672.4,170.4 670.3,172.6 669.1,173.2 666.8,174.6 664.3,176.4 662.8,177.4 662,179.1 658.9,180.5 657.7,181.1 656,182.9 653.7,185.6 653,186.4 649.6,187.1 648.3,187 645,187 644,186.5 640.1,188.1 638.2,187.4 636.3,187.8 633.5,189.4 631.1,188.8 627.5,189.6 625.2,191.2 623.4,191.3 622.3,192.1 620.2,193.4 618.4,195 615.4,197.2 613.8,199.1 612.3,200.3 610.9,203 610.8,205.2 610.3,207.2 608.5,209.9 608.4,212.4 606.1,213.7 604.4,212.7 601.1,214.8 598,213.7 596.3,215 594.6,216.5 591.7,218.4 590.1,220 590.7,223 589.7,224.7 590.2,227.3 589.6,230.5 588.5,232.2 589.6,234.5 588.4,236.9 588.9,239.4" fill="none" stroke="#000" stroke-width="1"/>
<polyline points="145.7,238.4 300,237.9 390.4,238.4 493.2,239.4 588.9,239.4 680,238.4" fill="none" stroke="#000" stroke-width="1"/>
<polyline points="680,238.4 703.4,231 718.2,224.9 731.4,221.2 742.8,220.4 770.4,221.7 806.4,222.4" fill="none" stroke="#000" stroke-width="1"/>
<polyline points="680,238.4 678.2,240.5 676.7,241.1 674.9,244 673.2,245.3 671.4,247.6 670.9,248.7 668.9,250.4 667.5,251.8 666.5,254.5 664.7,255.6 664.4,258.3 663.3,260.7 661.4,261.8 663.8,263.4 664.5,265.5 666.7,267.9 667.2,269.7 668.9,271.4 671.5,273.3 672,274 674,276 676.1,277.3 678.4,279.9 678.9,280.9 681.8,283.1 683.4,284 685.3,284.4 688,283.7 691.1,283.5 693.1,284.7 694.8,284 695.7,285.3 696.5,288.8 698,290.2 699.5,292.1 699,294 700.9,296.4 702.3,297.9 702.6,300.1 703.5,303.4 704.3,304.6 704.5,306.5 705.9,308.7 707.1,311.1 707.8,312.5 708.4,314.5 711,317.5 710.8,318.6 712.2,321.1 713.1,323.3 714.5,325.4 715.3,326.8 717.4,328.1 718.2,330.4 719.5,331.7 721.1,333.2 724.7,334.2 725.9,336.3 728.1,338 729.3,338.5 732.4,340.2 732.8,341 735.4,343.1 736.6,344.9 737.9,347.1 738.2,349.2 740,350.1 741.1,352.4 742.1,354.4 743.5,356.1 745.3,357.9 747.3,359.7 748.8,361.5 751.5,361.9 753,364.2 756.2,366.6 757.4,367.4 758.2,369.6 760.2,371.1 761.6,373.1 763.1,376 765,377.4 765,380.4 766.1,382.9 768.7,384 768.6,386.1 771,388.4 772.4,390.3 773.9,391.9 775.7,394.9 776.9,395.8 777.9,399.1 779.3,399.6 779.8,402.4 781,404.3 784.7,405.6 785.4,406.6 787.9,406.7 789.5,408 792.1,410 794.4,411 796.5,414.2 797.8,416 799.4,417.4 799.2,420.1 800.8,422.3 800.4,424.2 800.5,427.7 801.9,429.4 802.2,432.5 804.1,433.5 803.9,436.3 805.4,439.4 806.7,441.8 806.4,445.4" fill="none" stroke="#000" stroke-width="1"/>
<polyline points="300,237.9 302.4,243.4 307.4,247.4 304.9,271.7 298.8,323.4 293.8,380.4 288.9,429.4 282.8,491.2 279.4,513.4 281.4,547.9 282.8,580.4 284.1,600.4 285.4,649.4" fill="none" stroke="#000" stroke-width="1"/>
<polyline points="493.2,239.4 497.4,264.4 503.4,301.4 510.9,343.1 517.1,380.4 525.7,429.4" fill="none" stroke="#000" stroke-width="1"/>
<polyline points="525.7,429.4 526.8,431.7 526.5,434.5 526.8,435.9 527.5,437.3 529.3,440.9 528.5,442.6 530.5,445.5 530.4,446.9 531.3,449.5 532.8,451 533.5,453 534,455.6 536.1,457.5 537.7,458.4 538,461.4 538.4,463.1 537.2,466 538,468.8 537.6,471.4 538.7,473.5 538,475.2 539.1,476.3 542,478.3 543.8,479.3 545.4,481.4 543.3,484.3 543,486.4 541.3,487.1 538.4,488.8 535.9,489.8 534.4,491.2 533.6,493.4 533.4,496.3 533.1,498.9 533.1,500.5 533.1,503.4 532.7,506.5 532.6,507.9 532.5,509.9 532.2,512.6 531.5,515 531.1,518.8 531.4,520.4 531.2,522.6 531.5,525.1 531.3,527.2 531.5,530.1 531.8,531.6 533.3,533.2 532.4,536.8 533.8,537.6 533.4,540.4 532.7,543.6 532.2,546 533,547 531.9,549.3 532.8,551.9 532.1,555.2 532.3,556.8 531.1,559.9 531.6,562.5 531.7,564.8 531.5,565.6 530.7,568.3 530.6,570.1 529.8,573.6 529.7,574.9 530.4,577.2 531.4,579.7 532.4,580.9 533.5,583.1 535,585.8 535.8,587.2 536.6,588.5 537.9,591 536.9,593.5 538.3,595.8 538.3,597 539.2,599.9 540.7,602" fill="none" stroke="#000" stroke-width="1"/>
<polyline points="6.4,416.1 78,416.1" fill="none" stroke="#000" stroke-width="1"/>
<polyline points="44.7,594.6 186.4,594.6" fill="none" stroke="#000" stroke-width="1"/>
<polyline points="186.4,594.6 186,597.1 184.8,599.5 183.6,601 183.5,602.4 183.7,605.3 182.7,607.7 181.4,609.4 180.4,611.9 179.6,614.3 179.9,617 179.2,619.2 177.9,622.4 177.7,624.1 178.4,626.1 179.8,628.7 179.5,630.3 181.5,633 182.6,634.9 183.7,636.2 183.9,638.9 185.5,641.2 187.2,641.5 190.1,643.8 190.9,646.7 191,649.4 192.3,651.9 192.7,654.5 192.4,656.2 192.7,658.7 194.2,659.4 195.5,662.6 196.4,663.7 197.4,666" fill="none" stroke="#000" stroke-width="1"/>
<polyline points="344.7,594.6 537.1,594.6" fill="none" stroke="#000" stroke-width="1"/>
<polyline points="344.7,594.6 344.4,597.1 344.4,599.2 344,601 343.1,602.8 342.3,605.4 344,607.9 343.9,609.6 345.8,611.5 347.2,613.3 348.8,615.1 349.7,616.4 351.3,618.2 353.1,620.2 354.8,621.1 356.1,623.2 357.4,623.9 359.4,625.4 358.8,628.4 359.1,629.5 359.4,631.2 359.3,634.1 358.3,636.4 358,639.1 356.4,641 355.8,643.8 356.7,646 359.5,647.3 360.7,648.4" fill="none" stroke="#000" stroke-width="1"/>
<polyline points="548.1,620.4 603.4,622.9 660.4,626.6 744.1,632.8" fill="none" stroke="#000" stroke-width="1"/>
<polyline points="744.1,632.8 745.2,634.5 744.7,637.5 745.3,639.1 746.1,642.5 746.2,643.4 746.6,646.4 747.8,648.6 749.1,651.2 751.1,650.7 754.3,651.9 757.7,651.2 758.7,648.2 758.7,647.3 758.7,644.8 759.7,641.9 759.9,639.7 760.3,637.9 760.7,635.9 761.6,634.4 761.4,631.4 760.4,628.2 760.5,627.1 759.6,624.4 757.9,621 757.7,619.2 758.5,615.6 760.2,613.1 761.8,612.5 764.5,612 766.3,610.4 768.6,610.8 771.1,611.9 772.5,612.7 775,614.1 777.9,613.7 778.7,614.6 781.7,615.3 783.6,615.2 786,616.8 789.2,617.1 791.5,618.6 793.4,619.2 796.1,618.9 798.1,618.9 799.7,620.6 803.2,619.7 805.4,620.4" fill="none" stroke="#000" stroke-width="1"/>
<polygon points="6,806 6,710 7.7,707.7 10.3,705.9 12,705 14.2,703.1 15.5,701.7 18.5,700 20.7,698.7 24.6,697.6 28.3,700 28.2,702.3 29.6,706 31.9,707.1 33.9,706.5 37,707.5 39.7,707.6 42,705.8 45.2,704.4 46.8,704.5 48.1,706.9 48.2,710 48.7,713 49.5,715.2 51.6,718.7 52.2,722.4 53.5,725 55.8,724.9 59.3,724.5 62.4,725.5 65,727 68.1,725.7 71,726 71.6,728 73.8,731 75.1,734.4 75.8,738 71.9,740 69.1,742.1 67,743.8 68.9,746.3 71,749.6 74.1,751.3 75.7,752.3 78.7,753.5 79.7,751.6 81,747.9 81.6,745.7 84.5,741.9 87.9,741.8 89.5,743.6 92.2,743.8 94.5,745.7 98,747.7 99.1,749.9 102.3,751.7 103.8,753.5 106.7,757.3 109,759.8 110,763 112.1,760.2 113.5,757 114.3,754.5 115.4,752.9 115.4,749.6 117.9,749.3 119.7,748.7 123,747.7 125.2,746.7 127.5,743.4 128.9,741.9 131.6,743.2 134.7,743.8 136.7,745.7 140.5,747.7 142.4,748 145.4,749.6 145.5,752.5 146.5,754.1 148,757 149.5,759.7 150.6,760.9 153,763 154.8,761.7 156.9,759.7 158,757 156.9,753.8 156.4,751.7 156,748 156.1,744.9 153.9,742.5 153.3,740.5 153,738 152.9,735.1 151.6,732.9 152,730.6 152,728 151.8,725.3 150,722 152,720.2 154,718 157.3,719.2 160,722 163.3,723.5 165.7,724.5 167.6,725 169.8,726.8 171.6,729.2 173.9,730.2 177,733 178.8,734.7 181.3,736.9 183.9,740 185.2,741 187.5,743 189.5,745.5 192.7,745.8 194.7,748 196.3,749.3 198.5,750.5 201.4,753.6 202.8,754.3 204.1,755.2 206.9,757.5 208.2,759.8 210,763 213.2,762.4 214.3,763.8 217.9,762.4 220.5,762.1 223.1,763.9 226.3,763.4 227.8,762.8 230.2,763.5 233.5,763.5 236,763 237.4,759.8 239.4,757.5 237.3,757 234,754.8 232.6,753.3 230.5,751.2 227.4,748.8 225.8,746.7 222.8,744.4 219.6,743.5 217.3,742.8 215,741 213.1,740.1 210.4,740.3 207.7,738.4 203.7,737.3 201.5,737 198.8,735.1 197.4,734.9 195.6,732.8 193.1,731.9 190.6,730 188.5,728.1 188.6,726.2 187,723.5 184.6,721.9 183.5,719.7 182.5,717 185.4,715.1 186.4,714.3 189,711.2 190.6,710 192.3,706.7 195.4,704.7 198.4,703.9 199.2,702.6 202.1,700.6 205.7,698.5 207.6,695.9 206.4,693 205.1,689.1 204.9,687 205.6,684.5 204.7,682.3 204.5,679.4 204.5,676 202.8,677.6 200,680.3 198.3,683.3 197.4,687 195.6,689.9 194.7,692.5 191.6,693.7 189.3,695.2 186.9,693.8 185.9,691 182.2,689.6 179,688.4 178.2,686.4 177,683 178.9,682.1 181,679.6 183.8,679.9 186.6,679.2 189.3,680.3 191,677.5 192,676.3 194.7,673.5 196.4,671.6 199.6,669.9 201.5,668 203.9,665.5 207,663 209.4,661.8 211,659.8 214,658 213,655.1 213,653 217,651 220.5,652.5 223,654 225.5,653.7 228.5,652.3 230.3,651.6 232.5,651.1 234.9,650 237.8,648.6 240.8,647 243.7,647.5 247.1,647.2 250.4,645.8 252.6,646 255.2,648.3 258.2,648.3 259.3,650.4 262.5,652 264.2,650.8 266.6,650.8 270.4,650.5 272.3,649 274.1,650.4 277.4,650.4 280.3,652.8 282,653 283.5,652.1 285.8,649.6 288,648 291.5,648.9 292.7,648.5 296,649 298,651 299.4,653.3 301.9,656 305.8,653 306.4,649.6 306.4,647.9 305.7,645.2 306.8,643 307.5,640.1 307,638.1 308.8,635.2 308.8,631.5 309.3,628.1 310.3,626 312.3,622.5 315,623.1 318.5,625 318.8,628.4 320,630 319.3,633.9 320.5,636.2 320.9,638.5 321.4,640.2 323.7,643.3 323.9,646.7 325.9,648.4 327.4,651.2 327.6,653.5 328.8,655.7 330.7,657 332,659.5 335.2,659.9 337.7,658.1 341.3,657.9 344.3,658 342.9,654.9 343,653 345.1,652.1 348.5,652 351.7,652 354.6,649.6 356.6,647.4 359,646 361.6,643.4 360.9,645.4 360.3,648.3 360.3,652 363.6,652.1 365.5,652 369,652 371.6,649.1 373.3,647.6 374.5,646.2 376.4,643.4 375.9,640.7 376,638.8 375.1,635.7 375,632.4 377.9,633.8 380,634.8 381.7,636.4 383.7,638.5 384.1,635 385.4,633.3 387.4,630 389.9,632.4 388.9,634.8 388.7,638.5 390.4,640.3 394.3,641.3 395.7,641.7 398.5,643.4 398.5,647.9 400.9,647.7 403.5,647.5 406.5,648.3 410.6,647.5 412.1,648.1 415,646.9 418.2,647 418.2,644.7 420.7,641 423.5,640.8 428,641 429.3,637.3 431.7,639.7 434.2,642 436.6,641.3 439.1,640.1 442.9,639.8 444.6,640.2 447.8,641 450,638.5 451.1,640.1 453.9,643.4 454.1,645.4 455,648.4 454,651.5 452.7,654.5 455.6,656.2 458,658 459.9,658.4 463.4,659.5 465.4,661.8 467.5,663 469.1,665.5 473.1,667 475.3,669.2 477.3,670.5 479.1,672.4 482.2,674.9 485.1,676.7 487,678 489.4,679.8 491.8,680.6 493.3,680.5 496,682.5 497.8,683.9 500.3,686.4 503.6,687.6 506,689 508.1,691.3 509.8,692 511.7,694.9 513.9,698.1 515,700.5 515.3,703.6 516,705.8 516,709.6 520,709 523.1,707.6 524.6,706.6 528,706 531.1,705.8 533.8,707.5 536,707 538.5,704.3 541,702 543.6,702 546.8,701.5 549,701 548,702.7 546.5,706 548.4,704.7 551.9,704 554,703.5 556.8,701.1 558.5,700.1 562,699 565.7,697.8 568.7,696 572.2,693.6 575,692 578,690.4 581,689 583.4,687.7 585.9,687.8 583.6,686 579.8,685.3 582.7,683.6 583,680.3 585.9,677.9 589,677.8 590.8,675.5 592.8,675.8 595.8,674 598.9,674.9 603,675.5 604.9,675.2 608.8,674.1 611.1,674.4 613,674 616.2,676.5 617.4,679 620.4,680.4 622.8,680.8 624.3,682.8 627.5,683.7 630,685.3 631.3,686.9 633.5,689.6 634.8,691.3 637.6,692.7 639.4,694.5 640.8,698 642,699.7 642.5,702.6 644.1,704.3 647.1,706.5 647.9,708 650,710 652,710.4 654.1,713 657.3,713.6 657.2,717.2 657.5,718.7 658.3,721.4 658.6,724.7 660.5,727.3 663.5,728.9 665.1,730.9 667,732 669.5,734.8 670.7,736.5 672,740 674.2,741.9 675.5,744 677.5,746.5 678.2,747.6 680.8,750 681.6,752.9 681.5,755.9 681.2,759.9 681.6,762.7 684.5,760.2 686,758.2 687.8,756.5 691,756.6 693.3,756.5 696.4,758.2 700,757.8 700.8,759.7 702.3,763.6 702.2,764.5 702.5,766.8 703.8,770 705.1,771.8 706.4,774.6 708.6,778.2 710,780 711.2,782.2 711.3,784.8 711.9,786.9 712.1,789.2 713.6,792 716,806" fill="#004266" stroke="#000" stroke-width="1.2"/>
<polygon points="9.9,717 12.9,717.2 16.3,715.6 19.1,715.5 21.6,715.2 24.6,715 27.4,716.9 28.9,717.4 32.6,718.1 34.5,719.8 36.1,721.2 38,723.5 35.8,725.1 33.6,727.2 32,729.7 29.7,728.4 27.7,727.2 24.6,726 21.6,725.8 19.4,724.8 17.4,723.5 14.7,722.3 12.3,722 11.7,719.2" fill="#5e504b" stroke="#000" stroke-width="1"/>
<polygon points="806,562 805.1,563.1 802,566 801,568.8 800.9,570.3 798.5,572.9 798,576 798.8,578.2 801.1,581.5 801,583 799.9,584.2 795.9,588.2 795,590 797.3,592.6 797.9,594.1 799,598 800.1,601.4 802.4,603.5 803,605 802.1,606.7 798.1,608.8 797,612 798.1,615.1 800.1,617.9 800,620 801.1,623.1 801.4,625.1 801.1,628.2 803,630 801.1,633.5 800.8,634.5 798.4,636.9 798,640 799.3,643 799.1,644 801.1,647.7 802,650 803.7,651.8 806,655 807,655 807,562 806,562" fill="#004266" stroke="#000" stroke-width="1.2"/>
<polyline points="783,652 784.9,654.9 785.6,658 784.2,660.9 783.9,663.8 783,665.9 782.4,667.7 782.2,671 780.7,673 783.7,675.2 785.6,678 786.5,680.2 787.4,683.5 787,685.3 788,687.8 789.3,690.5 790.9,692.6 792.6,695.5 794,697.6 794.7,701.1 793.3,704.9 794,707.5 792.7,708.6 790,710.5 788,712.4 789,716 789,718 789.3,722 786.6,722.6 784.4,724.7 783.8,727.4 783.7,729 785.2,732.1 784.5,735.6 783.9,737.1 784.4,740 785,742.8 785.3,744.5 786,748" fill="none" stroke="#000" stroke-width="4.5"/>
<polyline points="783,652 784.5,655.3 785.6,658 784.7,660.6 784.2,663.2 783.2,665.5 782.3,667.9 781.6,670.7 780.7,673 782.9,675.8 785.6,678 786.5,680.7 786.6,683 787.6,685.2 788,687.8 789.7,690.5 791.2,692.4 792.5,695.4 794,697.6 793.9,700.7 794.1,704.1 794,707.5 791.8,709.4 790.2,710.6 788,712.4 788.3,715.6 788.7,718.7 789.3,722 786.7,723.5 784.4,724.7 784.6,727.3 784.1,729.8 784.5,732.6 784.4,735 784.5,737.5 784.4,740 784.9,742.5 785.3,745.5 786,748" fill="none" stroke="#004266" stroke-width="2.5"/>
<polyline points="487.5,674 482,668 478,662.5 475,658" fill="none" stroke="#000" stroke-width="4.2" stroke-linecap="round" stroke-linejoin="round"/>
<polyline points="478,662.5 480.8,657.5 486.4,659.7 492,656.9 496,653.4" fill="none" stroke="#000" stroke-width="4.2" stroke-linecap="round" stroke-linejoin="round"/>
<polyline points="486.4,673 489,673.8 499,675 506,679.4" fill="none" stroke="#000" stroke-width="4.2" stroke-linecap="round" stroke-linejoin="round"/>
<polyline points="487.5,674 482,668 478,662.5 475,658" fill="none" stroke="#004266" stroke-width="2.2" stroke-linecap="round" stroke-linejoin="round"/>
<polyline points="478,662.5 480.8,657.5 486.4,659.7 492,656.9 496,653.4" fill="none" stroke="#004266" stroke-width="2.2" stroke-linecap="round" stroke-linejoin="round"/>
<polyline points="486.4,673 489,673.8 499,675 506,679.4" fill="none" stroke="#004266" stroke-width="2.2" stroke-linecap="round" stroke-linejoin="round"/>
<polygon points="204.5,676 212,668 222,666 229,670 228.5,684 226,696 221,705 212,712 207,722 205,732 201.5,737 190.6,730 182.5,717 190.6,710 195.4,704.7 202.1,700.6 207.6,695.9 204.9,687" fill="#004266"/>
<path d="M212.9 669.3 L211.3 671.8 L209.5 672.5 M203.0 720.5 L200.6 722.6 L197.6 722.8 L195.5 722.4 M208.2 709.7 L208.0 707.9 L207.3 706.3 L204.9 705.6 L202.7 703.2 M213.7 680.6 L213.6 677.5 L212.2 674.8 L212.7 673.2 L212.7 670.7 L214.1 668.2 M211.9 683.8 L215.0 682.5 L217.2 682.2 L218.9 682.7 M196.5 728.9 L194.8 730.7 L193.8 732.1 L190.8 732.9 L188.0 734.9 L186.7 736.5 M194.9 716.6 L193.9 718.4 L192.9 721.1 M214.0 670.2 L214.3 673.3 L215.5 674.3 L215.8 676.4 L215.1 677.9 L215.3 681.1 M210.7 692.9 L212.8 693.3 L215.5 694.9 L218.0 695.9 M217.7 692.4 L216.1 690.8 L216.3 687.8 M207.8 713.2 L207.3 714.7 L205.8 715.5 L204.5 716.6 M202.0 717.4 L204.9 718.2 L207.5 720.4 L208.9 723.1 L211.0 723.7 L212.3 725.8 M188.9 711.9 L187.3 712.6 L185.5 711.9 M226.4 691.9 L228.4 689.2 L230.0 688.1 L230.9 685.0 L231.6 683.6 M226.9 675.9 L228.7 676.0 L231.9 677.1 L235.2 677.5 M200.9 735.3 L199.9 733.9 L198.2 730.9 M219.8 698.5 L222.4 697.1 L224.0 697.2 L225.9 695.7 M211.7 702.8 L213.1 700.5 L213.8 698.8 M219.7 668.4 L222.0 667.3 L225.4 667.9 L228.4 667.6 M197.8 710.9 L196.1 710.6 L194.8 709.0 L192.8 708.9 L190.7 708.8 L188.3 706.7 M203.1 709.2 L205.8 710.4 L208.0 711.1 M207.0 685.1 L209.0 683.4 L210.5 682.4 L213.1 680.2 M214.9 688.8 L214.8 686.7 L214.0 685.1 L212.6 683.4 L212.3 681.8 M220.4 688.7 L220.3 686.7 L218.6 685.1 M201.7 730.8 L204.3 728.3 L206.1 725.8 L207.5 723.7 L210.9 723.3 M191.1 714.0 L189.0 715.5 L187.4 716.4 L187.1 718.0 L187.5 719.8 M190.0 723.9 L190.5 722.2 L190.9 720.0 M213.0 694.3 L211.8 692.1 L209.9 691.2 L207.7 689.3 M227.1 677.5 L226.1 679.0 L226.1 682.0 L224.6 684.0 L225.0 686.5 L225.1 689.9 M198.0 717.3 L199.6 716.8 L201.0 716.0 L201.8 714.3 M224.6 668.8 L227.7 669.7 L229.7 670.2 L232.0 668.8 L233.6 668.2 L234.5 665.9 M217.6 682.4 L219.1 679.4 L220.0 677.0 M194.6 717.3 L192.6 719.2 L191.3 720.7 L191.4 722.6 L192.1 724.2 M215.0 669.5 L214.3 672.0 L213.9 675.3 L212.1 676.6 L210.2 679.3 L210.5 682.4 M207.4 693.9 L204.4 695.3 L202.8 695.4 M225.0 683.4 L222.1 683.6 L219.5 684.0 L217.0 682.6 L216.0 679.7 M191.6 712.1 L188.9 709.9 L187.3 709.0 L185.6 709.3 L183.2 710.9 M224.9 670.2 L222.6 672.0 L221.1 672.2 L219.5 672.9 M201.8 722.8 L200.1 723.1 L197.9 724.7 L195.8 726.1 M200.5 736.2 L202.4 735.3 L205.0 736.4 M197.9 706.7 L196.9 709.3 L194.2 710.8 L192.2 711.8 L189.1 711.1 M219.8 694.1 L219.3 695.7 L218.4 697.3 M199.0 714.8 L201.8 713.4 L204.7 712.7 L207.6 711.9 L208.7 710.4 M217.0 705.4 L218.5 705.7 L220.7 707.0 M221.2 692.5 L220.4 689.6 L219.2 686.5 L217.5 684.4 M210.7 674.8 L212.5 672.0 L215.0 669.7 M213.4 702.0 L216.0 701.4 L218.1 701.0 L219.2 699.2 L220.6 696.3 M213.1 672.2 L211.8 669.8 L212.3 667.8 L214.0 665.3 M210.8 676.4 L212.8 675.0 L216.0 675.6 L218.5 675.1 L221.8 675.5 M225.4 677.2 L225.4 674.0 L226.7 672.8 L228.3 670.2 L227.7 667.9 M217.6 707.0 L220.9 706.7 L222.1 705.3 L223.2 703.0 M215.5 702.9 L214.0 701.1 L211.2 700.1 L209.4 698.2 M222.3 684.4 L220.3 683.7 L219.3 682.3 M216.3 698.6 L217.5 696.0 L218.7 695.0 M202.9 725.4 L203.7 723.0 L205.8 721.4 L207.9 721.0 M188.4 715.3 L190.3 715.5 L191.4 716.7 L192.0 718.3 L191.2 719.9 M209.6 708.7 L211.7 710.1 L212.9 711.9 L214.2 714.5 L214.0 716.2 M216.1 668.7 L214.2 669.2 L211.0 670.1 L209.1 669.2 L208.2 668.0 M218.4 689.2 L220.4 686.8 L221.6 684.6 L223.4 682.5 L223.2 680.7 M222.7 695.1 L219.6 695.8 L217.1 697.9 L216.8 700.9 L217.4 704.3 L219.5 705.7 M213.6 682.5 L213.0 679.9 L211.4 676.9 M208.7 701.6 L207.7 700.1 L206.0 699.2 L204.1 698.3 L202.8 696.8 L202.1 694.8 M211.4 685.8 L214.0 687.0 L215.2 688.3 L215.4 690.3 M211.3 691.8 L210.2 694.1 L208.4 694.6 L207.6 696.0 L206.7 698.2 M204.9 681.3 L205.9 682.9 L205.7 684.7 L206.9 686.1 L208.5 687.0 L211.4 686.2 M197.7 725.7 L196.7 726.9 L196.4 729.5 M224.3 692.4 L227.1 692.8 L229.5 693.1 L231.9 693.8 L233.5 696.1 M219.6 683.0 L221.3 684.1 L223.9 684.2 M196.3 726.3 L198.9 727.6 L201.3 727.0 L203.6 725.2 M218.4 676.6 L215.8 676.6 L213.7 674.1 M226.7 679.1 L226.8 677.1 L228.4 675.1 L231.1 673.2 L233.1 671.9 M221.2 671.5 L223.0 669.0 L223.3 666.7 M224.1 693.6 L222.3 694.6 L219.7 694.4 L217.1 696.5 L215.7 697.4 L213.7 697.2 M210.4 683.3 L213.7 684.5 L216.2 685.7 L216.9 688.2 M216.4 689.7 L216.9 692.1 L215.3 694.5 L213.7 697.1 L213.7 698.6 M198.0 733.8 L198.5 736.5 L198.9 739.1 M212.7 680.5 L212.9 678.1 L213.4 675.2 M192.4 723.7 L191.8 725.4 L192.4 727.2 L191.4 729.6 L189.7 730.2 M203.5 713.4 L202.5 711.1 L200.9 708.3 L199.1 707.8 L197.3 706.4 L196.5 705.1 M211.2 690.6 L209.0 689.2 L206.3 688.8 L204.9 688.1 M219.2 705.0 L221.1 704.8 L223.8 703.3 L226.3 701.7 L228.5 702.1 M197.2 717.0 L199.8 716.6 L201.6 714.0 L204.9 713.5 L207.1 712.1 M214.6 674.8 L212.2 673.2 L210.3 672.5 L208.6 672.6 L207.2 671.7 M225.5 675.8 L225.4 673.2 L224.4 670.7 L221.6 669.3 M205.6 708.8 L207.9 708.5 L210.2 709.4 L211.8 710.9 L215.0 711.1 L216.5 710.6 M224.6 691.6 L222.9 692.3 L219.9 692.4 L217.2 690.5 M228.6 674.7 L229.1 672.7 L228.1 670.2 L226.5 667.8 L227.1 665.4 L228.1 662.9 M220.4 675.0 L219.9 672.0 L219.8 670.0 L217.6 667.6 L217.3 664.5 L218.6 661.3 M214.1 668.5 L216.1 669.0 L217.3 670.9 L217.2 672.8 L216.0 675.3 M195.1 716.9 L197.9 714.9 L200.1 713.0 M210.3 675.0 L209.3 678.2 L207.9 679.5 L207.4 681.2 L207.2 682.9 L205.2 684.9 M186.4 715.3 L183.6 714.3 L182.0 714.1 L180.5 712.2 M200.2 714.8 L198.1 715.3 L195.3 715.1 L192.7 715.2 L190.4 714.3 M227.1 683.1 L230.5 683.4 L233.6 684.8 L235.0 685.7 L235.8 688.4 M226.7 684.1 L225.5 686.5 L223.9 687.4 M212.8 670.9 L215.6 670.3 L218.2 668.5 L219.6 665.7 L218.9 664.0 L217.9 662.8 M204.5 707.2 L206.0 704.9 L207.0 703.0 L206.5 701.1 M218.5 681.4 L220.6 680.8 L223.7 681.9 L226.3 683.0 L227.3 684.7 L228.8 685.3 M193.5 724.1 L196.6 724.3 L199.5 724.7 L201.6 723.1 M197.3 717.4 L199.8 715.7 L201.2 714.8 L204.3 714.1 L206.1 714.0 M189.0 726.1 L188.7 723.2 L187.8 722.0 L187.0 720.2 L184.2 718.8 L182.1 717.8 M194.0 710.2 L192.6 707.6 L192.7 705.6 L191.8 703.2 L192.9 700.0 M207.1 716.6 L207.3 713.3 L206.5 710.9 L205.8 709.2 M201.5 706.1 L202.4 708.4 L203.3 710.8 L204.8 713.6 L205.0 716.5 M216.5 680.0 L218.2 680.3 L220.9 681.9 L224.0 682.3 M210.6 673.2 L211.6 670.0 L211.3 667.0 L210.3 663.7 L210.6 660.9 M220.2 679.0 L222.1 679.0 L224.2 678.0 L227.5 678.6 M206.2 708.0 L207.4 706.9 L207.9 704.9 L207.3 703.4 L205.8 700.7 L204.5 697.5 M195.6 722.4 L194.1 721.9 L193.1 720.1 L192.2 718.8 L190.9 716.4 L190.7 714.8 M211.1 684.9 L214.3 684.0 L215.5 682.3 L218.0 681.0 L220.1 680.8 M197.8 733.5 L196.2 736.0 L195.3 737.8 M213.5 700.5 L212.3 702.7 L211.2 705.3 L212.0 706.9 L213.0 709.4 M195.4 731.1 L195.6 729.1 L196.8 726.3 M208.6 686.8 L209.0 690.2 L207.6 691.6 L206.4 693.2 M224.1 674.4 L221.4 673.5 L219.7 670.9 M214.1 682.9 L214.6 679.4 L216.5 677.2 L218.3 677.3 L221.3 675.6 L223.0 675.6 M196.6 704.7 L199.3 705.3 L200.9 708.1 L200.4 710.4 L201.7 712.2 L203.9 712.9 M214.8 667.5 L212.9 668.5 L211.2 669.4 L209.0 669.4 L206.8 669.8 M216.5 678.7 L218.9 678.1 L221.4 680.0 M221.5 702.6 L219.3 705.0 L219.3 706.5 L220.8 708.5 M196.0 728.8 L197.2 726.6 L199.9 726.0 L202.1 726.9 L204.5 727.5 M207.9 692.5 L209.7 693.4 L211.3 693.0 L212.4 691.3 L213.3 690.0 L212.7 688.1 M211.2 702.6 L214.7 702.6 L217.5 700.8 L220.6 701.1 M192.8 716.3 L190.0 717.8 L187.8 719.3 L186.5 721.2 L184.2 722.1 L183.5 723.7 M199.8 713.6 L197.9 711.4 L196.3 710.1 L195.2 708.5 L193.9 707.6 M208.8 693.4 L206.4 695.2 L204.8 697.0 M220.4 677.6 L223.0 675.9 L225.8 674.1 M204.7 718.1 L205.3 715.0 L204.9 713.0 L205.7 711.4 L206.0 708.7 M195.2 730.3 L197.8 730.1 L199.3 729.1 L199.9 726.3 M207.2 690.2 L209.5 692.0 L212.6 691.4 M191.0 722.5 L189.5 723.2 L186.7 725.3 L185.4 726.1 L183.4 727.6 L182.6 730.2 M214.6 706.6 L216.1 705.7 L217.0 702.3 L215.6 699.8 L214.3 696.8 L213.5 694.1 M189.7 713.0 L191.3 709.9 L194.3 708.2 L194.9 705.3 M216.8 673.7 L217.5 671.6 L218.9 668.9 L221.6 667.2 M206.7 702.2 L208.3 700.2 L208.1 698.1 M206.1 704.7 L207.7 704.1 L209.1 701.5 L208.4 699.3 L208.7 697.2 L207.3 694.5 M200.3 735.5 L198.0 735.1 L195.6 735.2 M223.8 694.4 L221.4 694.0 L219.0 696.0 L218.1 698.6 L217.8 701.0 M222.6 680.0 L219.9 679.7 L218.0 678.7 M195.6 719.9 L197.0 722.2 L199.4 724.5 L200.6 725.9 L201.5 728.5 L203.2 731.2 M227.6 681.6 L224.7 682.6 L222.4 683.3 M205.6 713.7 L205.2 716.2 L203.5 717.4 L200.2 717.4 L197.8 717.6 M220.1 683.6 L221.5 680.9 L222.8 678.6 L224.1 676.5 L224.9 673.2 M200.0 734.5 L199.9 737.6 L201.5 739.1 M221.9 671.8 L221.9 670.3 L223.1 667.4 M227.2 674.2 L228.2 673.1 L228.5 670.0 L227.0 668.4 L225.5 667.3 M211.2 701.2 L212.6 701.5 L213.9 703.1 L215.9 704.5 M212.3 695.8 L212.8 693.1 L213.9 691.1 L216.3 689.7 M207.5 698.7 L207.0 697.1 L206.1 695.4 M190.6 722.0 L193.7 723.1 L194.7 725.2 L194.4 727.8 L194.4 730.5 M199.7 709.0 L201.4 711.0 L202.9 712.8 M219.3 672.3 L222.7 671.9 L224.5 671.0 L227.7 671.5 L229.8 674.1 M222.1 702.4 L220.9 703.9 L221.1 705.9 L222.1 707.3 L221.7 709.7 L221.5 713.0 M225.5 674.9 L225.1 672.5 L225.8 669.6 L227.1 667.1 L228.2 665.3 M216.5 698.3 L213.8 700.2 L212.3 701.0 L211.3 702.8 L209.8 703.6 L207.6 702.6 M200.6 712.0 L197.7 710.2 L195.0 708.3 L193.5 707.1 L192.2 704.9 L192.1 702.2 M200.0 733.2 L196.6 732.3 L194.5 731.8 L191.4 731.4 M195.2 711.1 L194.0 709.6 L193.8 707.3 L194.0 704.6 L192.5 701.6 M185.6 721.6 L185.5 720.1 L183.8 717.5 M224.5 675.3 L227.0 675.4 L229.3 675.7 M203.6 725.5 L200.6 725.9 L197.9 726.7 L195.9 725.5 L195.2 723.6 L194.5 721.0 M226.4 675.4 L229.8 676.0 L232.7 674.5 L235.4 673.8 L237.9 675.3 L238.6 678.0 M205.6 715.3 L206.0 712.3 L207.6 710.7 L209.4 710.3 L211.0 709.8 L214.2 710.0 M220.8 686.2 L222.4 685.5 L224.7 684.1 M198.5 717.6 L198.8 719.7 L198.9 722.8 L198.1 725.0 M202.6 715.9 L199.9 715.1 L198.1 714.2 L196.5 714.3 L194.8 712.5 L192.2 711.9 M205.9 684.4 L206.0 687.9 L203.7 690.4 L201.9 690.6 L200.2 692.7 M194.5 713.8 L196.6 713.6 L198.2 713.5 M224.1 671.7 L225.6 671.3 L227.3 672.3 M210.0 686.3 L208.0 687.7 L205.9 689.1 L204.9 691.9 M198.1 717.6 L197.3 715.7 L198.2 713.6 L198.2 710.6 L200.2 707.9 M195.9 711.2 L195.0 712.5 L192.1 713.9 L190.7 713.2 L188.7 713.4 M196.4 716.5 L197.7 718.0 L198.7 720.9 M209.1 683.2 L211.6 682.8 L213.9 684.8 L216.6 686.9 M206.4 689.5 L204.6 691.8 L203.9 693.5 L202.8 695.5 M203.1 720.3 L200.0 720.3 L198.0 719.8 M221.9 683.0 L224.3 681.9 L226.2 681.6 L229.2 681.0 L231.1 680.4 L231.8 679.1 M214.2 680.0 L213.6 682.4 L211.7 684.8 L210.4 687.0 L207.7 688.1 M191.5 715.2 L192.7 713.1 L192.4 710.5 L193.3 708.3 L194.6 706.8 L196.9 705.3 M206.1 685.5 L207.0 684.3 L209.4 683.6 M187.1 720.2 L185.3 722.9 L182.8 724.7 L180.6 726.4 M195.4 707.7 L193.0 705.3 L190.4 704.4 L189.7 702.8 M219.0 674.9 L217.5 677.1 L217.4 679.0 L217.9 681.5 M210.7 680.4 L209.2 681.8 L206.3 681.7 L204.2 679.6 L202.7 677.0 L203.0 674.4 M218.6 699.6 L217.4 701.9 L215.5 702.6 L212.6 701.9 L209.5 701.3 L207.4 702.2 M206.3 700.7 L205.8 703.5 L203.8 705.7 L203.8 707.9 L205.8 709.9 M207.6 682.0 L210.0 679.7 L210.3 677.8 L210.0 675.3 L209.0 673.9 L207.3 673.5 M201.4 722.9 L203.5 720.7 L206.0 720.0 L207.5 719.0 M195.2 731.4 L194.6 728.3 L193.8 726.7 M226.8 691.3 L226.4 689.8 L227.1 688.1 L228.4 687.1 M205.4 687.0 L207.4 685.1 L207.7 682.0 M224.2 671.1 L224.3 668.6 L224.6 666.7 L226.1 665.8 L227.1 664.4 L228.8 663.3 M218.1 675.9 L217.9 673.0 L218.4 671.6 L219.7 668.8 L221.7 667.7 M225.4 673.0 L227.2 673.0 L229.0 671.9 L229.9 670.5 L230.1 668.7 M200.6 728.3 L202.6 730.7 L202.6 732.8 L201.3 734.7 L200.2 737.9 L199.4 741.3 M226.2 673.4 L224.1 675.3 L221.3 676.6 L218.4 677.2 L217.1 679.8 L215.6 681.0 M217.8 696.9 L219.7 696.0 L222.3 696.4 L225.3 695.4 M196.4 709.2 L194.7 710.1 L192.4 710.3 L190.0 709.3 L187.2 710.7 L185.3 710.8 M205.1 720.9 L203.7 722.6 L203.2 725.9 L200.7 728.1 M219.9 701.9 L217.5 702.0 L215.7 702.2 M216.2 696.1 L215.5 693.2 L213.5 690.7 L213.9 687.6 L212.9 686.2 L212.3 683.4 M227.1 684.5 L225.2 686.1 L223.1 686.5 M210.6 683.6 L211.8 680.8 L213.5 679.0 M208.5 714.0 L206.4 712.8 L206.0 710.5 L205.5 709.0 L206.1 707.6 M198.1 725.7 L196.7 726.4 L195.7 729.5 L196.8 732.2 M207.3 708.6 L210.3 707.6 L213.3 707.0 L214.8 704.8 L214.2 702.5 L214.9 699.6 M212.7 672.9 L210.4 673.5 L208.2 673.9 L206.2 675.5 M207.6 715.5 L210.5 715.7 L212.5 715.5 L215.0 717.5 L217.5 718.8 M212.7 679.7 L215.7 679.0 L218.2 680.0 L221.0 680.1 L222.7 679.6 M215.4 685.8 L217.8 684.8 L220.0 684.5 L222.1 682.0 M198.6 722.6 L200.9 720.4 L203.4 720.3 L206.6 720.7 L209.9 721.4 L211.3 723.2 M216.0 670.3 L216.7 667.9 L216.6 665.2 L218.8 662.8 M216.3 689.0 L218.9 688.5 L221.0 688.4 L222.6 688.8 M201.1 701.3 L203.0 701.8 L205.4 703.5 M204.4 715.6 L204.4 714.1 L205.1 711.8 L208.2 710.6 L209.6 709.5 M205.2 726.0 L208.2 724.6 L210.5 723.3 L211.8 722.0 L212.2 720.2 M207.0 711.8 L209.0 710.0 L211.6 708.3 L213.6 706.1 L215.6 705.2 M206.6 718.1 L209.2 717.7 L212.3 717.6 L214.8 715.7 L216.6 713.1 L218.8 712.8 M200.9 716.7 L198.1 714.7 L196.7 713.6 L195.3 712.8 L192.6 712.4 L190.2 711.0 M208.6 681.0 L207.4 683.8 L205.1 685.5 L203.3 686.7 M208.4 705.2 L206.0 707.1 L205.2 709.0 L203.6 709.9 L201.3 709.7 L198.5 709.4 M217.3 706.4 L215.7 706.7 L213.9 708.3 M189.2 717.6 L188.5 715.6 L187.4 714.6 L185.9 713.4 L184.1 713.6 M214.3 695.0 L216.2 694.0 L218.5 694.2 L220.3 693.1 M200.7 724.2 L201.5 722.5 L201.0 719.3 L198.4 717.2 L195.3 717.3 L192.6 717.8 M215.0 668.7 L212.5 669.6 L210.9 671.4 M209.9 697.1 L208.7 694.6 L207.0 693.3 L206.4 690.3 M203.8 717.3 L202.1 718.4 L198.8 718.8 L196.5 717.8 L194.3 718.6 M218.4 704.3 L216.2 703.9 L213.6 701.6 L212.5 699.6 M223.9 699.3 L225.9 697.8 L229.3 698.0 L230.8 699.1 L230.9 700.6" fill="none" stroke="#000" stroke-width="1.6"/>
<path d="M194 722h1v1h-1zM223 694h2v1h-2zM188 718h1v1h-1zM194 716h2v1h-2zM207 678h1v2h-1zM207 691h2v2h-2zM223 699h3v1h-3zM206 679h2v2h-2zM206 692h2v1h-2zM197 722h3v1h-3zM198 720h1v1h-1zM214 702h2v1h-2zM227 681h3v1h-3zM192 721h2v1h-2zM197 733h3v2h-3zM211 695h1v1h-1zM216 692h2v1h-2zM217 689h1v1h-1zM210 690h1v1h-1zM209 707h1v1h-1zM224 693h1v1h-1zM209 690h2v1h-2zM216 708h3v2h-3zM211 686h3v1h-3zM206 708h1v1h-1zM214 682h2v2h-2zM212 686h2v1h-2zM190 726h1v1h-1zM195 708h2v1h-2zM220 674h2v2h-2zM213 707h2v1h-2zM206 724h2v1h-2zM193 710h2v1h-2zM213 701h1v1h-1zM214 680h2v2h-2zM221 693h1v1h-1zM209 704h2v1h-2zM226 690h3v1h-3zM220 704h1v2h-1zM208 683h2v1h-2zM203 724h1v1h-1zM217 705h2v2h-2zM209 682h1v1h-1zM226 689h1v2h-1zM186 718h1v1h-1zM213 689h1v1h-1zM193 713h2v1h-2zM202 724h2v2h-2zM203 719h3v1h-3zM218 697h2v1h-2zM217 691h3v2h-3zM216 701h2v2h-2zM208 703h2v2h-2zM229 681h3v1h-3zM224 676h1v1h-1zM199 720h3v1h-3zM212 710h1v2h-1zM223 690h1v2h-1zM213 694h1v1h-1zM212 706h1v2h-1z" fill="#5e504b"/>
<path d="M210 696h1v2h-1zM204 713h2v2h-2zM211 681h1v1h-1zM223 684h1v1h-1zM211 679h2v1h-2zM213 690h1v2h-1zM220 668h2v1h-2zM227 679h3v1h-3zM190 719h2v1h-2zM222 671h2v2h-2zM221 702h1v1h-1zM208 687h2v1h-2zM187 723h1v1h-1zM203 725h2v1h-2zM228 685h2v2h-2zM220 667h1v1h-1zM190 726h2v2h-2zM215 671h2v2h-2zM207 692h2v2h-2zM210 690h1v1h-1zM200 716h1v2h-1zM225 694h2v2h-2zM210 697h1v2h-1zM215 689h1v1h-1zM200 729h2v1h-2zM197 718h2v1h-2zM226 678h1v2h-1zM198 716h3v1h-3zM228 676h2v1h-2zM204 731h1v2h-1zM189 716h2v2h-2zM216 668h3v1h-3zM210 709h2v2h-2zM211 696h1v2h-1zM218 670h2v1h-2zM209 692h2v2h-2zM221 701h1v1h-1zM204 718h2v1h-2zM224 683h1v1h-1zM209 701h1v1h-1zM217 686h2v1h-2zM206 691h2v2h-2zM216 687h1v1h-1zM208 715h2v1h-2zM222 701h3v2h-3zM201 704h2v1h-2zM190 725h1v1h-1zM221 686h3v2h-3zM211 698h1v2h-1zM205 701h2v1h-2zM204 715h1v1h-1zM188 721h1v1h-1zM211 673h3v1h-3zM201 711h2v1h-2zM210 709h1v1h-1zM227 672h3v1h-3zM202 716h1v1h-1zM196 731h1v1h-1zM209 702h3v2h-3zM220 700h1v1h-1zM218 668h2v1h-2zM189 723h2v1h-2zM216 684h2v2h-2zM209 697h1v1h-1zM211 706h1v1h-1zM200 727h1v1h-1zM194 719h2v1h-2zM222 678h2v1h-2zM205 732h3v2h-3zM199 708h1v1h-1zM185 720h2v2h-2zM216 703h1v1h-1zM218 686h1v1h-1zM199 705h3v2h-3zM210 694h1v2h-1zM219 668h3v1h-3zM191 730h3v2h-3zM207 691h1v2h-1zM206 711h3v1h-3zM195 731h3v1h-3zM205 723h2v1h-2zM225 674h3v1h-3zM214 698h3v2h-3zM218 693h2v2h-2zM216 679h2v2h-2zM197 715h2v1h-2zM193 720h2v2h-2zM201 713h2v2h-2zM221 668h2v2h-2zM206 680h1v1h-1zM211 695h3v1h-3zM189 725h1v2h-1zM198 729h3v1h-3zM216 672h1v2h-1zM206 689h2v2h-2zM223 699h1v1h-1zM202 719h1v1h-1zM187 719h1v1h-1zM216 699h2v2h-2zM184 716h2v2h-2z" fill="#004266"/>
<path d="M155 729h2v2h-2zM160 744h3v1h-3zM175 750h3v1h-3zM157 750h2v1h-2zM153 735h1v2h-1zM161 752h3v2h-3zM164 729h1v1h-1zM165 732h3v1h-3zM165 729h2v2h-2zM197 757h2v1h-2zM184 755h1v1h-1zM158 736h3v2h-3zM180 750h1v1h-1zM155 745h2v1h-2zM160 729h2v2h-2zM172 748h1v1h-1zM166 752h3v1h-3zM187 746h1v1h-1zM154 737h1v1h-1zM165 735h2v1h-2zM158 733h1v2h-1zM187 756h1v1h-1zM161 729h2v1h-2zM173 737h1v2h-1zM186 754h2v1h-2zM171 738h1v2h-1zM168 747h1v2h-1zM168 756h3v2h-3zM157 742h1v2h-1zM164 733h2v2h-2zM173 743h2v1h-2zM172 738h2v2h-2zM173 732h1v2h-1zM164 740h2v2h-2zM177 737h3v1h-3zM174 740h1v1h-1zM162 757h2v1h-2zM193 749h1v2h-1zM179 752h1v1h-1zM202 757h1v1h-1zM185 745h2v1h-2zM188 749h2v1h-2zM158 732h1v2h-1zM162 739h1v1h-1zM174 753h2v2h-2zM166 747h2v2h-2zM170 737h1v1h-1zM170 742h1v1h-1zM187 746h1v1h-1zM161 743h3v1h-3zM157 728h3v2h-3zM192 747h2v1h-2zM155 740h1v1h-1zM167 726h1v1h-1zM170 754h3v1h-3zM170 729h2v1h-2zM187 742h2v1h-2zM159 745h3v2h-3zM180 742h2v1h-2zM169 729h1v2h-1zM153 735h2v1h-2zM160 753h2v1h-2zM161 741h2v1h-2zM183 755h1v2h-1zM170 754h2v1h-2zM185 750h2v1h-2zM161 729h1v1h-1zM180 754h3v2h-3zM168 730h2v1h-2zM172 730h1v2h-1zM185 745h1v1h-1zM162 749h2v1h-2zM180 757h2v2h-2zM163 732h1v1h-1zM161 726h2v1h-2zM192 750h3v1h-3zM191 751h2v2h-2zM157 724h1v2h-1zM167 753h1v1h-1zM179 736h2v1h-2zM181 756h1v1h-1zM167 752h3v2h-3zM180 751h2v1h-2zM166 726h2v2h-2zM177 740h2v2h-2zM157 750h2v1h-2zM168 748h2v2h-2zM170 751h1v1h-1zM173 731h2v2h-2zM154 724h3v1h-3zM185 753h1v1h-1zM168 731h3v1h-3zM187 744h1v2h-1zM160 725h1v1h-1zM182 747h2v1h-2zM158 754h3v2h-3zM166 737h3v2h-3zM164 754h2v1h-2zM161 749h1v1h-1zM184 753h1v1h-1zM171 739h1v1h-1zM170 740h3v2h-3zM176 734h1v1h-1zM158 736h2v1h-2zM178 755h1v2h-1zM165 755h2v2h-2zM156 749h2v2h-2zM160 750h3v1h-3zM161 737h3v1h-3zM186 755h1v2h-1zM189 747h1v1h-1zM161 732h1v2h-1zM180 737h2v2h-2zM159 747h2v1h-2zM192 752h3v2h-3zM164 736h3v2h-3zM177 743h1v1h-1zM163 756h2v2h-2zM159 739h1v2h-1zM156 741h2v1h-2zM169 743h2v1h-2zM200 756h1v2h-1zM161 723h1v1h-1zM186 752h2v1h-2zM186 753h2v2h-2zM155 740h1v2h-1zM182 752h2v2h-2zM189 753h2v2h-2zM177 740h2v1h-2zM163 739h2v1h-2zM157 728h1v1h-1zM203 755h2v1h-2zM168 753h2v2h-2zM173 731h1v1h-1zM160 750h1v1h-1zM154 729h2v1h-2zM171 747h3v1h-3zM189 749h2v1h-2zM155 735h1v1h-1zM168 744h1v2h-1zM166 749h1v1h-1zM174 741h3v2h-3zM189 748h1v2h-1zM162 756h2v1h-2zM167 748h2v2h-2zM187 749h3v2h-3zM184 754h2v1h-2zM159 738h2v1h-2zM163 737h1v1h-1zM173 754h3v1h-3zM163 756h2v1h-2zM166 742h3v2h-3zM176 752h1v1h-1zM157 725h1v1h-1zM154 730h1v1h-1zM162 746h2v1h-2zM177 752h3v1h-3zM171 743h2v1h-2zM161 755h1v2h-1zM159 739h2v2h-2zM169 737h3v2h-3zM171 740h2v1h-2zM168 731h2v1h-2zM200 753h2v2h-2zM168 754h1v2h-1zM180 747h1v1h-1zM156 730h1v1h-1zM184 749h2v1h-2zM156 724h1v1h-1zM159 751h2v2h-2zM159 736h2v2h-2zM184 753h1v2h-1zM187 747h1v1h-1zM193 749h3v2h-3zM158 734h3v2h-3zM179 743h2v1h-2zM162 732h2v2h-2zM185 744h3v1h-3zM182 751h1v1h-1zM184 748h2v2h-2zM157 736h2v1h-2zM180 740h1v2h-1zM162 750h1v1h-1zM156 735h2v2h-2zM157 726h2v1h-2zM199 755h1v1h-1zM158 735h2v2h-2zM191 748h2v2h-2zM193 751h1v1h-1zM157 735h2v2h-2zM165 742h2v2h-2zM189 748h2v1h-2zM164 735h1v2h-1zM165 726h1v1h-1zM166 749h2v1h-2zM165 754h1v1h-1zM178 754h1v2h-1zM161 740h1v2h-1zM161 747h1v2h-1zM160 747h1v2h-1zM169 737h2v2h-2zM186 755h2v1h-2zM158 733h1v1h-1zM162 744h2v1h-2zM160 750h2v1h-2zM165 753h1v1h-1zM173 743h1v1h-1zM181 742h2v1h-2zM182 750h2v2h-2zM195 751h1v1h-1zM172 732h3v2h-3z" fill="#000"/>
<path d="M164 737h3v2h-3zM176 752h2v1h-2zM184 749h2v1h-2zM163 727h2v1h-2zM176 739h2v1h-2zM165 733h2v2h-2zM164 739h2v2h-2zM188 750h3v2h-3zM190 748h2v1h-2zM180 744h2v1h-2zM175 743h2v2h-2zM167 734h2v1h-2zM159 726h2v2h-2zM160 736h1v1h-1zM160 756h3v1h-3zM187 753h3v1h-3zM191 746h1v1h-1zM174 739h1v1h-1zM169 733h2v1h-2zM165 726h2v1h-2zM158 731h2v1h-2zM172 740h1v2h-1zM157 724h2v1h-2zM186 751h2v1h-2zM173 743h1v2h-1zM188 754h2v2h-2zM163 733h1v1h-1zM162 755h2v1h-2zM165 729h3v2h-3zM193 753h1v1h-1zM158 751h2v1h-2zM165 745h1v1h-1zM172 733h1v1h-1zM173 745h2v1h-2zM168 749h2v2h-2zM162 726h1v1h-1zM197 753h3v1h-3zM185 755h2v2h-2zM169 733h1v1h-1zM155 735h1v2h-1zM195 753h2v2h-2zM156 728h2v1h-2zM168 734h1v1h-1zM167 753h2v1h-2zM158 730h3v1h-3zM177 747h2v1h-2zM163 747h1v1h-1zM165 725h2v1h-2zM166 738h1v1h-1zM181 738h1v1h-1zM196 753h2v1h-2zM179 739h1v2h-1zM199 753h2v2h-2zM158 727h1v1h-1zM153 729h2v1h-2zM175 734h1v2h-1zM153 737h2v1h-2zM166 751h2v1h-2zM157 735h1v1h-1zM160 736h1v1h-1zM156 746h2v1h-2zM176 740h2v1h-2zM197 752h2v1h-2zM177 741h1v1h-1zM183 755h3v1h-3zM198 754h3v1h-3zM162 739h3v1h-3zM173 751h1v1h-1zM165 756h2v1h-2zM160 741h1v1h-1zM183 746h1v1h-1zM187 755h2v1h-2zM166 755h1v1h-1zM164 755h1v1h-1zM166 741h1v1h-1zM178 754h1v2h-1zM166 726h3v1h-3zM163 741h2v2h-2zM162 738h1v1h-1zM164 728h2v1h-2zM166 735h2v1h-2zM168 726h2v2h-2zM191 756h1v1h-1zM156 737h2v1h-2zM185 750h3v2h-3z" fill="#5e504b"/>
<path d="M178 749h1v1h-1zM178 735h1v2h-1zM170 741h3v2h-3zM157 728h3v1h-3zM193 748h2v2h-2zM177 750h3v1h-3zM168 753h2v1h-2zM182 745h2v1h-2zM158 744h2v1h-2zM176 739h1v1h-1zM170 728h2v2h-2zM164 749h3v1h-3zM162 750h1v2h-1zM202 756h1v1h-1zM170 731h2v1h-2zM163 737h1v1h-1zM159 730h3v1h-3zM170 753h1v1h-1zM153 728h2v1h-2zM189 746h1v1h-1zM200 756h2v1h-2zM185 747h2v1h-2zM177 753h1v1h-1zM162 728h3v1h-3zM171 737h1v1h-1zM169 754h2v1h-2zM170 742h2v1h-2zM165 732h2v2h-2zM158 738h1v2h-1zM182 757h3v2h-3zM188 754h2v1h-2zM160 742h3v1h-3zM175 754h2v2h-2zM172 732h1v2h-1zM170 738h2v1h-2zM172 755h3v1h-3zM172 751h2v1h-2zM169 739h3v1h-3zM172 736h2v2h-2zM190 750h2v1h-2zM166 750h2v1h-2zM157 749h1v1h-1zM166 737h3v1h-3zM158 737h1v1h-1zM189 750h3v1h-3zM160 734h3v2h-3zM158 735h1v1h-1zM171 752h3v2h-3zM171 753h1v1h-1zM182 740h2v2h-2zM180 752h2v1h-2zM160 750h1v2h-1zM156 737h1v2h-1zM185 748h2v1h-2zM166 741h1v1h-1zM177 750h2v2h-2zM169 753h1v2h-1zM156 734h1v1h-1zM164 749h2v2h-2zM172 750h1v2h-1zM194 749h2v1h-2zM189 745h1v2h-1zM171 752h3v1h-3zM174 744h2v1h-2zM162 751h3v2h-3zM160 738h1v2h-1zM165 730h1v2h-1zM159 751h3v2h-3zM165 749h1v1h-1zM178 742h1v1h-1zM158 728h2v1h-2zM157 742h2v1h-2zM185 744h2v1h-2zM183 740h2v1h-2zM172 740h3v1h-3zM155 740h2v1h-2zM169 729h2v1h-2zM161 735h2v1h-2zM172 735h1v1h-1zM173 733h3v1h-3zM170 739h2v1h-2zM159 734h2v1h-2zM170 735h2v1h-2zM156 729h1v1h-1zM173 752h3v1h-3zM165 754h2v2h-2zM173 736h2v2h-2zM163 730h2v2h-2zM155 723h2v2h-2zM165 734h2v2h-2zM159 751h1v1h-1zM167 726h2v2h-2zM181 750h3v1h-3zM169 734h1v1h-1zM168 743h1v1h-1zM194 749h2v2h-2zM168 746h1v1h-1zM174 738h1v2h-1zM164 737h2v1h-2zM158 736h1v1h-1zM194 756h2v1h-2zM164 735h2v2h-2zM186 750h2v1h-2zM161 751h1v1h-1zM182 756h3v2h-3zM174 748h1v1h-1zM170 749h3v2h-3zM153 734h1v2h-1zM194 757h2v2h-2zM170 733h1v2h-1zM187 754h1v2h-1zM164 743h2v1h-2zM167 733h2v1h-2zM173 732h2v2h-2zM177 733h3v1h-3zM162 730h2v1h-2zM191 748h1v1h-1zM176 733h2v2h-2zM175 734h2v2h-2zM164 755h2v1h-2zM188 748h1v2h-1zM161 746h1v1h-1zM166 757h1v1h-1zM173 743h2v1h-2z" fill="#004266"/>
<path d="M103 753h1v1h-1zM69 750h3v2h-3zM90 750h1v1h-1zM62 732h1v1h-1zM70 755h3v1h-3zM116 756h2v1h-2zM130 749h1v2h-1zM115 755h1v1h-1zM68 740h1v1h-1zM69 737h2v1h-2zM67 740h1v2h-1zM90 753h3v1h-3zM97 752h2v2h-2zM71 751h1v1h-1zM138 756h2v2h-2zM103 757h2v2h-2zM67 756h2v1h-2zM74 733h2v1h-2zM125 748h2v1h-2zM65 739h1v1h-1zM96 755h2v1h-2zM95 754h1v2h-1zM83 748h1v1h-1zM146 750h3v2h-3zM77 755h3v2h-3zM72 733h1v2h-1zM73 739h1v1h-1zM62 730h1v1h-1zM149 751h2v2h-2zM62 751h1v1h-1zM153 754h1v1h-1zM129 752h1v1h-1zM120 752h1v2h-1zM81 749h2v1h-2zM141 751h3v1h-3zM63 739h1v1h-1zM128 748h3v1h-3zM90 748h2v1h-2zM60 740h3v2h-3zM65 746h3v1h-3zM73 751h1v2h-1zM148 753h2v2h-2zM145 751h1v1h-1zM60 740h2v1h-2zM102 756h1v1h-1zM122 756h1v2h-1zM83 755h1v2h-1zM74 753h2v1h-2zM66 739h2v1h-2zM97 749h1v2h-1zM80 746h3v2h-3zM137 757h3v1h-3zM133 756h1v1h-1zM96 750h1v1h-1zM62 744h3v1h-3zM69 733h2v1h-2zM132 746h2v2h-2zM86 750h2v1h-2zM129 755h1v2h-1zM63 749h3v2h-3zM152 757h1v1h-1zM65 730h2v1h-2zM143 750h2v2h-2zM61 753h1v1h-1zM106 752h1v2h-1zM68 751h2v2h-2zM90 751h1v1h-1zM76 753h2v1h-2zM80 746h2v1h-2zM156 750h2v1h-2zM121 753h2v1h-2zM66 755h3v1h-3zM85 753h2v1h-2zM144 754h1v1h-1zM136 749h1v2h-1zM92 755h1v1h-1zM156 747h2v1h-2zM73 733h2v1h-2zM69 737h1v1h-1zM105 750h2v1h-2zM146 756h1v1h-1zM68 753h1v2h-1zM91 747h1v2h-1zM121 752h1v1h-1zM117 754h3v1h-3zM155 754h2v1h-2zM72 739h2v1h-2zM121 756h1v1h-1zM86 753h2v1h-2zM147 752h1v1h-1zM75 753h3v1h-3zM109 752h1v1h-1zM95 753h1v1h-1zM74 734h1v1h-1zM65 751h2v1h-2zM70 739h3v1h-3zM68 731h2v2h-2zM121 751h2v1h-2zM153 752h3v1h-3zM77 749h2v1h-2zM61 745h1v1h-1zM66 754h2v2h-2zM85 747h1v2h-1zM61 741h1v1h-1zM157 756h2v1h-2zM65 746h1v2h-1zM130 750h1v2h-1zM92 749h1v1h-1zM137 752h1v1h-1zM78 747h2v1h-2zM87 748h1v2h-1zM89 756h2v1h-2zM156 755h1v1h-1zM96 753h1v2h-1zM80 751h1v1h-1zM66 733h3v1h-3zM104 752h3v2h-3zM63 739h2v1h-2zM146 756h2v1h-2zM83 750h1v1h-1zM108 753h3v2h-3zM91 749h2v1h-2zM70 757h3v2h-3zM79 748h3v1h-3z" fill="#000"/>
<path d="M136 754h2v2h-2zM159 753h1v1h-1zM62 737h1v1h-1zM114 753h2v1h-2zM157 753h2v2h-2zM63 746h1v2h-1zM109 754h2v1h-2zM64 741h3v1h-3zM111 756h1v2h-1zM154 750h1v2h-1zM73 737h1v1h-1zM72 736h2v1h-2zM125 754h3v1h-3zM81 749h2v1h-2zM81 747h2v1h-2zM79 752h1v1h-1zM116 753h3v1h-3zM97 750h1v2h-1zM76 750h2v2h-2zM63 733h2v1h-2zM64 735h2v1h-2zM62 756h3v1h-3zM153 749h3v1h-3zM67 752h2v1h-2zM148 749h2v1h-2zM80 752h2v1h-2zM60 740h1v2h-1zM123 749h2v1h-2zM108 753h1v1h-1zM112 756h1v1h-1zM141 756h1v1h-1zM76 757h1v1h-1zM126 754h2v1h-2zM76 749h1v1h-1zM61 730h2v1h-2zM68 736h3v2h-3zM66 731h1v1h-1zM121 753h1v2h-1zM78 750h1v1h-1zM96 757h1v1h-1zM83 750h2v1h-2zM69 749h2v1h-2zM61 740h3v1h-3zM128 750h2v1h-2zM124 749h2v2h-2zM114 751h1v1h-1zM126 748h2v1h-2zM80 755h2v1h-2zM105 754h1v1h-1zM64 741h1v2h-1zM128 747h1v1h-1zM151 752h1v2h-1zM118 757h2v1h-2zM141 755h1v1h-1zM93 753h1v1h-1zM84 748h2v1h-2zM105 755h1v1h-1zM69 754h2v1h-2zM133 752h1v2h-1zM70 753h1v1h-1zM157 749h1v1h-1zM127 747h2v1h-2zM118 757h3v1h-3zM112 752h1v1h-1z" fill="#5e504b"/>
<path d="M77 756h3v2h-3zM61 756h3v2h-3zM70 756h2v1h-2zM150 756h1v1h-1zM129 757h2v2h-2zM76 747h2v1h-2zM143 752h2v2h-2zM68 749h1v1h-1zM113 750h1v1h-1zM109 757h1v1h-1zM60 748h2v1h-2zM152 757h3v1h-3zM111 757h2v2h-2zM141 750h1v1h-1zM113 757h2v2h-2zM117 753h1v1h-1zM138 754h3v1h-3zM100 757h2v1h-2zM99 753h1v1h-1zM132 753h2v1h-2zM155 748h2v2h-2zM85 746h3v2h-3zM65 755h2v1h-2zM74 733h1v2h-1zM85 755h1v1h-1zM132 755h1v1h-1zM136 748h3v1h-3zM137 749h2v1h-2zM147 756h1v1h-1zM79 753h3v1h-3zM112 755h3v2h-3zM143 757h1v1h-1zM71 739h1v2h-1zM132 756h2v1h-2zM83 751h2v2h-2zM78 750h3v1h-3zM62 729h2v1h-2zM88 752h2v2h-2zM71 735h2v1h-2zM84 755h2v1h-2zM91 756h2v1h-2zM96 749h2v1h-2zM101 757h2v1h-2zM97 749h2v2h-2zM131 750h3v1h-3zM122 755h1v2h-1zM77 750h3v2h-3zM144 753h1v1h-1zM148 751h1v1h-1zM73 733h1v1h-1zM128 747h1v1h-1zM101 753h2v2h-2zM96 752h3v1h-3zM85 748h1v1h-1zM90 747h1v1h-1zM70 738h1v1h-1zM101 754h3v2h-3zM70 744h2v1h-2zM68 732h2v1h-2zM73 754h1v2h-1zM112 753h2v1h-2zM70 735h1v2h-1zM149 754h1v1h-1zM95 753h1v2h-1zM69 738h1v2h-1zM121 752h1v2h-1zM90 754h1v1h-1zM66 746h1v1h-1zM115 756h2v1h-2zM72 750h1v1h-1zM121 749h1v2h-1zM142 750h1v1h-1z" fill="#004266"/>
<path d="M220 747h1v1h-1zM210 741h3v1h-3zM227 754h1v2h-1zM229 755h1v1h-1zM220 749h3v1h-3zM207 741h1v2h-1zM222 746h2v1h-2zM221 750h2v1h-2zM218 745h2v1h-2zM234 757h1v2h-1zM221 751h2v2h-2zM227 751h1v1h-1zM230 755h2v2h-2zM223 753h3v1h-3zM222 750h2v2h-2zM207 741h1v1h-1zM213 742h1v2h-1zM207 744h3v1h-3zM206 740h2v1h-2zM207 740h2v1h-2zM218 747h3v2h-3zM217 746h1v1h-1zM220 747h1v2h-1zM212 746h2v2h-2zM236 756h3v1h-3zM225 753h1v1h-1zM219 747h2v1h-2zM221 745h1v2h-1zM206 743h1v1h-1zM225 752h3v1h-3zM226 751h1v2h-1zM221 745h3v1h-3zM226 749h1v1h-1zM233 754h2v1h-2zM225 750h1v2h-1zM234 755h3v2h-3zM233 754h1v1h-1zM232 757h3v1h-3zM216 746h2v2h-2zM217 743h3v1h-3zM203 740h2v2h-2zM207 740h2v1h-2zM209 740h2v1h-2zM215 747h2v1h-2zM209 745h3v2h-3zM229 750h2v1h-2zM231 756h1v2h-1zM204 741h1v2h-1zM217 747h1v2h-1zM223 750h2v2h-2zM228 753h2v1h-2zM224 749h2v1h-2zM217 745h1v2h-1zM218 744h3v2h-3zM206 741h1v1h-1zM208 739h2v1h-2zM214 746h2v1h-2zM228 753h2v1h-2zM226 753h2v1h-2zM209 742h1v2h-1zM205 740h1v1h-1zM232 756h1v1h-1zM217 746h1v2h-1zM233 754h1v2h-1zM206 740h2v1h-2zM219 749h1v1h-1z" fill="#000"/>
<path d="M223 747h2v2h-2zM236 755h3v2h-3zM209 741h3v2h-3zM224 753h2v2h-2zM229 752h1v1h-1zM225 748h2v2h-2zM229 755h2v1h-2zM235 756h2v2h-2zM220 744h2v1h-2zM231 755h2v1h-2zM207 741h1v1h-1zM224 751h2v2h-2zM204 743h1v2h-1zM206 742h3v1h-3zM234 755h2v2h-2zM213 744h1v1h-1zM223 751h2v1h-2zM221 749h2v1h-2zM214 741h1v1h-1zM214 747h2v1h-2zM226 749h1v1h-1zM210 744h1v2h-1zM228 749h2v1h-2zM211 746h1v2h-1z" fill="#004266"/>
<polyline points="249.7,678.8 254.6,686.7 253.6,696.6 249.7,706.4 242.8,714.3 235.9,723 227,729" fill="none" stroke="#000" stroke-width="1.3" stroke-dasharray="5 3 2 2 6 4"/>
<path d="M229 663.5h6M246 663.5h6M257 662.5h8M270 663.5l9 1M283 664.5h3" fill="none" stroke="#000" stroke-width="1.5"/>
<polyline points="306,663 322,662" fill="none" stroke="#000" stroke-width="1.5"/>
<polyline points="240,700 244,694 247,690" fill="none" stroke="#000" stroke-width="1.5" stroke-dasharray="3 3"/>
<polyline points="344.3,659.8 373.9,653.3 398.5,648.2 418.2,647.3 437.9,649.9 452.7,654.8 467.5,663.3 477.3,670.8 487,678.3 500,686.9" fill="none" stroke="#000" stroke-width="1.6"/>
<polyline points="516,711 526.8,712.4 533,719.8 544,716 553.9,711 563.7,703.8 571,698.5" fill="none" stroke="#000" stroke-width="1.5" stroke-dasharray="30 2 14 2 40"/>
<path d="M791 633h2v1h-2zM799 617h1v1h-1zM799 587h1v1h-1zM790 637h2v1h-2zM798 594h2v1h-2zM792 590h3v2h-3zM798 604h2v1h-2zM795 624h1v1h-1zM796 650h3v1h-3zM796 594h2v1h-2zM795 603h1v1h-1zM799 571h2v1h-2zM793 584h1v1h-1zM789 601h1v1h-1zM792 607h1v1h-1zM794 623h2v2h-2zM803 572h2v2h-2zM788 603h2v2h-2zM793 618h2v1h-2zM793 608h1v1h-1zM805 571h1v2h-1zM800 569h2v2h-2zM802 572h2v1h-2zM800 613h1v1h-1zM794 642h2v1h-2zM793 624h2v1h-2zM799 581h2v2h-2zM804 569h2v1h-2zM797 583h3v1h-3zM798 580h2v1h-2zM794 604h1v2h-1zM798 640h3v1h-3zM796 643h1v1h-1zM796 598h1v1h-1zM796 632h2v2h-2zM797 591h1v2h-1zM794 635h2v1h-2zM789 598h2v1h-2zM802 572h1v1h-1zM805 568h1v2h-1zM800 617h3v1h-3zM798 624h1v2h-1zM797 587h1v1h-1zM795 620h1v2h-1zM800 636h3v1h-3zM794 590h2v2h-2zM796 610h3v2h-3zM793 614h1v1h-1zM794 649h1v2h-1zM797 635h2v1h-2zM794 608h1v1h-1zM797 588h2v1h-2zM799 579h1v2h-1zM795 579h1v2h-1zM794 650h1v1h-1zM797 589h1v1h-1zM792 608h1v1h-1zM793 629h3v2h-3zM800 638h1v1h-1zM795 641h2v1h-2zM794 592h2v1h-2zM790 594h2v2h-2zM794 628h3v2h-3zM794 606h1v2h-1zM796 598h2v1h-2zM793 640h2v1h-2zM798 608h3v2h-3zM795 602h3v1h-3zM799 623h2v1h-2zM796 618h1v1h-1zM796 597h3v1h-3zM791 638h1v1h-1zM790 596h1v2h-1zM794 585h1v1h-1zM792 615h1v1h-1zM798 585h3v2h-3zM793 609h2v1h-2zM792 590h2v1h-2zM799 607h3v1h-3zM793 592h3v2h-3zM800 614h2v2h-2zM791 614h3v1h-3zM790 605h1v1h-1zM798 618h3v2h-3zM793 630h3v1h-3zM797 649h1v2h-1zM796 623h1v1h-1zM795 607h1v1h-1zM806 568h1v1h-1zM796 644h1v1h-1zM798 607h1v2h-1zM793 599h2v2h-2zM798 580h1v1h-1zM794 612h1v1h-1zM801 640h2v1h-2zM798 608h2v1h-2zM794 585h1v1h-1zM791 636h2v1h-2zM797 595h2v2h-2zM793 624h2v1h-2zM797 602h1v1h-1zM803 572h1v1h-1zM791 588h2v1h-2zM798 621h1v2h-1zM794 614h2v1h-2zM796 600h2v2h-2zM799 627h2v1h-2zM798 574h1v1h-1zM792 606h2v1h-2zM797 598h1v2h-1zM799 622h3v2h-3zM799 609h3v2h-3zM798 601h2v2h-2zM793 642h1v1h-1zM794 624h1v2h-1zM796 599h1v2h-1zM797 605h2v2h-2zM793 625h2v2h-2zM792 638h1v1h-1zM795 592h2v1h-2zM790 605h1v2h-1zM800 609h1v2h-1zM801 571h1v1h-1zM799 642h2v1h-2zM792 633h2v1h-2zM791 639h2v2h-2zM797 643h3v1h-3zM793 635h3v1h-3zM799 638h2v1h-2zM795 601h3v1h-3zM804 568h2v1h-2zM796 586h2v2h-2zM792 599h1v1h-1zM802 568h2v1h-2zM797 598h1v1h-1zM799 632h2v1h-2zM793 640h2v1h-2zM799 584h1v1h-1zM793 601h1v1h-1zM800 585h1v1h-1zM799 620h2v2h-2zM795 648h2v1h-2zM790 597h3v1h-3zM797 604h3v2h-3zM798 641h3v1h-3zM800 641h1v1h-1zM799 619h1v2h-1zM792 586h3v1h-3zM795 615h2v1h-2zM799 616h2v1h-2zM799 609h1v2h-1zM790 600h3v1h-3zM792 631h1v1h-1zM792 589h2v1h-2zM791 638h2v1h-2zM800 595h2v2h-2zM795 641h2v1h-2zM801 639h2v1h-2zM794 584h3v2h-3zM801 590h2v1h-2zM796 598h3v1h-3zM800 614h1v1h-1zM792 633h1v1h-1zM796 609h2v1h-2zM799 574h1v1h-1zM791 616h2v2h-2zM791 636h3v1h-3zM790 598h2v1h-2zM799 595h2v1h-2zM798 591h1v2h-1zM796 646h1v1h-1zM795 640h2v1h-2zM795 633h3v1h-3zM795 599h2v1h-2zM799 579h1v2h-1zM791 591h2v2h-2zM789 601h3v1h-3zM798 593h2v1h-2zM795 604h3v1h-3zM794 615h1v1h-1zM805 567h1v1h-1zM792 634h3v1h-3zM793 600h1v1h-1zM794 626h3v2h-3zM791 594h2v2h-2zM794 585h2v1h-2zM796 605h2v1h-2zM797 593h1v2h-1zM796 617h1v2h-1zM797 647h2v1h-2zM803 568h1v1h-1zM797 582h2v1h-2zM794 590h2v1h-2zM792 587h1v1h-1zM798 605h1v2h-1zM796 616h1v1h-1zM798 644h1v2h-1zM791 605h1v2h-1zM792 607h1v1h-1zM798 622h2v1h-2zM795 596h2v1h-2zM791 613h1v1h-1zM793 621h1v1h-1zM794 628h3v2h-3zM803 572h3v1h-3zM800 574h1v1h-1zM805 567h3v1h-3zM798 635h1v1h-1zM794 591h1v2h-1zM795 629h3v2h-3zM800 591h2v1h-2zM798 619h1v2h-1zM798 602h3v1h-3zM791 603h2v2h-2zM800 588h1v1h-1zM793 642h2v1h-2zM800 620h2v2h-2zM794 614h2v2h-2zM795 608h1v1h-1zM792 617h3v2h-3zM803 574h1v2h-1zM801 619h2v1h-2zM797 597h2v1h-2zM792 604h1v2h-1zM798 612h2v1h-2zM800 578h1v1h-1zM797 645h2v2h-2zM797 620h3v1h-3zM798 642h1v2h-1zM800 639h2v1h-2zM796 598h1v1h-1zM798 642h1v1h-1zM798 605h2v1h-2zM799 638h3v1h-3zM789 600h1v1h-1zM800 613h1v1h-1zM795 627h1v1h-1zM797 624h3v1h-3zM793 637h2v1h-2zM794 615h2v2h-2zM798 590h2v2h-2zM800 615h3v1h-3zM800 635h1v1h-1zM794 634h3v2h-3zM794 615h3v2h-3zM797 590h1v2h-1zM800 581h3v1h-3zM794 607h2v1h-2zM790 603h1v2h-1zM794 619h1v1h-1zM796 599h1v1h-1zM793 630h2v1h-2zM794 601h1v2h-1zM797 603h2v1h-2zM792 586h2v1h-2zM791 636h1v1h-1zM790 600h1v2h-1zM800 577h2v2h-2zM795 609h1v2h-1zM798 619h3v1h-3zM793 594h3v2h-3zM803 567h2v1h-2z" fill="#000"/>
<path d="M800 622h2v1h-2zM798 608h2v2h-2zM796 583h1v1h-1zM800 635h3v2h-3zM798 616h2v1h-2zM798 619h2v2h-2zM804 569h1v2h-1zM790 612h1v2h-1zM790 595h1v1h-1zM799 630h2v2h-2zM802 573h2v1h-2zM795 635h2v1h-2zM793 615h2v1h-2zM806 569h1v1h-1zM791 632h3v1h-3zM790 604h2v1h-2zM797 633h2v1h-2zM802 576h1v2h-1zM792 620h2v1h-2zM794 608h2v1h-2zM798 610h2v2h-2zM792 610h1v2h-1zM792 601h3v1h-3zM797 633h1v2h-1zM794 611h1v1h-1zM798 600h3v1h-3zM798 644h2v2h-2zM794 587h2v1h-2zM806 567h3v1h-3zM801 590h3v1h-3zM799 632h3v1h-3zM791 598h2v1h-2zM795 605h3v2h-3zM795 626h3v1h-3zM797 627h1v1h-1zM790 593h2v2h-2zM798 634h1v1h-1zM795 599h2v2h-2zM795 598h3v2h-3zM793 591h2v2h-2zM795 579h3v1h-3zM799 629h2v1h-2zM794 618h3v2h-3zM796 585h1v1h-1zM793 596h1v1h-1zM798 643h1v1h-1zM794 596h1v1h-1zM797 586h3v2h-3zM791 633h2v1h-2zM798 649h1v1h-1zM797 600h1v2h-1zM792 607h2v2h-2zM798 643h2v2h-2zM790 611h1v1h-1zM794 646h3v1h-3zM798 638h3v2h-3zM791 632h1v1h-1zM797 602h2v1h-2zM800 618h2v2h-2zM794 609h3v1h-3zM796 646h3v2h-3zM796 614h3v2h-3zM802 615h2v2h-2zM799 621h2v1h-2zM800 574h2v1h-2zM796 627h3v2h-3zM790 637h3v2h-3zM797 602h2v2h-2z" fill="#004266"/>
<polygon points="508,693.5 511.5,697 515.5,702 515,710.5 510.5,711 507.5,702" fill="#004266" stroke="#000" stroke-width="1.2"/>
<circle cx="407.0" cy="407.0" r="158.5" fill="none" stroke="#d2d2d2" stroke-width="1" stroke-dasharray="734.91 21.50 244.47 0" shape-rendering="geometricPrecision"/>
<circle cx="407.0" cy="407.0" r="278.5" fill="none" stroke="#d2d2d2" stroke-width="1" stroke-dasharray="1300.40 21.50 432.97 0" shape-rendering="geometricPrecision"/>
<circle cx="407.0" cy="407.0" r="398.5" fill="none" stroke="#d2d2d2" stroke-width="1" stroke-dasharray="1865.89 21.50 621.46 0" shape-rendering="geometricPrecision"/>
<circle cx="407.0" cy="407.0" r="518.5" fill="none" stroke="#d2d2d2" stroke-width="1" shape-rendering="geometricPrecision"/>
<circle cx="407.0" cy="407.0" r="39.5" fill="none" stroke="#f00" stroke-width="1" stroke-dasharray="179.14 12.00 62.05 0" />
<text x="405.8" y="11.2" text-anchor="middle" font-family="Liberation Mono, DejaVu Sans Mono, monospace" font-size="11" fill="#ffff80" shape-rendering="auto">313</text>
<text x="405.8" y="131.2" text-anchor="middle" font-family="Liberation Mono, DejaVu Sans Mono, monospace" font-size="11" fill="#ffff80" shape-rendering="auto">219</text>
<text x="405.8" y="251.2" text-anchor="middle" font-family="Liberation Mono, DejaVu Sans Mono, monospace" font-size="11" fill="#ffff80" shape-rendering="auto">125</text>
<text x="405.8" y="370.2" text-anchor="middle" font-family="Liberation Mono, DejaVu Sans Mono, monospace" font-size="11" fill="#ffff80" shape-rendering="auto">31</text>
<g stroke="#ffff00" stroke-width="1" fill="none" shape-rendering="auto"><circle cx="95" cy="715.5" r="4"/><path d="M92.5 715.5h5M95 713v5"/></g>
<path d="M477 684.5h7M484 730.5h7M473 788.5h7M476.5 785v7" stroke="#cc5c08" stroke-width="1" fill="none"/>
</svg>
<div id="legend">
<span class="lt" style="left:3px;top:2px;color:#eee">Symbols</span>
<span class="lt" style="left:43px;top:2px;color:#fff">-CG</span>
<span class="lt" style="left:68px;top:2px;color:#fff">-IC</span>
<span class="lt" style="left:89px;top:2px;color:#fff">+CG</span>
<span class="lt" style="left:114px;top:2px;color:#fff">+IC</span>
<span class="lt" style="left:143px;top:2px;color:#ddd;font-size:9.1px">Strike age color codes</span>
<span class="lt" style="left:3px;top:15px;color:#eee">Recent</span>
<span class="lt" style="left:3px;top:28px;color:#eee">Old</span>
<span class="lt" style="left:143.500px;top:15px;color:#e8d800">15+</span>
<span class="lt" style="left:178.500px;top:15px;color:#e0a000">30+</span>
<span class="lt" style="left:213px;top:15px;color:#e08800">45+</span>
<span class="lt" style="left:143.500px;top:28px;color:#d87000">60+</span>
<span class="lt" style="left:178.500px;top:28px;color:#e06000">75+</span>
<span class="lt" style="left:213px;top:28px;color:#e03800">90+</span>
<svg width="242" height="42" style="position:absolute;left:0;top:0" fill="none" stroke-width="1">
<g stroke="#00e8f0"><circle cx="50.500" cy="20.500" r="4"/><path d="M48 20.500h5M72 20.500h7"/><circle cx="100.500" cy="20.500" r="4"/><path d="M98 20.500h5M100.500 18v5M122 20.500h7M125.500 17v7"/></g>
<g stroke="#ffff00"><circle cx="50.500" cy="33.500" r="4"/><path d="M48 33.500h5M72 33.500h7"/><circle cx="100.500" cy="33.500" r="4"/><path d="M98 33.500h5M100.500 31v5M122 33.500h7M125.500 30v7"/></g>
</svg>
</div>
<div id="copy">©2005 Astrogenic Systems</div>

<div id="p1" class="panel" style="left:812px;top:8px;width:318px;height:318px"></div>
<div id="p2" class="panel" style="left:812px;top:333px;width:318px;height:113px"></div>
<div id="p3" class="panel" style="left:812px;top:453px;width:318px;height:348px"></div>

<div class="btn b" style="left:819px;top:16px;width:56px;height:16px;background:#5c0000;color:#ddd">STRIKE</div>
<div class="btn b" style="left:883px;top:16px;width:56px;height:16px;background:#333;color:#ccc">NOISE</div>
<div class="btn b" style="left:994px;top:16px;width:126px;height:16px;background:#333;color:#fff;text-align:left"><span style="position:absolute;left:3px;top:0;letter-spacing:0.5px">Bng 225°</span><span style="position:absolute;right:3px;top:0;color:#0f0">342mi</span></div>

<div class="btn" style="left:821px;top:64px;width:80px;height:14px;background:#5e5e5e;color:#eee">Strikes/min</div>
<div class="btn" style="left:931px;top:64px;width:80px;height:14px;background:#5e5e5e;color:#eee">Close/min</div>
<div class="btn" style="left:1041px;top:64px;width:80px;height:14px;background:#5e5e5e;color:#eee">Noises/min</div>

<div class="big" style="right:235px;top:84px;color:#fff">0</div>
<div class="big" style="right:125px;top:84px;color:#fff">0</div>
<div class="big" style="right:16px;top:84px;color:#bbb">0</div>

<div class="t r" style="right:235px;top:131px;color:#eee">Total Strikes</div>
<div class="t r" style="right:235px;top:149px;color:#eee">37</div>
<div class="t r" style="right:125px;top:131px;color:#eee">Total Close</div>
<div class="t r" style="right:125px;top:149px;color:#eee">0</div>
<div class="t r" style="right:16px;top:131px;color:#bbb">Total Noises</div>
<div class="t r" style="right:16px;top:149px;color:#eee">101</div>

<div class="t" style="left:821px;top:202px;color:#bbb">Lightning type distribution</div>
<div class="hr" style="left:821px;top:217px;width:303px"></div>

<div class="t b" style="left:821px;top:225px;color:#fff">Cloud-ground</div>
<div class="t" style="left:913px;top:225px;color:#ddd">+</div>
<div class="bar" style="left:925px;top:227px"><i style="width:8px;background:#f00"></i></div>
<div class="t b" style="left:980px;top:225px;color:#fff">16%</div>
<div class="dash" style="left:1016px;top:231px"></div>
<div class="bar" style="left:1028px;top:227px"><i style="width:8px;background:#9cf"></i></div>
<div class="t b" style="left:1082px;top:225px;color:#fff">16%</div>
<div class="t" style="left:821px;top:249px;color:#bbb">Count</div>
<div class="t b" style="left:925px;top:249px;color:#fff">6</div>
<div class="t b" style="left:1028px;top:249px;color:#fff">6</div>

<div class="t b" style="left:821px;top:279px;color:#fff">Intracloud</div>
<div class="t" style="left:913px;top:279px;color:#ddd">+</div>
<div class="bar" style="left:925px;top:281px"><i style="width:16px;background:#e85aa8"></i></div>
<div class="t b" style="left:980px;top:279px;color:#fff">32%</div>
<div class="dash" style="left:1016px;top:285px"></div>
<div class="bar" style="left:1028px;top:281px"><i style="width:17px;background:#0f0"></i></div>
<div class="t b" style="left:1082px;top:279px;color:#fff">35%</div>
<div class="t" style="left:821px;top:303px;color:#bbb">Count</div>
<div class="t b" style="left:925px;top:303px;color:#fff">12</div>
<div class="t b" style="left:1028px;top:303px;color:#fff">13</div>

<div class="date" style="left:821px;top:336px">2/2/2026 7:54:56 PM</div>
<div class="hr" style="left:821px;top:358px;width:303px"></div>

<div class="t" style="left:821px;top:376px;color:#eee">Squelch</div>
<div class="t" style="left:909px;top:376px;color:#eee">0</div>
<div class="t" style="left:981px;top:376px;color:#eee">Upload</div>
<div class="t" style="left:1061px;top:376px;color:#bbb">Disabled</div>
<div class="t" style="left:821px;top:396px;color:#eee">Persistence</div>
<div class="t" style="left:909px;top:396px;color:#eee">90 min</div>
<div class="t" style="left:981px;top:396px;color:#eee">Capture</div>
<div class="t" style="left:1061px;top:396px;color:#0f0">Active</div>
<div class="t" style="left:821px;top:416px;color:#eee">Range</div>
<div class="t" style="left:909px;top:416px;color:#eee">313 mi</div>
<div class="t" style="left:981px;top:416px;color:#eee">Receiver</div>
<div class="t" style="left:1061px;top:416px;color:#0f0">Enabled</div>

<div class="t" style="left:821px;top:463px;color:#bbb">Uptime</div>
<div class="t" style="left:909px;top:463px;color:#eee">511:40</div>
<div class="t" style="left:981px;top:463px;color:#bbb">Peak time</div>
<div class="t" style="left:1061px;top:463px;color:#bbb">Plot</div>
<div class="t" style="left:821px;top:486px;color:#bbb">Peak rate</div>
<div class="t" style="left:909px;top:486px;color:#eee">1/min</div>
<div class="t" style="left:981px;top:486px;color:#eee">7:53 PM</div>
<div class="t" style="left:1061px;top:486px;color:#eee">Strike</div>
<div class="t" style="left:822px;top:516px;color:#bbb">Trend graph</div>
<div class="t" style="left:908px;top:516px;color:#eee">60 min</div>

<svg id="graph" width="318" height="280" viewBox="813 525 318 280" style="position:absolute;left:813px;top:525px" shape-rendering="crispEdges">
<g stroke="#d0d0d0" stroke-width="1" fill="none">
<path d="M1088.500 542v236M822 777.500h267"/>
<path d="M1086 542.500h5M1086 581.500h5M1086 620.500h5M1086 659.500h5M1086 698.500h5M1086 738.500h5"/>
<path d="M822.500 775v3M866.500 775v3M911.500 775v3M955.500 775v3M999.500 775v3M1044.500 775v3"/>
</g>
<g stroke="#fff" stroke-width="1" fill="none" shape-rendering="auto">
<path d="M822.500 777v-7.500h3.500l1 7.500"/>
<path d="M866.500 777l2-7.500h3l2 7.500"/>
<path d="M899 777l2-7.500h3l2 7.500"/>
<path d="M931.500 777l2-7.500h3l2 7.500"/>
<path d="M1079 777l2-7.500h3l2 7.500"/>
</g>
<g font-family="DejaVu Sans, Liberation Sans, sans-serif" font-size="10.8" fill="#ccc">
<text x="1091.5" y="546.500" font-size="11.6">30</text><text x="1091.5" y="625" font-size="11.6">20</text><text x="1091.5" y="703" font-size="11.6">10</text>
<text x="821" y="793">60</text><text x="865" y="793">50</text><text x="909.5" y="793">40</text><text x="953.5" y="793">30</text><text x="997.5" y="793">20</text><text x="1042.5" y="793">10</text><text x="1087" y="793">0</text><text x="1100" y="793" font-size="10.4">min</text>
</g>
</svg>

</body></html>
